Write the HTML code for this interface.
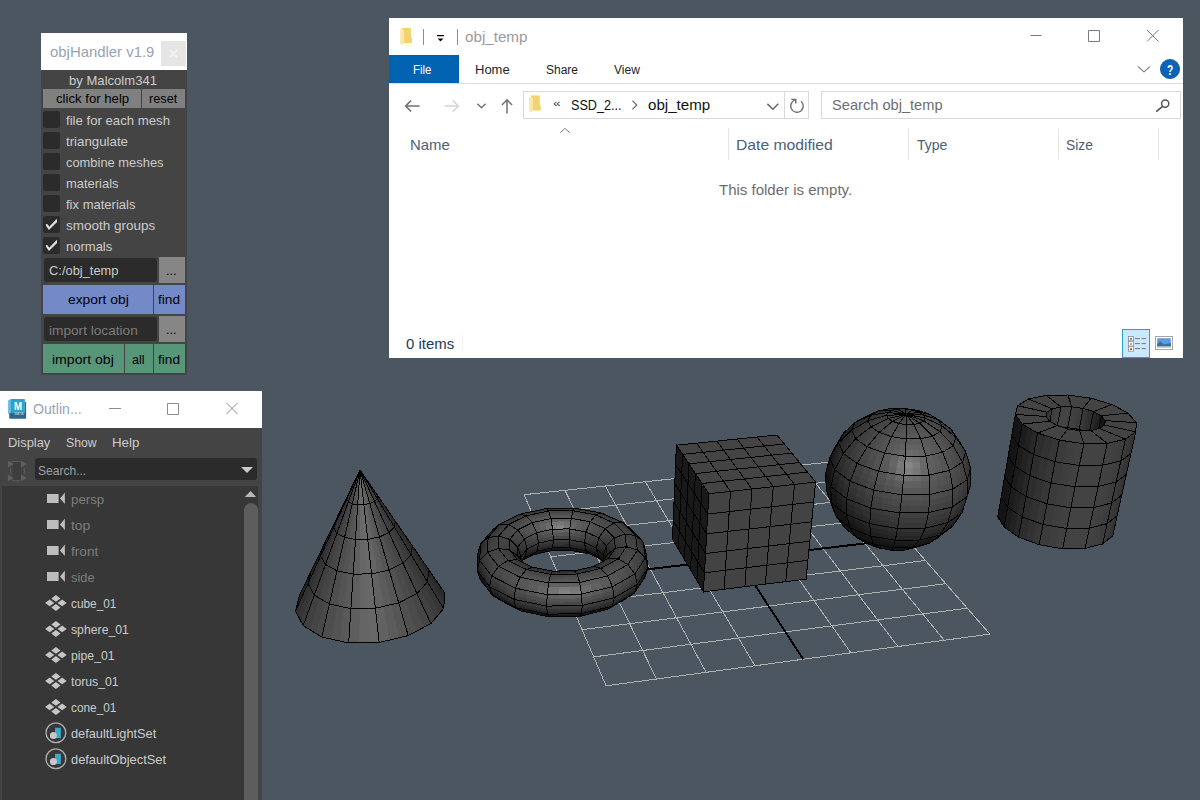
<!DOCTYPE html>
<html><head><meta charset="utf-8"><title>objHandler</title>
<style>
html,body{margin:0;padding:0}
body{width:1200px;height:800px;overflow:hidden;background:#4b5660;position:relative;font-family:"Liberation Sans",sans-serif;}
.abs{position:absolute}
.t{position:absolute;white-space:nowrap;line-height:1;transform-origin:0 0}
/* objHandler */
#oh{left:41px;top:33px;width:146px;height:342px;background:#444}
#oh .title{left:0;top:0;width:146px;height:37px;background:#fff}
#oh .close{left:120px;top:8px;width:25px;height:25px;background:#e5e5e5}
.btn{position:absolute;background:#808080;color:#000;text-align:center}
.cb{position:absolute;left:2px;width:17px;height:17px;border-radius:2px;background:#2b2b2b}
.fld{position:absolute;background:#2b2b2b;border-radius:3px}
.lbl{color:#d0d0d0;font-size:13px}
/* outliner */
#ol{left:0;top:391px;width:262px;height:409px;background:#444}
#ol .title{left:0;top:0;width:262px;height:37px;background:#fff}
#ol .list{left:2px;top:95px;width:256px;height:314px;background:#373737}
#ol .sb{left:244px;top:112px;width:14px;height:300px;background:#5d5d5d;border-radius:7px 7px 0 0}
.row{color:#d0d0d0;font-size:13px}
.dim{color:#7d7d7d}
/* explorer */
#ex{left:389px;top:18px;width:794px;height:340px;background:#fff}
#ex .file{left:0;top:37px;width:70px;height:28px;background:#0063b1}
#ex .rline{left:0;top:65px;width:794px;height:1px;background:#dadbdc}
.box{position:absolute;border:1px solid #d9d9d9;box-sizing:border-box;background:#fff}
.vdiv{position:absolute;width:1px;background:#e5e5e5}
</style></head><body>
<svg width="1200" height="800" viewBox="0 0 1200 800" style="position:absolute;left:0;top:0">
<style>.w{fill:none;stroke:#000;stroke-width:1}.g20{fill:#141414;stroke:#141414}.g21{fill:#151515;stroke:#151515}.g22{fill:#161616;stroke:#161616}.g23{fill:#171717;stroke:#171717}.g24{fill:#181818;stroke:#181818}.g25{fill:#191919;stroke:#191919}.g26{fill:#1a1a1a;stroke:#1a1a1a}.g27{fill:#1b1b1b;stroke:#1b1b1b}.g28{fill:#1c1c1c;stroke:#1c1c1c}.g29{fill:#1d1d1d;stroke:#1d1d1d}.g30{fill:#1e1e1e;stroke:#1e1e1e}.g31{fill:#1f1f1f;stroke:#1f1f1f}.g32{fill:#202020;stroke:#202020}.g33{fill:#212121;stroke:#212121}.g34{fill:#222222;stroke:#222222}.g35{fill:#232323;stroke:#232323}.g36{fill:#242424;stroke:#242424}.g37{fill:#252525;stroke:#252525}.g38{fill:#262626;stroke:#262626}.g39{fill:#272727;stroke:#272727}.g40{fill:#282828;stroke:#282828}.g41{fill:#292929;stroke:#292929}.g42{fill:#2a2a2a;stroke:#2a2a2a}.g43{fill:#2b2b2b;stroke:#2b2b2b}.g44{fill:#2c2c2c;stroke:#2c2c2c}.g45{fill:#2d2d2d;stroke:#2d2d2d}.g46{fill:#2e2e2e;stroke:#2e2e2e}.g47{fill:#2f2f2f;stroke:#2f2f2f}.g48{fill:#303030;stroke:#303030}.g49{fill:#313131;stroke:#313131}.g50{fill:#323232;stroke:#323232}.g51{fill:#333333;stroke:#333333}.g52{fill:#343434;stroke:#343434}.g53{fill:#353535;stroke:#353535}.g54{fill:#363636;stroke:#363636}.g55{fill:#373737;stroke:#373737}.g56{fill:#383838;stroke:#383838}.g57{fill:#393939;stroke:#393939}.g58{fill:#3a3a3a;stroke:#3a3a3a}.g59{fill:#3b3b3b;stroke:#3b3b3b}.g60{fill:#3c3c3c;stroke:#3c3c3c}.g61{fill:#3d3d3d;stroke:#3d3d3d}.g62{fill:#3e3e3e;stroke:#3e3e3e}.g63{fill:#3f3f3f;stroke:#3f3f3f}.g64{fill:#404040;stroke:#404040}.g65{fill:#414141;stroke:#414141}.g66{fill:#424242;stroke:#424242}.g67{fill:#434343;stroke:#434343}.g68{fill:#444444;stroke:#444444}.g69{fill:#454545;stroke:#454545}.g70{fill:#464646;stroke:#464646}.g71{fill:#474747;stroke:#474747}.g72{fill:#484848;stroke:#484848}.g73{fill:#494949;stroke:#494949}.g74{fill:#4a4a4a;stroke:#4a4a4a}.g75{fill:#4b4b4b;stroke:#4b4b4b}.g76{fill:#4c4c4c;stroke:#4c4c4c}.g77{fill:#4d4d4d;stroke:#4d4d4d}.g78{fill:#4e4e4e;stroke:#4e4e4e}.g79{fill:#4f4f4f;stroke:#4f4f4f}.g80{fill:#505050;stroke:#505050}.g81{fill:#515151;stroke:#515151}.g82{fill:#525252;stroke:#525252}.g83{fill:#535353;stroke:#535353}.g84{fill:#545454;stroke:#545454}.g85{fill:#555555;stroke:#555555}.g86{fill:#565656;stroke:#565656}.g87{fill:#575757;stroke:#575757}.g88{fill:#585858;stroke:#585858}.g89{fill:#595959;stroke:#595959}.g90{fill:#5a5a5a;stroke:#5a5a5a}.g91{fill:#5b5b5b;stroke:#5b5b5b}.g92{fill:#5c5c5c;stroke:#5c5c5c}.g93{fill:#5d5d5d;stroke:#5d5d5d}.g94{fill:#5e5e5e;stroke:#5e5e5e}.g95{fill:#5f5f5f;stroke:#5f5f5f}.g96{fill:#606060;stroke:#606060}.g97{fill:#616161;stroke:#616161}.g98{fill:#626262;stroke:#626262}.g99{fill:#636363;stroke:#636363}.g100{fill:#646464;stroke:#646464}.g101{fill:#656565;stroke:#656565}.g102{fill:#666666;stroke:#666666}.g103{fill:#676767;stroke:#676767}.g104{fill:#686868;stroke:#686868}.g105{fill:#696969;stroke:#696969}.g106{fill:#6a6a6a;stroke:#6a6a6a}.g107{fill:#6b6b6b;stroke:#6b6b6b}.g108{fill:#6c6c6c;stroke:#6c6c6c}.g110{fill:#6e6e6e;stroke:#6e6e6e}.g111{fill:#6f6f6f;stroke:#6f6f6f}.g114{fill:#727272;stroke:#727272}.g116{fill:#747474;stroke:#747474}.g118{fill:#767676;stroke:#767676}.g119{fill:#777777;stroke:#777777}.g121{fill:#797979;stroke:#797979}.g122{fill:#7a7a7a;stroke:#7a7a7a}.g123{fill:#7b7b7b;stroke:#7b7b7b}.g125{fill:#7d7d7d;stroke:#7d7d7d}.g128{fill:#808080;stroke:#808080}.g130{fill:#828282;stroke:#828282}.g132{fill:#848484;stroke:#848484}.g134{fill:#868686;stroke:#868686}</style>
<path shape-rendering="crispEdges" fill="none" stroke="#b0b0b0" stroke-width="1" d="M524.1,494.7 L606.1,685.8 M524.1,494.7 L838.5,461.1 M565.0,490.3 L656.5,679.1 M532.5,514.3 L854.2,479.0 M605.4,486.0 L706.1,672.4 M541.4,535.0 L870.7,497.9 M645.3,481.7 L755.0,665.8 M550.7,556.8 L888.0,517.7 M723.9,473.3 L850.9,652.8 M571.0,604.0 L925.5,560.5 M762.5,469.2 L897.9,646.5 M582.0,629.7 L945.8,583.7 M800.7,465.1 L944.2,640.3 M593.7,656.9 L967.2,608.2 M838.5,461.1 L989.9,634.1 M606.1,685.8 L989.9,634.1"/>
<path shape-rendering="crispEdges" fill="none" stroke="#000" stroke-width="2" d="M684.8,477.5 L803.3,659.3 M560.6,579.7 L906.3,538.5"/>
<g shape-rendering="crispEdges" stroke-width=".7">
<path class="g59" d="M1067.0,490.2 1063.3,489.6 1059.4,509.3 1063.1,509.9Z"/>
<path class="g62" d="M1063.3,489.6 1059.6,489.1 1055.8,508.7 1059.4,509.3Z"/>
<path class="g65" d="M1059.6,489.1 1055.9,488.5 1052.1,508.1 1055.8,508.7Z"/>
<path class="w" d="M1067.0,490.2 1055.9,488.5 1052.1,508.1 1063.1,509.9Z"/>
<path class="g45" d="M1077.0,493.7 1073.6,492.5 1069.7,512.2 1073.0,513.4Z"/>
<path class="g50" d="M1073.6,492.5 1070.3,491.4 1066.4,511.0 1069.7,512.2Z"/>
<path class="g55" d="M1070.3,491.4 1067.0,490.2 1063.1,509.9 1066.4,511.0Z"/>
<path class="w" d="M1077.0,493.7 1067.0,490.2 1063.1,509.9 1073.0,513.4Z"/>
<path class="g67" d="M1055.9,488.5 1052.4,488.5 1048.6,508.1 1052.1,508.1Z"/>
<path class="g67" d="M1052.4,488.5 1048.9,488.6 1045.1,508.2 1048.6,508.1Z"/>
<path class="g67" d="M1048.9,488.6 1045.4,488.6 1041.7,508.2 1045.1,508.2Z"/>
<path class="w" d="M1055.9,488.5 1045.4,488.6 1041.7,508.2 1052.1,508.1Z"/>
<path class="g28" d="M1084.4,498.3 1081.9,496.7 1077.9,516.5 1080.3,518.0Z"/>
<path class="g34" d="M1081.9,496.7 1079.5,495.2 1075.4,514.9 1077.9,516.5Z"/>
<path class="g40" d="M1079.5,495.2 1077.0,493.7 1073.0,513.4 1075.4,514.9Z"/>
<path class="w" d="M1084.4,498.3 1077.0,493.7 1073.0,513.4 1080.3,518.0Z"/>
<path class="g66" d="M1045.4,488.6 1042.6,489.3 1038.9,508.9 1041.7,508.2Z"/>
<path class="g64" d="M1042.6,489.3 1039.7,490.0 1036.1,509.6 1038.9,508.9Z"/>
<path class="g62" d="M1039.7,490.0 1036.9,490.6 1033.3,510.3 1036.1,509.6Z"/>
<path class="w" d="M1045.4,488.6 1036.9,490.6 1033.3,510.3 1041.7,508.2Z"/>
<path class="g59" d="M1070.9,470.3 1067.2,469.7 1063.3,489.6 1067.0,490.2Z"/>
<path class="g62" d="M1067.2,469.7 1063.5,469.1 1059.6,489.1 1063.3,489.6Z"/>
<path class="g65" d="M1063.5,469.1 1059.8,468.5 1055.9,488.5 1059.6,489.1Z"/>
<path class="w" d="M1070.9,470.3 1059.8,468.5 1055.9,488.5 1067.0,490.2Z"/>
<path class="g45" d="M1081.0,473.6 1077.7,472.5 1073.6,492.5 1077.0,493.7Z"/>
<path class="g50" d="M1077.7,472.5 1074.3,471.4 1070.3,491.4 1073.6,492.5Z"/>
<path class="g55" d="M1074.3,471.4 1070.9,470.3 1067.0,490.2 1070.3,491.4Z"/>
<path class="w" d="M1081.0,473.6 1070.9,470.3 1067.0,490.2 1077.0,493.7Z"/>
<path class="g67" d="M1059.8,468.5 1056.2,468.6 1052.4,488.5 1055.9,488.5Z"/>
<path class="g67" d="M1056.2,468.6 1052.7,468.6 1048.9,488.6 1052.4,488.5Z"/>
<path class="g67" d="M1052.7,468.6 1049.2,468.7 1045.4,488.6 1048.9,488.6Z"/>
<path class="w" d="M1059.8,468.5 1049.2,468.7 1045.4,488.6 1055.9,488.5Z"/>
<path class="g20" d="M1088.1,503.4 1086.9,501.7 1082.8,521.5 1084.0,523.2Z"/>
<path class="g20" d="M1086.9,501.7 1085.6,500.0 1081.5,519.8 1082.8,521.5Z"/>
<path class="g22" d="M1085.6,500.0 1084.4,498.3 1080.3,518.0 1081.5,519.8Z"/>
<path class="w" d="M1088.1,503.4 1084.4,498.3 1080.3,518.0 1084.0,523.2Z"/>
<path class="g59" d="M1036.9,490.6 1035.2,491.8 1031.6,511.5 1033.3,510.3Z"/>
<path class="g55" d="M1035.2,491.8 1033.5,493.1 1029.8,512.8 1031.6,511.5Z"/>
<path class="g51" d="M1033.5,493.1 1031.8,494.3 1028.1,514.0 1029.8,512.8Z"/>
<path class="w" d="M1036.9,490.6 1031.8,494.3 1028.1,514.0 1033.3,510.3Z"/>
<path class="g28" d="M1088.6,478.1 1086.0,476.6 1081.9,496.7 1084.4,498.3Z"/>
<path class="g34" d="M1086.0,476.6 1083.5,475.1 1079.5,495.2 1081.9,496.7Z"/>
<path class="g40" d="M1083.5,475.1 1081.0,473.6 1077.0,493.7 1079.5,495.2Z"/>
<path class="w" d="M1088.6,478.1 1081.0,473.6 1077.0,493.7 1084.4,498.3Z"/>
<path class="g66" d="M1049.2,468.7 1046.3,469.3 1042.6,489.3 1045.4,488.6Z"/>
<path class="g64" d="M1046.3,469.3 1043.5,470.0 1039.7,490.0 1042.6,489.3Z"/>
<path class="g62" d="M1043.5,470.0 1040.6,470.7 1036.9,490.6 1039.7,490.0Z"/>
<path class="w" d="M1049.2,468.7 1040.6,470.7 1036.9,490.6 1045.4,488.6Z"/>
<path class="g59" d="M1075.0,450.0 1071.2,449.4 1067.2,469.7 1070.9,470.3Z"/>
<path class="g62" d="M1071.2,449.4 1067.4,448.9 1063.5,469.1 1067.2,469.7Z"/>
<path class="g65" d="M1067.4,448.9 1063.7,448.3 1059.8,468.5 1063.5,469.1Z"/>
<path class="w" d="M1075.0,450.0 1063.7,448.3 1059.8,468.5 1070.9,470.3Z"/>
<path class="g45" d="M1085.2,453.3 1081.8,452.2 1077.7,472.5 1081.0,473.6Z"/>
<path class="g50" d="M1081.8,452.2 1078.4,451.1 1074.3,471.4 1077.7,472.5Z"/>
<path class="g55" d="M1078.4,451.1 1075.0,450.0 1070.9,470.3 1074.3,471.4Z"/>
<path class="w" d="M1085.2,453.3 1075.0,450.0 1070.9,470.3 1081.0,473.6Z"/>
<path class="g67" d="M1063.7,448.3 1060.1,448.3 1056.2,468.6 1059.8,468.5Z"/>
<path class="g67" d="M1060.1,448.3 1056.6,448.4 1052.7,468.6 1056.2,468.6Z"/>
<path class="g67" d="M1056.6,448.4 1053.0,448.4 1049.2,468.7 1052.7,468.6Z"/>
<path class="w" d="M1063.7,448.3 1053.0,448.4 1049.2,468.7 1059.8,468.5Z"/>
<path class="g20" d="M1087.4,508.2 1087.7,506.6 1083.5,526.5 1083.3,528.2Z"/>
<path class="g20" d="M1087.7,506.6 1087.9,505.0 1083.8,524.9 1083.5,526.5Z"/>
<path class="g20" d="M1087.9,505.0 1088.1,503.4 1084.0,523.2 1083.8,524.9Z"/>
<path class="w" d="M1087.4,508.2 1088.1,503.4 1084.0,523.2 1083.3,528.2Z"/>
<path class="g46" d="M1031.8,494.3 1031.4,495.8 1027.8,515.6 1028.1,514.0Z"/>
<path class="g41" d="M1031.4,495.8 1031.1,497.4 1027.5,517.2 1027.8,515.6Z"/>
<path class="g35" d="M1031.1,497.4 1030.8,499.0 1027.1,518.8 1027.5,517.2Z"/>
<path class="w" d="M1031.8,494.3 1030.8,499.0 1027.1,518.8 1028.1,514.0Z"/>
<path class="g20" d="M1092.3,483.2 1091.1,481.5 1086.9,501.7 1088.1,503.4Z"/>
<path class="g20" d="M1091.1,481.5 1089.8,479.8 1085.6,500.0 1086.9,501.7Z"/>
<path class="g22" d="M1089.8,479.8 1088.6,478.1 1084.4,498.3 1085.6,500.0Z"/>
<path class="w" d="M1092.3,483.2 1088.6,478.1 1084.4,498.3 1088.1,503.4Z"/>
<path class="g59" d="M1040.6,470.7 1038.9,471.9 1035.2,491.8 1036.9,490.6Z"/>
<path class="g55" d="M1038.9,471.9 1037.2,473.0 1033.5,493.1 1035.2,491.8Z"/>
<path class="g51" d="M1037.2,473.0 1035.5,474.2 1031.8,494.3 1033.5,493.1Z"/>
<path class="w" d="M1040.6,470.7 1035.5,474.2 1031.8,494.3 1036.9,490.6Z"/>
<path class="g28" d="M1092.8,457.7 1090.2,456.2 1086.0,476.6 1088.6,478.1Z"/>
<path class="g34" d="M1090.2,456.2 1087.7,454.8 1083.5,475.1 1086.0,476.6Z"/>
<path class="g40" d="M1087.7,454.8 1085.2,453.3 1081.0,473.6 1083.5,475.1Z"/>
<path class="w" d="M1092.8,457.7 1085.2,453.3 1081.0,473.6 1088.6,478.1Z"/>
<path class="g66" d="M1053.0,448.4 1050.1,449.1 1046.3,469.3 1049.2,468.7Z"/>
<path class="g64" d="M1050.1,449.1 1047.3,449.7 1043.5,470.0 1046.3,469.3Z"/>
<path class="g62" d="M1047.3,449.7 1044.4,450.4 1040.6,470.7 1043.5,470.0Z"/>
<path class="w" d="M1053.0,448.4 1044.4,450.4 1040.6,470.7 1049.2,468.7Z"/>
<path class="g59" d="M1079.1,429.4 1075.3,428.8 1071.2,449.4 1075.0,450.0Z"/>
<path class="g63" d="M1075.3,428.8 1071.5,428.3 1067.4,448.9 1071.2,449.4Z"/>
<path class="g65" d="M1071.5,428.3 1067.7,427.7 1063.7,448.3 1067.4,448.9Z"/>
<path class="w" d="M1079.1,429.4 1067.7,427.7 1063.7,448.3 1075.0,450.0Z"/>
<path class="g68" d="M1067.9,395.0 1090.9,398.2 1083.2,408.4 1071.7,406.8Z"/>
<path class="w" d="M1067.9,395.0 1090.9,398.2 1083.2,408.4 1071.7,406.8Z"/>
<path class="g45" d="M1089.3,432.6 1085.9,431.5 1081.8,452.2 1085.2,453.3Z"/>
<path class="g50" d="M1085.9,431.5 1082.5,430.5 1078.4,451.1 1081.8,452.2Z"/>
<path class="g55" d="M1082.5,430.5 1079.1,429.4 1075.0,450.0 1078.4,451.1Z"/>
<path class="w" d="M1089.3,432.6 1079.1,429.4 1075.0,450.0 1085.2,453.3Z"/>
<path class="g67" d="M1067.7,427.7 1064.1,427.8 1060.1,448.3 1063.7,448.3Z"/>
<path class="g68" d="M1064.1,427.8 1060.5,427.8 1056.6,448.4 1060.1,448.3Z"/>
<path class="g67" d="M1060.5,427.8 1056.9,427.9 1053.0,448.4 1056.6,448.4Z"/>
<path class="w" d="M1067.7,427.7 1056.9,427.9 1053.0,448.4 1063.7,448.3Z"/>
<path class="g68" d="M1090.9,398.2 1112.0,404.5 1093.6,411.6 1083.2,408.4Z"/>
<path class="w" d="M1090.9,398.2 1112.0,404.5 1093.6,411.6 1083.2,408.4Z"/>
<path class="g68" d="M1046.1,395.3 1067.9,395.0 1071.7,406.8 1060.9,406.9Z"/>
<path class="w" d="M1046.1,395.3 1067.9,395.0 1071.7,406.8 1060.9,406.9Z"/>
<path class="g20" d="M1091.7,487.9 1091.9,486.3 1087.7,506.6 1087.4,508.2Z"/>
<path class="g20" d="M1091.9,486.3 1092.1,484.7 1087.9,505.0 1087.7,506.6Z"/>
<path class="g20" d="M1092.1,484.7 1092.3,483.2 1088.1,503.4 1087.9,505.0Z"/>
<path class="w" d="M1091.7,487.9 1092.3,483.2 1088.1,503.4 1087.4,508.2Z"/>
<path class="g46" d="M1035.5,474.2 1035.1,475.8 1031.4,495.8 1031.8,494.3Z"/>
<path class="g41" d="M1035.1,475.8 1034.8,477.3 1031.1,497.4 1031.4,495.8Z"/>
<path class="g35" d="M1034.8,477.3 1034.5,478.9 1030.8,499.0 1031.1,497.4Z"/>
<path class="w" d="M1035.5,474.2 1034.5,478.9 1030.8,499.0 1031.8,494.3Z"/>
<path class="g20" d="M1096.6,462.6 1095.3,461.0 1091.1,481.5 1092.3,483.2Z"/>
<path class="g20" d="M1095.3,461.0 1094.0,459.3 1089.8,479.8 1091.1,481.5Z"/>
<path class="g22" d="M1094.0,459.3 1092.8,457.7 1088.6,478.1 1089.8,479.8Z"/>
<path class="w" d="M1096.6,462.6 1092.8,457.7 1088.6,478.1 1092.3,483.2Z"/>
<path class="g59" d="M1044.4,450.4 1042.7,451.5 1038.9,471.9 1040.6,470.7Z"/>
<path class="g55" d="M1042.7,451.5 1041.0,452.7 1037.2,473.0 1038.9,471.9Z"/>
<path class="g51" d="M1041.0,452.7 1039.2,453.9 1035.5,474.2 1037.2,473.0Z"/>
<path class="w" d="M1044.4,450.4 1039.2,453.9 1035.5,474.2 1040.6,470.7Z"/>
<path class="g28" d="M1097.0,436.9 1094.5,435.5 1090.2,456.2 1092.8,457.7Z"/>
<path class="g34" d="M1094.5,435.5 1091.9,434.0 1087.7,454.8 1090.2,456.2Z"/>
<path class="g40" d="M1091.9,434.0 1089.3,432.6 1085.2,453.3 1087.7,454.8Z"/>
<path class="w" d="M1097.0,436.9 1089.3,432.6 1085.2,453.3 1092.8,457.7Z"/>
<path class="g66" d="M1056.9,427.9 1054.0,428.5 1050.1,449.1 1053.0,448.4Z"/>
<path class="g64" d="M1054.0,428.5 1051.1,429.1 1047.3,449.7 1050.1,449.1Z"/>
<path class="g62" d="M1051.1,429.1 1048.3,429.8 1044.4,450.4 1047.3,449.7Z"/>
<path class="w" d="M1056.9,427.9 1048.3,429.8 1044.4,450.4 1053.0,448.4Z"/>
<path class="g59" d="M1083.2,408.4 1079.4,407.9 1075.3,428.8 1079.1,429.4Z"/>
<path class="g63" d="M1079.4,407.9 1075.5,407.3 1071.5,428.3 1075.3,428.8Z"/>
<path class="g65" d="M1075.5,407.3 1071.7,406.8 1067.7,427.7 1071.5,428.3Z"/>
<path class="w" d="M1083.2,408.4 1071.7,406.8 1067.7,427.7 1079.1,429.4Z"/>
<path class="g45" d="M1093.6,411.6 1090.1,410.5 1085.9,431.5 1089.3,432.6Z"/>
<path class="g50" d="M1090.1,410.5 1086.7,409.5 1082.5,430.5 1085.9,431.5Z"/>
<path class="g55" d="M1086.7,409.5 1083.2,408.4 1079.1,429.4 1082.5,430.5Z"/>
<path class="w" d="M1093.6,411.6 1083.2,408.4 1079.1,429.4 1089.3,432.6Z"/>
<path class="g67" d="M1071.7,406.8 1068.1,406.9 1064.1,427.8 1067.7,427.7Z"/>
<path class="g68" d="M1068.1,406.9 1064.5,406.9 1060.5,427.8 1064.1,427.8Z"/>
<path class="g67" d="M1064.5,406.9 1060.9,406.9 1056.9,427.9 1060.5,427.8Z"/>
<path class="w" d="M1071.7,406.8 1060.9,406.9 1056.9,427.9 1067.7,427.7Z"/>
<path class="g68" d="M1112.0,404.5 1128.0,413.1 1101.4,415.8 1093.6,411.6Z"/>
<path class="w" d="M1112.0,404.5 1128.0,413.1 1101.4,415.8 1093.6,411.6Z"/>
<path class="g68" d="M1028.5,399.0 1046.1,395.3 1060.9,406.9 1052.2,408.8Z"/>
<path class="w" d="M1028.5,399.0 1046.1,395.3 1060.9,406.9 1052.2,408.8Z"/>
<path class="g51" d="M1117.2,515.6 1113.9,518.3 1109.5,538.4 1112.8,535.7Z"/>
<path class="g55" d="M1113.9,518.3 1110.5,520.9 1106.1,541.1 1109.5,538.4Z"/>
<path class="g59" d="M1110.5,520.9 1107.1,523.6 1102.7,543.8 1106.1,541.1Z"/>
<path class="w" d="M1117.2,515.6 1107.1,523.6 1102.7,543.8 1112.8,535.7Z"/>
<path class="g22" d="M1007.6,507.2 1005.5,503.7 1002.0,523.6 1004.1,527.1Z"/>
<path class="g20" d="M1005.5,503.7 1003.3,500.2 999.9,520.0 1002.0,523.6Z"/>
<path class="g20" d="M1003.3,500.2 1001.2,496.7 997.8,516.5 999.9,520.0Z"/>
<path class="w" d="M1007.6,507.2 1001.2,496.7 997.8,516.5 1004.1,527.1Z"/>
<path class="g20" d="M1095.9,467.3 1096.2,465.7 1091.9,486.3 1091.7,487.9Z"/>
<path class="g20" d="M1096.2,465.7 1096.4,464.2 1092.1,484.7 1091.9,486.3Z"/>
<path class="g20" d="M1096.4,464.2 1096.6,462.6 1092.3,483.2 1092.1,484.7Z"/>
<path class="w" d="M1095.9,467.3 1096.6,462.6 1092.3,483.2 1091.7,487.9Z"/>
<path class="g20" d="M1100.9,441.8 1099.6,440.2 1095.3,461.0 1096.6,462.6Z"/>
<path class="g20" d="M1099.6,440.2 1098.3,438.5 1094.0,459.3 1095.3,461.0Z"/>
<path class="g22" d="M1098.3,438.5 1097.0,436.9 1092.8,457.7 1094.0,459.3Z"/>
<path class="w" d="M1100.9,441.8 1097.0,436.9 1092.8,457.7 1096.6,462.6Z"/>
<path class="g46" d="M1039.2,453.9 1038.9,455.4 1035.1,475.8 1035.5,474.2Z"/>
<path class="g41" d="M1038.9,455.4 1038.6,456.9 1034.8,477.3 1035.1,475.8Z"/>
<path class="g35" d="M1038.6,456.9 1038.2,458.4 1034.5,478.9 1034.8,477.3Z"/>
<path class="w" d="M1039.2,453.9 1038.2,458.4 1034.5,478.9 1035.5,474.2Z"/>
<path class="g59" d="M1048.3,429.8 1046.5,430.9 1042.7,451.5 1044.4,450.4Z"/>
<path class="g55" d="M1046.5,430.9 1044.8,432.0 1041.0,452.7 1042.7,451.5Z"/>
<path class="g51" d="M1044.8,432.0 1043.0,433.2 1039.2,453.9 1041.0,452.7Z"/>
<path class="w" d="M1048.3,429.8 1043.0,433.2 1039.2,453.9 1044.4,450.4Z"/>
<path class="g28" d="M1101.4,415.8 1098.8,414.4 1094.5,435.5 1097.0,436.9Z"/>
<path class="g34" d="M1098.8,414.4 1096.2,413.0 1091.9,434.0 1094.5,435.5Z"/>
<path class="g40" d="M1096.2,413.0 1093.6,411.6 1089.3,432.6 1091.9,434.0Z"/>
<path class="w" d="M1101.4,415.8 1093.6,411.6 1089.3,432.6 1097.0,436.9Z"/>
<path class="g66" d="M1060.9,406.9 1058.0,407.6 1054.0,428.5 1056.9,427.9Z"/>
<path class="g64" d="M1058.0,407.6 1055.1,408.2 1051.1,429.1 1054.0,428.5Z"/>
<path class="g62" d="M1055.1,408.2 1052.2,408.8 1048.3,429.8 1051.1,429.1Z"/>
<path class="w" d="M1060.9,406.9 1052.2,408.8 1048.3,429.8 1056.9,427.9Z"/>
<path class="g51" d="M1121.7,495.2 1118.4,497.8 1113.9,518.3 1117.2,515.6Z"/>
<path class="g55" d="M1118.4,497.8 1115.0,500.4 1110.5,520.9 1113.9,518.3Z"/>
<path class="g59" d="M1115.0,500.4 1111.6,503.0 1107.1,523.6 1110.5,520.9Z"/>
<path class="w" d="M1121.7,495.2 1111.6,503.0 1107.1,523.6 1117.2,515.6Z"/>
<path class="g68" d="M1128.0,413.1 1136.5,422.7 1105.3,420.6 1101.4,415.8Z"/>
<path class="w" d="M1128.0,413.1 1136.5,422.7 1105.3,420.6 1101.4,415.8Z"/>
<path class="g22" d="M1011.2,486.9 1009.0,483.5 1005.5,503.7 1007.6,507.2Z"/>
<path class="g20" d="M1009.0,483.5 1006.8,480.1 1003.3,500.2 1005.5,503.7Z"/>
<path class="g20" d="M1006.8,480.1 1004.6,476.7 1001.2,496.7 1003.3,500.2Z"/>
<path class="w" d="M1011.2,486.9 1004.6,476.7 1001.2,496.7 1007.6,507.2Z"/>
<path class="g68" d="M1017.7,405.7 1028.5,399.0 1052.2,408.8 1046.9,412.2Z"/>
<path class="w" d="M1017.7,405.7 1028.5,399.0 1052.2,408.8 1046.9,412.2Z"/>
<path class="g20" d="M1105.3,420.6 1104.0,419.0 1099.6,440.2 1100.9,441.8Z"/>
<path class="g20" d="M1104.0,419.0 1102.7,417.4 1098.3,438.5 1099.6,440.2Z"/>
<path class="g22" d="M1102.7,417.4 1101.4,415.8 1097.0,436.9 1098.3,438.5Z"/>
<path class="w" d="M1105.3,420.6 1101.4,415.8 1097.0,436.9 1100.9,441.8Z"/>
<path class="g20" d="M1100.3,446.3 1100.5,444.8 1096.2,465.7 1095.9,467.3Z"/>
<path class="g20" d="M1100.5,444.8 1100.7,443.3 1096.4,464.2 1096.2,465.7Z"/>
<path class="g20" d="M1100.7,443.3 1100.9,441.8 1096.6,462.6 1096.4,464.2Z"/>
<path class="w" d="M1100.3,446.3 1100.9,441.8 1096.6,462.6 1095.9,467.3Z"/>
<path class="g59" d="M1052.2,408.8 1050.4,409.9 1046.5,430.9 1048.3,429.8Z"/>
<path class="g55" d="M1050.4,409.9 1048.7,411.0 1044.8,432.0 1046.5,430.9Z"/>
<path class="g51" d="M1048.7,411.0 1046.9,412.2 1043.0,433.2 1044.8,432.0Z"/>
<path class="w" d="M1052.2,408.8 1046.9,412.2 1043.0,433.2 1048.3,429.8Z"/>
<path class="g46" d="M1043.0,433.2 1042.7,434.7 1038.9,455.4 1039.2,453.9Z"/>
<path class="g41" d="M1042.7,434.7 1042.4,436.2 1038.6,456.9 1038.9,455.4Z"/>
<path class="g35" d="M1042.4,436.2 1042.1,437.6 1038.2,458.4 1038.6,456.9Z"/>
<path class="w" d="M1043.0,433.2 1042.1,437.6 1038.2,458.4 1039.2,453.9Z"/>
<path class="g61" d="M1107.1,523.6 1101.2,525.1 1096.9,545.3 1102.7,543.8Z"/>
<path class="g64" d="M1101.2,525.1 1095.3,526.6 1091.0,546.9 1096.9,545.3Z"/>
<path class="g66" d="M1095.3,526.6 1089.4,528.1 1085.1,548.4 1091.0,546.9Z"/>
<path class="w" d="M1107.1,523.6 1089.4,528.1 1085.1,548.4 1102.7,543.8Z"/>
<path class="g40" d="M1022.3,517.0 1017.4,513.7 1013.8,533.7 1018.6,537.1Z"/>
<path class="g34" d="M1017.4,513.7 1012.5,510.4 1008.9,530.4 1013.8,533.7Z"/>
<path class="g28" d="M1012.5,510.4 1007.6,507.2 1004.1,527.1 1008.9,530.4Z"/>
<path class="w" d="M1022.3,517.0 1007.6,507.2 1004.1,527.1 1018.6,537.1Z"/>
<path class="g51" d="M1126.3,474.5 1122.9,477.0 1118.4,497.8 1121.7,495.2Z"/>
<path class="g55" d="M1122.9,477.0 1119.5,479.5 1115.0,500.4 1118.4,497.8Z"/>
<path class="g59" d="M1119.5,479.5 1116.1,482.1 1111.6,503.0 1115.0,500.4Z"/>
<path class="w" d="M1126.3,474.5 1116.1,482.1 1111.6,503.0 1121.7,495.2Z"/>
<path class="g20" d="M1104.7,425.0 1104.9,423.5 1100.5,444.8 1100.3,446.3Z"/>
<path class="g20" d="M1104.9,423.5 1105.1,422.0 1100.7,443.3 1100.5,444.8Z"/>
<path class="g20" d="M1105.1,422.0 1105.3,420.6 1100.9,441.8 1100.7,443.3Z"/>
<path class="w" d="M1104.7,425.0 1105.3,420.6 1100.9,441.8 1100.3,446.3Z"/>
<path class="g22" d="M1014.8,466.3 1012.6,462.9 1009.0,483.5 1011.2,486.9Z"/>
<path class="g20" d="M1012.6,462.9 1010.4,459.6 1006.8,480.1 1009.0,483.5Z"/>
<path class="g20" d="M1010.4,459.6 1008.2,456.3 1004.6,476.7 1006.8,480.1Z"/>
<path class="w" d="M1014.8,466.3 1008.2,456.3 1004.6,476.7 1011.2,486.9Z"/>
<path class="g46" d="M1046.9,412.2 1046.6,413.6 1042.7,434.7 1043.0,433.2Z"/>
<path class="g41" d="M1046.6,413.6 1046.3,415.1 1042.4,436.2 1042.7,434.7Z"/>
<path class="g35" d="M1046.3,415.1 1046.0,416.5 1042.1,437.6 1042.4,436.2Z"/>
<path class="w" d="M1046.9,412.2 1046.0,416.5 1042.1,437.6 1043.0,433.2Z"/>
<path class="g68" d="M1136.5,422.7 1135.7,431.9 1104.7,425.0 1105.3,420.6Z"/>
<path class="w" d="M1136.5,422.7 1135.7,431.9 1104.7,425.0 1105.3,420.6Z"/>
<path class="g68" d="M1015.4,414.4 1017.7,405.7 1046.9,412.2 1046.0,416.5Z"/>
<path class="w" d="M1015.4,414.4 1017.7,405.7 1046.9,412.2 1046.0,416.5Z"/>
<path class="g61" d="M1111.6,503.0 1105.7,504.5 1101.2,525.1 1107.1,523.6Z"/>
<path class="g64" d="M1105.7,504.5 1099.7,506.0 1095.3,526.6 1101.2,525.1Z"/>
<path class="g66" d="M1099.7,506.0 1093.7,507.5 1089.4,528.1 1095.3,526.6Z"/>
<path class="w" d="M1111.6,503.0 1093.7,507.5 1089.4,528.1 1107.1,523.6Z"/>
<path class="g40" d="M1026.0,496.5 1021.0,493.3 1017.4,513.7 1022.3,517.0Z"/>
<path class="g34" d="M1021.0,493.3 1016.1,490.1 1012.5,510.4 1017.4,513.7Z"/>
<path class="g28" d="M1016.1,490.1 1011.2,486.9 1007.6,507.2 1012.5,510.4Z"/>
<path class="w" d="M1026.0,496.5 1011.2,486.9 1007.6,507.2 1022.3,517.0Z"/>
<path class="g67" d="M1089.4,528.1 1081.8,528.2 1077.6,548.5 1085.1,548.4Z"/>
<path class="g67" d="M1081.8,528.2 1074.3,528.3 1070.2,548.6 1077.6,548.5Z"/>
<path class="g66" d="M1074.3,528.3 1066.8,528.4 1062.7,548.8 1070.2,548.6Z"/>
<path class="w" d="M1089.4,528.1 1066.8,528.4 1062.7,548.8 1085.1,548.4Z"/>
<path class="g55" d="M1043.1,524.5 1036.1,522.0 1032.3,542.2 1039.2,544.7Z"/>
<path class="g50" d="M1036.1,522.0 1029.2,519.5 1025.5,539.6 1032.3,542.2Z"/>
<path class="g45" d="M1029.2,519.5 1022.3,517.0 1018.6,537.1 1025.5,539.6Z"/>
<path class="w" d="M1043.1,524.5 1022.3,517.0 1018.6,537.1 1039.2,544.7Z"/>
<path class="g51" d="M1131.0,453.4 1127.6,455.8 1122.9,477.0 1126.3,474.5Z"/>
<path class="g55" d="M1127.6,455.8 1124.2,458.3 1119.5,479.5 1122.9,477.0Z"/>
<path class="g59" d="M1124.2,458.3 1120.8,460.9 1116.1,482.1 1119.5,479.5Z"/>
<path class="w" d="M1131.0,453.4 1120.8,460.9 1116.1,482.1 1126.3,474.5Z"/>
<path class="g22" d="M1018.5,445.4 1016.2,442.1 1012.6,462.9 1014.8,466.3Z"/>
<path class="g20" d="M1016.2,442.1 1014.0,438.8 1010.4,459.6 1012.6,462.9Z"/>
<path class="g20" d="M1014.0,438.8 1011.7,435.5 1008.2,456.3 1010.4,459.6Z"/>
<path class="w" d="M1018.5,445.4 1011.7,435.5 1008.2,456.3 1014.8,466.3Z"/>
<path class="g65" d="M1066.8,528.4 1058.8,527.1 1054.8,547.4 1062.7,548.8Z"/>
<path class="g62" d="M1058.8,527.1 1051.0,525.8 1047.0,546.1 1054.8,547.4Z"/>
<path class="g59" d="M1051.0,525.8 1043.1,524.5 1039.2,544.7 1047.0,546.1Z"/>
<path class="w" d="M1066.8,528.4 1043.1,524.5 1039.2,544.7 1062.7,548.8Z"/>
<path class="g61" d="M1116.1,482.1 1110.2,483.6 1105.7,504.5 1111.6,503.0Z"/>
<path class="g64" d="M1110.2,483.6 1104.2,485.0 1099.7,506.0 1105.7,504.5Z"/>
<path class="g66" d="M1104.2,485.0 1098.1,486.5 1093.7,507.5 1099.7,506.0Z"/>
<path class="w" d="M1116.1,482.1 1098.1,486.5 1093.7,507.5 1111.6,503.0Z"/>
<path class="g40" d="M1029.8,475.7 1024.8,472.6 1021.0,493.3 1026.0,496.5Z"/>
<path class="g34" d="M1024.8,472.6 1019.8,469.4 1016.1,490.1 1021.0,493.3Z"/>
<path class="g28" d="M1019.8,469.4 1014.8,466.3 1011.2,486.9 1016.1,490.1Z"/>
<path class="w" d="M1029.8,475.7 1014.8,466.3 1011.2,486.9 1026.0,496.5Z"/>
<path class="g67" d="M1093.7,507.5 1086.1,507.6 1081.8,528.2 1089.4,528.1Z"/>
<path class="g67" d="M1086.1,507.6 1078.5,507.7 1074.3,528.3 1081.8,528.2Z"/>
<path class="g67" d="M1078.5,507.7 1070.9,507.8 1066.8,528.4 1074.3,528.3Z"/>
<path class="w" d="M1093.7,507.5 1070.9,507.8 1066.8,528.4 1089.4,528.1Z"/>
<path class="g55" d="M1047.0,503.9 1040.0,501.4 1036.1,522.0 1043.1,524.5Z"/>
<path class="g50" d="M1040.0,501.4 1033.0,499.0 1029.2,519.5 1036.1,522.0Z"/>
<path class="g45" d="M1033.0,499.0 1026.0,496.5 1022.3,517.0 1029.2,519.5Z"/>
<path class="w" d="M1047.0,503.9 1026.0,496.5 1022.3,517.0 1043.1,524.5Z"/>
<path class="g51" d="M1135.7,431.9 1132.3,434.3 1127.6,455.8 1131.0,453.4Z"/>
<path class="g55" d="M1132.3,434.3 1128.9,436.8 1124.2,458.3 1127.6,455.8Z"/>
<path class="g59" d="M1128.9,436.8 1125.4,439.2 1120.8,460.9 1124.2,458.3Z"/>
<path class="w" d="M1135.7,431.9 1125.4,439.2 1120.8,460.9 1131.0,453.4Z"/>
<path class="g68" d="M1135.7,431.9 1125.4,439.2 1099.6,428.5 1104.7,425.0Z"/>
<path class="w" d="M1135.7,431.9 1125.4,439.2 1099.6,428.5 1104.7,425.0Z"/>
<path class="g68" d="M1022.2,424.1 1015.4,414.4 1046.0,416.5 1049.5,421.2Z"/>
<path class="w" d="M1022.2,424.1 1015.4,414.4 1046.0,416.5 1049.5,421.2Z"/>
<path class="g22" d="M1022.2,424.1 1019.9,420.8 1016.2,442.1 1018.5,445.4Z"/>
<path class="g20" d="M1019.9,420.8 1017.6,417.6 1014.0,438.8 1016.2,442.1Z"/>
<path class="g20" d="M1017.6,417.6 1015.4,414.4 1011.7,435.5 1014.0,438.8Z"/>
<path class="w" d="M1022.2,424.1 1015.4,414.4 1011.7,435.5 1018.5,445.4Z"/>
<path class="g65" d="M1070.9,507.8 1062.9,506.5 1058.8,527.1 1066.8,528.4Z"/>
<path class="g62" d="M1062.9,506.5 1055.0,505.2 1051.0,525.8 1058.8,527.1Z"/>
<path class="g59" d="M1055.0,505.2 1047.0,503.9 1043.1,524.5 1051.0,525.8Z"/>
<path class="w" d="M1070.9,507.8 1047.0,503.9 1043.1,524.5 1066.8,528.4Z"/>
<path class="g61" d="M1120.8,460.9 1114.7,462.3 1110.2,483.6 1116.1,482.1Z"/>
<path class="g64" d="M1114.7,462.3 1108.7,463.7 1104.2,485.0 1110.2,483.6Z"/>
<path class="g66" d="M1108.7,463.7 1102.6,465.2 1098.1,486.5 1104.2,485.0Z"/>
<path class="w" d="M1120.8,460.9 1102.6,465.2 1098.1,486.5 1116.1,482.1Z"/>
<path class="g40" d="M1033.7,454.6 1028.6,451.5 1024.8,472.6 1029.8,475.7Z"/>
<path class="g34" d="M1028.6,451.5 1023.5,448.4 1019.8,469.4 1024.8,472.6Z"/>
<path class="g28" d="M1023.5,448.4 1018.5,445.4 1014.8,466.3 1019.8,469.4Z"/>
<path class="w" d="M1033.7,454.6 1018.5,445.4 1014.8,466.3 1029.8,475.7Z"/>
<path class="g67" d="M1098.1,486.5 1090.5,486.6 1086.1,507.6 1093.7,507.5Z"/>
<path class="g67" d="M1090.5,486.6 1082.8,486.7 1078.5,507.7 1086.1,507.6Z"/>
<path class="g67" d="M1082.8,486.7 1075.1,486.8 1070.9,507.8 1078.5,507.7Z"/>
<path class="w" d="M1098.1,486.5 1075.1,486.8 1070.9,507.8 1093.7,507.5Z"/>
<path class="g55" d="M1051.0,483.0 1043.9,480.6 1040.0,501.4 1047.0,503.9Z"/>
<path class="g50" d="M1043.9,480.6 1036.8,478.1 1033.0,499.0 1040.0,501.4Z"/>
<path class="g45" d="M1036.8,478.1 1029.8,475.7 1026.0,496.5 1033.0,499.0Z"/>
<path class="w" d="M1051.0,483.0 1029.8,475.7 1026.0,496.5 1047.0,503.9Z"/>
<path class="g68" d="M1125.4,439.2 1107.2,443.4 1090.8,430.5 1099.6,428.5Z"/>
<path class="w" d="M1125.4,439.2 1107.2,443.4 1090.8,430.5 1099.6,428.5Z"/>
<path class="g65" d="M1075.1,486.8 1067.1,485.5 1062.9,506.5 1070.9,507.8Z"/>
<path class="g62" d="M1067.1,485.5 1059.0,484.3 1055.0,505.2 1062.9,506.5Z"/>
<path class="g59" d="M1059.0,484.3 1051.0,483.0 1047.0,503.9 1055.0,505.2Z"/>
<path class="w" d="M1075.1,486.8 1051.0,483.0 1047.0,503.9 1070.9,507.8Z"/>
<path class="g68" d="M1037.6,433.1 1022.2,424.1 1049.5,421.2 1057.2,425.6Z"/>
<path class="w" d="M1037.6,433.1 1022.2,424.1 1049.5,421.2 1057.2,425.6Z"/>
<path class="g61" d="M1125.4,439.2 1119.4,440.6 1114.7,462.3 1120.8,460.9Z"/>
<path class="g64" d="M1119.4,440.6 1113.3,442.0 1108.7,463.7 1114.7,462.3Z"/>
<path class="g66" d="M1113.3,442.0 1107.2,443.4 1102.6,465.2 1108.7,463.7Z"/>
<path class="w" d="M1125.4,439.2 1107.2,443.4 1102.6,465.2 1120.8,460.9Z"/>
<path class="g40" d="M1037.6,433.1 1032.4,430.1 1028.6,451.5 1033.7,454.6Z"/>
<path class="g34" d="M1032.4,430.1 1027.3,427.1 1023.5,448.4 1028.6,451.5Z"/>
<path class="g28" d="M1027.3,427.1 1022.2,424.1 1018.5,445.4 1023.5,448.4Z"/>
<path class="w" d="M1037.6,433.1 1022.2,424.1 1018.5,445.4 1033.7,454.6Z"/>
<path class="g67" d="M1102.6,465.2 1094.9,465.3 1090.5,486.6 1098.1,486.5Z"/>
<path class="g67" d="M1094.9,465.3 1087.2,465.4 1082.8,486.7 1090.5,486.6Z"/>
<path class="g67" d="M1087.2,465.4 1079.4,465.5 1075.1,486.8 1082.8,486.7Z"/>
<path class="w" d="M1102.6,465.2 1079.4,465.5 1075.1,486.8 1098.1,486.5Z"/>
<path class="g55" d="M1055.1,461.7 1047.9,459.3 1043.9,480.6 1051.0,483.0Z"/>
<path class="g50" d="M1047.9,459.3 1040.8,457.0 1036.8,478.1 1043.9,480.6Z"/>
<path class="g45" d="M1040.8,457.0 1033.7,454.6 1029.8,475.7 1036.8,478.1Z"/>
<path class="w" d="M1055.1,461.7 1033.7,454.6 1029.8,475.7 1051.0,483.0Z"/>
<path class="g68" d="M1107.2,443.4 1083.8,443.7 1079.5,430.7 1090.8,430.5Z"/>
<path class="w" d="M1107.2,443.4 1083.8,443.7 1079.5,430.7 1090.8,430.5Z"/>
<path class="g68" d="M1059.3,440.1 1037.6,433.1 1057.2,425.6 1067.7,428.9Z"/>
<path class="w" d="M1059.3,440.1 1037.6,433.1 1057.2,425.6 1067.7,428.9Z"/>
<path class="g65" d="M1079.4,465.5 1071.3,464.2 1067.1,485.5 1075.1,486.8Z"/>
<path class="g62" d="M1071.3,464.2 1063.2,463.0 1059.0,484.3 1067.1,485.5Z"/>
<path class="g59" d="M1063.2,463.0 1055.1,461.7 1051.0,483.0 1059.0,484.3Z"/>
<path class="w" d="M1079.4,465.5 1055.1,461.7 1051.0,483.0 1075.1,486.8Z"/>
<path class="g68" d="M1083.8,443.7 1059.3,440.1 1067.7,428.9 1079.5,430.7Z"/>
<path class="w" d="M1083.8,443.7 1059.3,440.1 1067.7,428.9 1079.5,430.7Z"/>
<path class="g67" d="M1107.2,443.4 1099.4,443.5 1094.9,465.3 1102.6,465.2Z"/>
<path class="g67" d="M1099.4,443.5 1091.6,443.6 1087.2,465.4 1094.9,465.3Z"/>
<path class="g67" d="M1091.6,443.6 1083.8,443.7 1079.4,465.5 1087.2,465.4Z"/>
<path class="w" d="M1107.2,443.4 1083.8,443.7 1079.4,465.5 1102.6,465.2Z"/>
<path class="g55" d="M1059.3,440.1 1052.0,437.8 1047.9,459.3 1055.1,461.7Z"/>
<path class="g50" d="M1052.0,437.8 1044.8,435.4 1040.8,457.0 1047.9,459.3Z"/>
<path class="g45" d="M1044.8,435.4 1037.6,433.1 1033.7,454.6 1040.8,457.0Z"/>
<path class="w" d="M1059.3,440.1 1037.6,433.1 1033.7,454.6 1055.1,461.7Z"/>
<path class="g65" d="M1083.8,443.7 1075.6,442.5 1071.3,464.2 1079.4,465.5Z"/>
<path class="g63" d="M1075.6,442.5 1067.4,441.3 1063.2,463.0 1071.3,464.2Z"/>
<path class="g59" d="M1067.4,441.3 1059.3,440.1 1055.1,461.7 1063.2,463.0Z"/>
<path class="w" d="M1083.8,443.7 1059.3,440.1 1055.1,461.7 1079.4,465.5Z"/>
</g>
<g shape-rendering="crispEdges" stroke-width=".7">
<path class="g20" d="M831.4,502.8 829.7,498.6 831.5,503.5 833.1,507.6Z"/>
<path class="g20" d="M833.1,507.6 831.5,503.5 833.2,508.4 834.8,512.4Z"/>
<path class="g20" d="M834.8,512.4 833.2,508.4 834.9,513.3 836.5,517.1Z"/>
<path class="g20" d="M829.7,498.6 828.1,494.4 829.9,499.4 831.5,503.5Z"/>
<path class="g20" d="M831.5,503.5 829.9,499.4 831.7,504.5 833.2,508.4Z"/>
<path class="g20" d="M833.2,508.4 831.7,504.5 833.4,509.5 834.9,513.3Z"/>
<path class="g20" d="M828.1,494.4 826.4,490.3 828.3,495.4 829.9,499.4Z"/>
<path class="g20" d="M829.9,499.4 828.3,495.4 830.1,500.6 831.7,504.5Z"/>
<path class="g20" d="M831.7,504.5 830.1,500.6 832.0,505.7 833.4,509.5Z"/>
<path class="w" d="M831.4,502.8 826.4,490.3 832.0,505.7 836.5,517.1Z"/>
<path class="g20" d="M929.3,543.3 923.9,544.7 920.2,545.8 925.1,544.6Z"/>
<path class="g20" d="M925.1,544.6 920.2,545.8 916.6,546.9 920.9,545.9Z"/>
<path class="g20" d="M920.9,545.9 916.6,546.9 913.0,548.1 916.8,547.1Z"/>
<path class="g20" d="M923.9,544.7 918.4,546.0 915.3,547.0 920.2,545.8Z"/>
<path class="g20" d="M920.2,545.8 915.3,547.0 912.2,548.0 916.6,546.9Z"/>
<path class="g20" d="M916.6,546.9 912.2,548.0 909.1,549.0 913.0,548.1Z"/>
<path class="g20" d="M918.4,546.0 913.0,547.4 910.4,548.2 915.3,547.0Z"/>
<path class="g20" d="M915.3,547.0 910.4,548.2 907.8,549.1 912.2,548.0Z"/>
<path class="g20" d="M912.2,548.0 907.8,549.1 905.3,550.0 909.1,549.0Z"/>
<path class="w" d="M929.3,543.3 913.0,547.4 905.3,550.0 916.8,547.1Z"/>
<path class="g20" d="M952.6,526.3 948.4,529.2 944.3,532.3 948.2,529.6Z"/>
<path class="g20" d="M948.2,529.6 944.3,532.3 940.2,535.5 943.9,532.9Z"/>
<path class="g20" d="M943.9,532.9 940.2,535.5 936.2,538.6 939.6,536.2Z"/>
<path class="g23" d="M948.4,529.2 944.2,532.1 940.3,535.1 944.3,532.3Z"/>
<path class="g20" d="M944.3,532.3 940.3,535.1 936.5,538.0 940.2,535.5Z"/>
<path class="g20" d="M940.2,535.5 936.5,538.0 932.8,540.9 936.2,538.6Z"/>
<path class="g27" d="M944.2,532.1 939.9,535.0 936.4,537.8 940.3,535.1Z"/>
<path class="g21" d="M940.3,535.1 936.4,537.8 932.8,540.6 936.5,538.0Z"/>
<path class="g20" d="M936.5,538.0 932.8,540.6 929.3,543.3 932.8,540.9Z"/>
<path class="w" d="M952.6,526.3 939.9,535.0 929.3,543.3 939.6,536.2Z"/>
<path class="g51" d="M950.8,428.9 952.5,431.7 955.5,436.1 953.6,433.0Z"/>
<path class="g47" d="M953.6,433.0 955.5,436.1 958.5,440.4 956.4,437.1Z"/>
<path class="g44" d="M956.4,437.1 958.5,440.4 961.4,444.7 959.3,441.2Z"/>
<path class="g55" d="M952.5,431.7 954.2,434.6 957.4,439.2 955.5,436.1Z"/>
<path class="g52" d="M955.5,436.1 957.4,439.2 960.5,443.7 958.5,440.4Z"/>
<path class="g49" d="M958.5,440.4 960.5,443.7 963.6,448.3 961.4,444.7Z"/>
<path class="g59" d="M954.2,434.6 956.0,437.5 959.3,442.3 957.4,439.2Z"/>
<path class="g57" d="M957.4,439.2 959.3,442.3 962.5,447.1 960.5,443.7Z"/>
<path class="g54" d="M960.5,443.7 962.5,447.1 965.8,451.9 963.6,448.3Z"/>
<path class="w" d="M950.8,428.9 956.0,437.5 965.8,451.9 959.3,441.2Z"/>
<path class="g53" d="M905.1,408.9 907.6,409.3 907.8,409.2 904.6,408.8Z"/>
<path class="g48" d="M904.6,408.8 907.8,409.2 908.1,409.1 904.2,408.6Z"/>
<path class="g42" d="M904.2,408.6 908.1,409.1 908.3,409.1 903.7,408.4Z"/>
<path class="g53" d="M907.6,409.3 910.0,409.7 911.0,409.7 907.8,409.2Z"/>
<path class="g49" d="M907.8,409.2 911.0,409.7 912.0,409.7 908.1,409.1Z"/>
<path class="g44" d="M908.1,409.1 912.0,409.7 913.0,409.8 908.3,409.1Z"/>
<path class="g54" d="M910.0,409.7 912.4,410.0 914.2,410.2 911.0,409.7Z"/>
<path class="g50" d="M911.0,409.7 914.2,410.2 916.0,410.3 912.0,409.7Z"/>
<path class="g45" d="M912.0,409.7 916.0,410.3 917.7,410.4 913.0,409.8Z"/>
<path class="w" d="M905.1,408.9 912.4,410.0 917.7,410.4 903.7,408.4Z"/>
<path class="g29" d="M838.6,442.7 840.2,439.5 837.3,444.3 835.6,447.7Z"/>
<path class="g24" d="M835.6,447.7 837.3,444.3 834.5,449.2 832.7,452.7Z"/>
<path class="g20" d="M832.7,452.7 834.5,449.2 831.6,454.0 829.8,457.7Z"/>
<path class="g24" d="M840.2,439.5 841.8,436.2 839.0,440.9 837.3,444.3Z"/>
<path class="g20" d="M837.3,444.3 839.0,440.9 836.2,445.6 834.5,449.2Z"/>
<path class="g20" d="M834.5,449.2 836.2,445.6 833.4,450.3 831.6,454.0Z"/>
<path class="g20" d="M841.8,436.2 843.4,433.0 840.7,437.6 839.0,440.9Z"/>
<path class="g20" d="M839.0,440.9 840.7,437.6 838.0,442.1 836.2,445.6Z"/>
<path class="g20" d="M836.2,445.6 838.0,442.1 835.3,446.7 833.4,450.3Z"/>
<path class="w" d="M838.6,442.7 843.4,433.0 835.3,446.7 829.8,457.7Z"/>
<path class="g52" d="M897.9,409.0 900.3,409.0 898.3,408.8 895.2,408.9Z"/>
<path class="g47" d="M895.2,408.9 898.3,408.8 896.4,408.7 892.5,408.7Z"/>
<path class="g41" d="M892.5,408.7 896.4,408.7 894.5,408.5 889.9,408.6Z"/>
<path class="g52" d="M900.3,409.0 902.7,409.0 901.5,408.8 898.3,408.8Z"/>
<path class="g47" d="M898.3,408.8 901.5,408.8 900.3,408.6 896.4,408.7Z"/>
<path class="g42" d="M896.4,408.7 900.3,408.6 899.1,408.4 894.5,408.5Z"/>
<path class="g52" d="M902.7,409.0 905.1,408.9 904.6,408.8 901.5,408.8Z"/>
<path class="g47" d="M901.5,408.8 904.6,408.8 904.2,408.6 900.3,408.6Z"/>
<path class="g42" d="M900.3,408.6 904.2,408.6 903.7,408.4 899.1,408.4Z"/>
<path class="w" d="M897.9,409.0 905.1,408.9 903.7,408.4 889.9,408.6Z"/>
<path class="g44" d="M870.6,415.2 873.2,413.8 868.4,415.9 865.5,417.5Z"/>
<path class="g39" d="M865.5,417.5 868.4,415.9 863.8,418.1 860.5,419.9Z"/>
<path class="g35" d="M860.5,419.9 863.8,418.1 859.1,420.2 855.4,422.2Z"/>
<path class="g42" d="M873.2,413.8 875.7,412.3 871.4,414.3 868.4,415.9Z"/>
<path class="g37" d="M868.4,415.9 871.4,414.3 867.0,416.3 863.8,418.1Z"/>
<path class="g32" d="M863.8,418.1 867.0,416.3 862.7,418.2 859.1,420.2Z"/>
<path class="g40" d="M875.7,412.3 878.3,410.9 874.3,412.7 871.4,414.3Z"/>
<path class="g35" d="M871.4,414.3 874.3,412.7 870.3,414.5 867.0,416.3Z"/>
<path class="g29" d="M867.0,416.3 870.3,414.5 866.4,416.2 862.7,418.2Z"/>
<path class="w" d="M870.6,415.2 878.3,410.9 866.4,416.2 855.4,422.2Z"/>
<path class="g20" d="M873.4,544.1 867.7,541.9 869.7,543.3 874.8,545.3Z"/>
<path class="g20" d="M874.8,545.3 869.7,543.3 871.7,544.7 876.2,546.5Z"/>
<path class="g20" d="M876.2,546.5 871.7,544.7 873.7,546.1 877.7,547.7Z"/>
<path class="g20" d="M867.7,541.9 862.2,539.6 864.7,541.3 869.7,543.3Z"/>
<path class="g20" d="M869.7,543.3 864.7,541.3 867.3,542.9 871.7,544.7Z"/>
<path class="g20" d="M871.7,544.7 867.3,542.9 869.8,544.5 873.7,546.1Z"/>
<path class="g20" d="M862.2,539.6 856.6,537.4 859.7,539.3 864.7,541.3Z"/>
<path class="g20" d="M864.7,541.3 859.7,539.3 862.8,541.1 867.3,542.9Z"/>
<path class="g20" d="M867.3,542.9 862.8,541.1 865.9,543.0 869.8,544.5Z"/>
<path class="w" d="M873.4,544.1 856.6,537.4 865.9,543.0 877.7,547.7Z"/>
<path class="g55" d="M912.4,410.0 914.6,410.7 917.0,411.1 914.2,410.2Z"/>
<path class="g51" d="M914.2,410.2 917.0,411.1 919.4,411.4 916.0,410.3Z"/>
<path class="g47" d="M916.0,410.3 919.4,411.4 921.7,411.8 917.7,410.4Z"/>
<path class="g57" d="M914.6,410.7 916.7,411.4 919.7,412.0 917.0,411.1Z"/>
<path class="g53" d="M917.0,411.1 919.7,412.0 922.8,412.6 919.4,411.4Z"/>
<path class="g49" d="M919.4,411.4 922.8,412.6 925.8,413.1 921.7,411.8Z"/>
<path class="g58" d="M916.7,411.4 918.8,412.1 922.5,412.9 919.7,412.0Z"/>
<path class="g55" d="M919.7,412.0 922.5,412.9 926.2,413.7 922.8,412.6Z"/>
<path class="g51" d="M922.8,412.6 926.2,413.7 929.9,414.5 925.8,413.1Z"/>
<path class="w" d="M912.4,410.0 918.8,412.1 929.9,414.5 917.7,410.4Z"/>
<path class="g53" d="M891.8,410.3 893.8,409.9 889.9,409.9 887.3,410.5Z"/>
<path class="g48" d="M887.3,410.5 889.9,409.9 886.0,410.0 882.8,410.7Z"/>
<path class="g43" d="M882.8,410.7 886.0,410.0 882.2,410.1 878.3,410.9Z"/>
<path class="g53" d="M893.8,409.9 895.9,409.4 892.6,409.4 889.9,409.9Z"/>
<path class="g48" d="M889.9,409.9 892.6,409.4 889.3,409.4 886.0,410.0Z"/>
<path class="g42" d="M886.0,410.0 889.3,409.4 886.0,409.3 882.2,410.1Z"/>
<path class="g52" d="M895.9,409.4 897.9,409.0 895.2,408.9 892.6,409.4Z"/>
<path class="g47" d="M892.6,409.4 895.2,408.9 892.5,408.7 889.3,409.4Z"/>
<path class="g42" d="M889.3,409.4 892.5,408.7 889.9,408.6 886.0,409.3Z"/>
<path class="w" d="M891.8,410.3 897.9,409.0 889.9,408.6 878.3,410.9Z"/>
<path class="g45" d="M970.7,468.0 969.6,471.9 969.5,477.6 970.7,473.7Z"/>
<path class="g41" d="M970.7,473.7 969.5,477.6 969.5,483.2 970.6,479.2Z"/>
<path class="g37" d="M970.6,479.2 969.5,483.2 969.4,488.8 970.6,484.8Z"/>
<path class="g51" d="M969.6,471.9 968.4,475.8 968.3,481.5 969.5,477.6Z"/>
<path class="g47" d="M969.5,477.6 968.3,481.5 968.3,487.2 969.5,483.2Z"/>
<path class="g43" d="M969.5,483.2 968.3,487.2 968.2,492.9 969.4,488.8Z"/>
<path class="g56" d="M968.4,475.8 967.2,479.7 967.1,485.5 968.3,481.5Z"/>
<path class="g52" d="M968.3,481.5 967.1,485.5 967.0,491.3 968.3,487.2Z"/>
<path class="g48" d="M968.3,487.2 967.0,491.3 967.0,497.1 968.2,492.9Z"/>
<path class="w" d="M970.7,468.0 967.2,479.7 967.0,497.1 970.6,484.8Z"/>
<path class="g20" d="M913.0,547.4 906.4,547.5 904.5,548.3 910.4,548.2Z"/>
<path class="g20" d="M910.4,548.2 904.5,548.3 902.6,549.2 907.8,549.1Z"/>
<path class="g20" d="M907.8,549.1 902.6,549.2 900.7,550.0 905.3,550.0Z"/>
<path class="g20" d="M906.4,547.5 899.8,547.6 898.6,548.4 904.5,548.3Z"/>
<path class="g20" d="M904.5,548.3 898.6,548.4 897.3,549.3 902.6,549.2Z"/>
<path class="g20" d="M902.6,549.2 897.3,549.3 896.1,550.1 900.7,550.0Z"/>
<path class="g20" d="M899.8,547.6 893.2,547.7 892.7,548.5 898.6,548.4Z"/>
<path class="g20" d="M898.6,548.4 892.7,548.5 892.1,549.3 897.3,549.3Z"/>
<path class="g20" d="M897.3,549.3 892.1,549.3 891.5,550.2 896.1,550.1Z"/>
<path class="w" d="M913.0,547.4 893.2,547.7 891.5,550.2 905.3,550.0Z"/>
<path class="g20" d="M850.0,527.8 845.4,524.2 847.9,527.6 852.2,531.0Z"/>
<path class="g20" d="M852.2,531.0 847.9,527.6 850.4,531.1 854.4,534.2Z"/>
<path class="g20" d="M854.4,534.2 850.4,531.1 852.9,534.5 856.6,537.4Z"/>
<path class="g20" d="M845.4,524.2 840.9,520.6 843.7,524.3 847.9,527.6Z"/>
<path class="g20" d="M847.9,527.6 843.7,524.3 846.5,527.9 850.4,531.1Z"/>
<path class="g20" d="M850.4,531.1 846.5,527.9 849.2,531.6 852.9,534.5Z"/>
<path class="g20" d="M840.9,520.6 836.5,517.1 839.5,521.0 843.7,524.3Z"/>
<path class="g20" d="M843.7,524.3 839.5,521.0 842.6,524.8 846.5,527.9Z"/>
<path class="g20" d="M846.5,527.9 842.6,524.8 845.6,528.7 849.2,531.6Z"/>
<path class="w" d="M850.0,527.8 836.5,517.1 845.6,528.7 856.6,537.4Z"/>
<path class="g20" d="M893.2,547.7 886.6,546.5 886.7,547.4 892.7,548.5Z"/>
<path class="g20" d="M892.7,548.5 886.7,547.4 886.8,548.4 892.1,549.3Z"/>
<path class="g20" d="M892.1,549.3 886.8,548.4 886.9,549.3 891.5,550.2Z"/>
<path class="g20" d="M886.6,546.5 880.0,545.3 880.7,546.4 886.7,547.4Z"/>
<path class="g20" d="M886.7,547.4 880.7,546.4 881.5,547.5 886.8,548.4Z"/>
<path class="g20" d="M886.8,548.4 881.5,547.5 882.3,548.5 886.9,549.3Z"/>
<path class="g20" d="M880.0,545.3 873.4,544.1 874.8,545.3 880.7,546.4Z"/>
<path class="g20" d="M880.7,546.4 874.8,545.3 876.2,546.5 881.5,547.5Z"/>
<path class="g20" d="M881.5,547.5 876.2,546.5 877.7,547.7 882.3,548.5Z"/>
<path class="w" d="M893.2,547.7 873.4,544.1 877.7,547.7 891.5,550.2Z"/>
<path class="g20" d="M830.8,486.7 829.1,482.4 829.3,487.8 831.0,492.1Z"/>
<path class="g20" d="M831.0,492.1 829.3,487.8 829.5,493.2 831.2,497.4Z"/>
<path class="g20" d="M831.2,497.4 829.5,493.2 829.7,498.6 831.4,502.8Z"/>
<path class="g20" d="M829.1,482.4 827.3,478.1 827.6,483.6 829.3,487.8Z"/>
<path class="g20" d="M829.3,487.8 827.6,483.6 827.8,489.0 829.5,493.2Z"/>
<path class="g20" d="M829.5,493.2 827.8,489.0 828.1,494.4 829.7,498.6Z"/>
<path class="g20" d="M827.3,478.1 825.6,473.9 825.9,479.4 827.6,483.6Z"/>
<path class="g20" d="M827.6,483.6 825.9,479.4 826.2,484.8 827.8,489.0Z"/>
<path class="g20" d="M827.8,489.0 826.2,484.8 826.4,490.3 828.1,494.4Z"/>
<path class="w" d="M830.8,486.7 825.6,473.9 826.4,490.3 831.4,502.8Z"/>
<path class="g41" d="M851.6,430.1 852.9,427.5 848.6,431.5 847.2,434.3Z"/>
<path class="g37" d="M847.2,434.3 848.6,431.5 844.4,435.5 842.9,438.5Z"/>
<path class="g33" d="M842.9,438.5 844.4,435.5 840.2,439.5 838.6,442.7Z"/>
<path class="g37" d="M852.9,427.5 854.2,424.8 850.0,428.6 848.6,431.5Z"/>
<path class="g33" d="M848.6,431.5 850.0,428.6 845.9,432.4 844.4,435.5Z"/>
<path class="g28" d="M844.4,435.5 845.9,432.4 841.8,436.2 840.2,439.5Z"/>
<path class="g33" d="M854.2,424.8 855.4,422.2 851.4,425.8 850.0,428.6Z"/>
<path class="g29" d="M850.0,428.6 851.4,425.8 847.4,429.4 845.9,432.4Z"/>
<path class="g24" d="M845.9,432.4 847.4,429.4 843.4,433.0 841.8,436.2Z"/>
<path class="w" d="M851.6,430.1 855.4,422.2 843.4,433.0 838.6,442.7Z"/>
<path class="g59" d="M918.8,412.1 920.3,413.0 924.5,414.1 922.5,412.9Z"/>
<path class="g56" d="M922.5,412.9 924.5,414.1 928.6,415.2 926.2,413.7Z"/>
<path class="g53" d="M926.2,413.7 928.6,415.2 932.8,416.3 929.9,414.5Z"/>
<path class="g61" d="M920.3,413.0 921.8,414.0 926.4,415.3 924.5,414.1Z"/>
<path class="g59" d="M924.5,414.1 926.4,415.3 931.0,416.7 928.6,415.2Z"/>
<path class="g56" d="M928.6,415.2 931.0,416.7 935.6,418.1 932.8,416.3Z"/>
<path class="g63" d="M921.8,414.0 923.2,414.9 928.3,416.6 926.4,415.3Z"/>
<path class="g61" d="M926.4,415.3 928.3,416.6 933.4,418.2 931.0,416.7Z"/>
<path class="g58" d="M931.0,416.7 933.4,418.2 938.5,419.9 935.6,418.1Z"/>
<path class="w" d="M918.8,412.1 923.2,414.9 938.5,419.9 929.9,414.5Z"/>
<path class="g59" d="M938.5,419.9 939.7,421.9 944.0,425.2 942.6,422.9Z"/>
<path class="g56" d="M942.6,422.9 944.0,425.2 948.2,428.4 946.7,425.9Z"/>
<path class="g54" d="M946.7,425.9 948.2,428.4 952.5,431.7 950.8,428.9Z"/>
<path class="g62" d="M939.7,421.9 940.9,423.9 945.4,427.5 944.0,425.2Z"/>
<path class="g60" d="M944.0,425.2 945.4,427.5 949.8,431.0 948.2,428.4Z"/>
<path class="g58" d="M948.2,428.4 949.8,431.0 954.2,434.6 952.5,431.7Z"/>
<path class="g65" d="M940.9,423.9 942.1,425.9 946.7,429.8 945.4,427.5Z"/>
<path class="g64" d="M945.4,427.5 946.7,429.8 951.4,433.6 949.8,431.0Z"/>
<path class="g62" d="M949.8,431.0 951.4,433.6 956.0,437.5 954.2,434.6Z"/>
<path class="w" d="M938.5,419.9 942.1,425.9 956.0,437.5 950.8,428.9Z"/>
<path class="g35" d="M961.9,513.0 957.3,516.2 954.3,520.5 958.8,517.4Z"/>
<path class="g30" d="M958.8,517.4 954.3,520.5 951.3,524.9 955.7,521.9Z"/>
<path class="g25" d="M955.7,521.9 951.3,524.9 948.4,529.2 952.6,526.3Z"/>
<path class="g39" d="M957.3,516.2 952.5,519.4 949.7,523.6 954.3,520.5Z"/>
<path class="g34" d="M954.3,520.5 949.7,523.6 946.9,527.9 951.3,524.9Z"/>
<path class="g29" d="M951.3,524.9 946.9,527.9 944.2,532.1 948.4,529.2Z"/>
<path class="g42" d="M952.5,519.4 947.8,522.6 945.2,526.8 949.7,523.6Z"/>
<path class="g37" d="M949.7,523.6 945.2,526.8 942.5,530.9 946.9,527.9Z"/>
<path class="g32" d="M946.9,527.9 942.5,530.9 939.9,535.0 944.2,532.1Z"/>
<path class="w" d="M961.9,513.0 947.8,522.6 939.9,535.0 952.6,526.3Z"/>
<path class="g56" d="M887.8,412.5 889.2,411.8 883.8,412.4 882.0,413.4Z"/>
<path class="g52" d="M882.0,413.4 883.8,412.4 878.5,413.1 876.3,414.3Z"/>
<path class="g48" d="M876.3,414.3 878.5,413.1 873.2,413.8 870.6,415.2Z"/>
<path class="g55" d="M889.2,411.8 890.5,411.0 885.5,411.5 883.8,412.4Z"/>
<path class="g51" d="M883.8,412.4 885.5,411.5 880.6,411.9 878.5,413.1Z"/>
<path class="g46" d="M878.5,413.1 880.6,411.9 875.7,412.3 873.2,413.8Z"/>
<path class="g54" d="M890.5,411.0 891.8,410.3 887.3,410.5 885.5,411.5Z"/>
<path class="g49" d="M885.5,411.5 887.3,410.5 882.8,410.7 880.6,411.9Z"/>
<path class="g45" d="M880.6,411.9 882.8,410.7 878.3,410.9 875.7,412.3Z"/>
<path class="w" d="M887.8,412.5 891.8,410.3 878.3,410.9 870.6,415.2Z"/>
<path class="g56" d="M965.8,451.9 964.7,455.3 966.3,460.8 967.4,457.3Z"/>
<path class="g53" d="M967.4,457.3 966.3,460.8 967.9,466.4 969.1,462.7Z"/>
<path class="g49" d="M969.1,462.7 967.9,466.4 969.6,471.9 970.7,468.0Z"/>
<path class="g61" d="M964.7,455.3 963.6,458.7 965.2,464.4 966.3,460.8Z"/>
<path class="g58" d="M966.3,460.8 965.2,464.4 966.8,470.1 967.9,466.4Z"/>
<path class="g54" d="M967.9,466.4 966.8,470.1 968.4,475.8 969.6,471.9Z"/>
<path class="g65" d="M963.6,458.7 962.5,462.2 964.1,468.0 965.2,464.4Z"/>
<path class="g62" d="M965.2,464.4 964.1,468.0 965.6,473.9 966.8,470.1Z"/>
<path class="g59" d="M966.8,470.1 965.6,473.9 967.2,479.7 968.4,475.8Z"/>
<path class="w" d="M965.8,451.9 962.5,462.2 967.2,479.7 970.7,468.0Z"/>
<path class="g29" d="M939.9,535.0 933.2,536.7 930.1,539.3 936.4,537.8Z"/>
<path class="g24" d="M936.4,537.8 930.1,539.3 927.0,542.0 932.8,540.6Z"/>
<path class="g20" d="M932.8,540.6 927.0,542.0 923.9,544.7 929.3,543.3Z"/>
<path class="g31" d="M933.2,536.7 926.5,538.3 923.8,540.9 930.1,539.3Z"/>
<path class="g25" d="M930.1,539.3 923.8,540.9 921.1,543.5 927.0,542.0Z"/>
<path class="g20" d="M927.0,542.0 921.1,543.5 918.4,546.0 923.9,544.7Z"/>
<path class="g32" d="M926.5,538.3 919.7,540.0 917.5,542.5 923.8,540.9Z"/>
<path class="g27" d="M923.8,540.9 917.5,542.5 915.2,544.9 921.1,543.5Z"/>
<path class="g21" d="M921.1,543.5 915.2,544.9 913.0,547.4 918.4,546.0Z"/>
<path class="w" d="M939.9,535.0 919.7,540.0 913.0,547.4 929.3,543.3Z"/>
<path class="g66" d="M906.0,414.4 906.6,412.7 905.7,412.6Z"/>
<path class="g62" d="M905.7,412.6 906.6,412.7 907.1,411.0 905.4,410.8Z"/>
<path class="g57" d="M905.4,410.8 907.1,411.0 907.6,409.3 905.1,408.9Z"/>
<path class="g66" d="M906.0,414.4 907.4,412.8 906.6,412.7Z"/>
<path class="g62" d="M906.6,412.7 907.4,412.8 908.7,411.2 907.1,411.0Z"/>
<path class="g58" d="M907.1,411.0 908.7,411.2 910.0,409.7 907.6,409.3Z"/>
<path class="g66" d="M906.0,414.4 908.2,412.9 907.4,412.8Z"/>
<path class="g62" d="M907.4,412.8 908.2,412.9 910.3,411.5 908.7,411.2Z"/>
<path class="g58" d="M908.7,411.2 910.3,411.5 912.4,410.0 910.0,409.7Z"/>
<path class="w" d="M906.0,414.4 912.4,410.0 905.1,408.9Z"/>
<path class="g66" d="M906.0,414.4 904.1,412.6 903.3,412.6Z"/>
<path class="g61" d="M903.3,412.6 904.1,412.6 902.2,410.8 900.6,410.8Z"/>
<path class="g57" d="M900.6,410.8 902.2,410.8 900.3,409.0 897.9,409.0Z"/>
<path class="g66" d="M906.0,414.4 904.9,412.6 904.1,412.6Z"/>
<path class="g61" d="M904.1,412.6 904.9,412.6 903.8,410.8 902.2,410.8Z"/>
<path class="g57" d="M902.2,410.8 903.8,410.8 902.7,409.0 900.3,409.0Z"/>
<path class="g66" d="M906.0,414.4 905.7,412.6 904.9,412.6Z"/>
<path class="g61" d="M904.9,412.6 905.7,412.6 905.4,410.8 903.8,410.8Z"/>
<path class="g57" d="M903.8,410.8 905.4,410.8 905.1,408.9 902.7,409.0Z"/>
<path class="w" d="M906.0,414.4 905.1,408.9 897.9,409.0Z"/>
<path class="g52" d="M868.0,420.7 868.8,418.9 863.5,421.8 862.5,423.9Z"/>
<path class="g49" d="M862.5,423.9 863.5,421.8 858.2,424.6 857.0,427.0Z"/>
<path class="g45" d="M857.0,427.0 858.2,424.6 852.9,427.5 851.6,430.1Z"/>
<path class="g49" d="M868.8,418.9 869.7,417.0 864.5,419.6 863.5,421.8Z"/>
<path class="g45" d="M863.5,421.8 864.5,419.6 859.3,422.2 858.2,424.6Z"/>
<path class="g41" d="M858.2,424.6 859.3,422.2 854.2,424.8 852.9,427.5Z"/>
<path class="g46" d="M869.7,417.0 870.6,415.2 865.5,417.5 864.5,419.6Z"/>
<path class="g42" d="M864.5,419.6 865.5,417.5 860.5,419.9 859.3,422.2Z"/>
<path class="g38" d="M859.3,422.2 860.5,419.9 855.4,422.2 854.2,424.8Z"/>
<path class="w" d="M868.0,420.7 870.6,415.2 855.4,422.2 851.6,430.1Z"/>
<path class="g33" d="M834.8,469.8 833.1,465.7 831.8,471.3 833.5,475.5Z"/>
<path class="g29" d="M833.5,475.5 831.8,471.3 830.4,476.9 832.1,481.1Z"/>
<path class="g24" d="M832.1,481.1 830.4,476.9 829.1,482.4 830.8,486.7Z"/>
<path class="g27" d="M833.1,465.7 831.4,461.7 830.1,467.2 831.8,471.3Z"/>
<path class="g23" d="M831.8,471.3 830.1,467.2 828.7,472.7 830.4,476.9Z"/>
<path class="g20" d="M830.4,476.9 828.7,472.7 827.3,478.1 829.1,482.4Z"/>
<path class="g21" d="M831.4,461.7 829.8,457.7 828.4,463.1 830.1,467.2Z"/>
<path class="g20" d="M830.1,467.2 828.4,463.1 827.0,468.5 828.7,472.7Z"/>
<path class="g20" d="M828.7,472.7 827.0,468.5 825.6,473.9 827.3,478.1Z"/>
<path class="w" d="M834.8,469.8 829.8,457.7 825.6,473.9 830.8,486.7Z"/>
<path class="g66" d="M906.0,414.4 908.9,413.2 908.2,412.9Z"/>
<path class="g63" d="M908.2,412.9 908.9,413.2 911.7,411.9 910.3,411.5Z"/>
<path class="g59" d="M910.3,411.5 911.7,411.9 914.6,410.7 912.4,410.0Z"/>
<path class="g66" d="M906.0,414.4 909.6,413.4 908.9,413.2Z"/>
<path class="g63" d="M908.9,413.2 909.6,413.4 913.2,412.4 911.7,411.9Z"/>
<path class="g60" d="M911.7,411.9 913.2,412.4 916.7,411.4 914.6,410.7Z"/>
<path class="g66" d="M906.0,414.4 910.3,413.7 909.6,413.4Z"/>
<path class="g64" d="M909.6,413.4 910.3,413.7 914.6,412.9 913.2,412.4Z"/>
<path class="g61" d="M913.2,412.4 914.6,412.9 918.8,412.1 916.7,411.4Z"/>
<path class="w" d="M906.0,414.4 918.8,412.1 912.4,410.0Z"/>
<path class="g65" d="M923.2,414.9 923.8,416.0 929.1,417.9 928.3,416.6Z"/>
<path class="g63" d="M928.3,416.6 929.1,417.9 934.4,419.9 933.4,418.2Z"/>
<path class="g61" d="M933.4,418.2 934.4,419.9 939.7,421.9 938.5,419.9Z"/>
<path class="g67" d="M923.8,416.0 924.4,417.0 929.9,419.3 929.1,417.9Z"/>
<path class="g65" d="M929.1,417.9 929.9,419.3 935.4,421.6 934.4,419.9Z"/>
<path class="g64" d="M934.4,419.9 935.4,421.6 940.9,423.9 939.7,421.9Z"/>
<path class="g68" d="M924.4,417.0 925.0,418.0 930.7,420.6 929.9,419.3Z"/>
<path class="g68" d="M929.9,419.3 930.7,420.6 936.4,423.3 935.4,421.6Z"/>
<path class="g67" d="M935.4,421.6 936.4,423.3 942.1,425.9 940.9,423.9Z"/>
<path class="w" d="M923.2,414.9 925.0,418.0 942.1,425.9 938.5,419.9Z"/>
<path class="g66" d="M906.0,414.4 901.9,412.9 901.3,413.0Z"/>
<path class="g62" d="M901.3,413.0 901.9,412.9 897.9,411.4 896.5,411.6Z"/>
<path class="g58" d="M896.5,411.6 897.9,411.4 893.8,409.9 891.8,410.3Z"/>
<path class="g66" d="M906.0,414.4 902.6,412.8 901.9,412.9Z"/>
<path class="g62" d="M901.9,412.9 902.6,412.8 899.2,411.1 897.9,411.4Z"/>
<path class="g57" d="M897.9,411.4 899.2,411.1 895.9,409.4 893.8,409.9Z"/>
<path class="g66" d="M906.0,414.4 903.3,412.6 902.6,412.8Z"/>
<path class="g61" d="M902.6,412.8 903.3,412.6 900.6,410.8 899.2,411.1Z"/>
<path class="g57" d="M899.2,411.1 900.6,410.8 897.9,409.0 895.9,409.4Z"/>
<path class="w" d="M906.0,414.4 897.9,409.0 891.8,410.3Z"/>
<path class="g24" d="M846.5,514.6 841.4,510.6 842.8,515.2 847.7,519.0Z"/>
<path class="g20" d="M847.7,519.0 842.8,515.2 844.1,519.7 848.8,523.4Z"/>
<path class="g20" d="M848.8,523.4 844.1,519.7 845.4,524.2 850.0,527.8Z"/>
<path class="g20" d="M841.4,510.6 836.4,506.7 837.9,511.4 842.8,515.2Z"/>
<path class="g20" d="M842.8,515.2 837.9,511.4 839.4,516.0 844.1,519.7Z"/>
<path class="g20" d="M844.1,519.7 839.4,516.0 840.9,520.6 845.4,524.2Z"/>
<path class="g20" d="M836.4,506.7 831.4,502.8 833.1,507.6 837.9,511.4Z"/>
<path class="g20" d="M837.9,511.4 833.1,507.6 834.8,512.4 839.4,516.0Z"/>
<path class="g20" d="M839.4,516.0 834.8,512.4 836.5,517.1 840.9,520.6Z"/>
<path class="w" d="M846.5,514.6 831.4,502.8 836.5,517.1 850.0,527.8Z"/>
<path class="g23" d="M870.6,536.0 863.7,533.2 865.1,536.1 871.6,538.7Z"/>
<path class="g20" d="M871.6,538.7 865.1,536.1 866.4,539.0 872.5,541.4Z"/>
<path class="g20" d="M872.5,541.4 866.4,539.0 867.7,541.9 873.4,544.1Z"/>
<path class="g20" d="M863.7,533.2 856.8,530.5 858.6,533.6 865.1,536.1Z"/>
<path class="g20" d="M865.1,536.1 858.6,533.6 860.4,536.6 866.4,539.0Z"/>
<path class="g20" d="M866.4,539.0 860.4,536.6 862.2,539.6 867.7,541.9Z"/>
<path class="g20" d="M856.8,530.5 850.0,527.8 852.2,531.0 858.6,533.6Z"/>
<path class="g20" d="M858.6,533.6 852.2,531.0 854.4,534.2 860.4,536.6Z"/>
<path class="g20" d="M860.4,536.6 854.4,534.2 856.6,537.4 862.2,539.6Z"/>
<path class="w" d="M870.6,536.0 850.0,527.8 856.6,537.4 873.4,544.1Z"/>
<path class="g67" d="M906.0,414.4 910.8,414.0 910.3,413.7Z"/>
<path class="g65" d="M910.3,413.7 910.8,414.0 915.6,413.5 914.6,412.9Z"/>
<path class="g62" d="M914.6,412.9 915.6,413.5 920.3,413.0 918.8,412.1Z"/>
<path class="g67" d="M906.0,414.4 911.3,414.3 910.8,414.0Z"/>
<path class="g65" d="M910.8,414.0 911.3,414.3 916.5,414.1 915.6,413.5Z"/>
<path class="g63" d="M915.6,413.5 916.5,414.1 921.8,414.0 920.3,413.0Z"/>
<path class="g67" d="M906.0,414.4 911.8,414.6 911.3,414.3Z"/>
<path class="g66" d="M911.3,414.3 911.8,414.6 917.5,414.8 916.5,414.1Z"/>
<path class="g65" d="M916.5,414.1 917.5,414.8 923.2,414.9 921.8,414.0Z"/>
<path class="w" d="M906.0,414.4 923.2,414.9 918.8,412.1Z"/>
<path class="g64" d="M956.0,437.5 955.1,440.2 958.3,445.2 959.3,442.3Z"/>
<path class="g61" d="M959.3,442.3 958.3,445.2 961.5,450.3 962.5,447.1Z"/>
<path class="g59" d="M962.5,447.1 961.5,450.3 964.7,455.3 965.8,451.9Z"/>
<path class="g68" d="M955.1,440.2 954.2,443.0 957.3,448.2 958.3,445.2Z"/>
<path class="g66" d="M958.3,445.2 957.3,448.2 960.5,453.5 961.5,450.3Z"/>
<path class="g63" d="M961.5,450.3 960.5,453.5 963.6,458.7 964.7,455.3Z"/>
<path class="g72" d="M954.2,443.0 953.2,445.7 956.3,451.2 957.3,448.2Z"/>
<path class="g70" d="M957.3,448.2 956.3,451.2 959.4,456.7 960.5,453.5Z"/>
<path class="g68" d="M960.5,453.5 959.4,456.7 962.5,462.2 963.6,458.7Z"/>
<path class="w" d="M956.0,437.5 953.2,445.7 962.5,462.2 965.8,451.9Z"/>
<path class="g49" d="M967.0,497.1 962.1,500.3 960.5,505.6 965.3,502.4Z"/>
<path class="g44" d="M965.3,502.4 960.5,505.6 958.9,510.9 963.6,507.7Z"/>
<path class="g40" d="M963.6,507.7 958.9,510.9 957.3,516.2 961.9,513.0Z"/>
<path class="g53" d="M962.1,500.3 957.2,503.6 955.6,508.9 960.5,505.6Z"/>
<path class="g48" d="M960.5,505.6 955.6,508.9 954.1,514.1 958.9,510.9Z"/>
<path class="g44" d="M958.9,510.9 954.1,514.1 952.5,519.4 957.3,516.2Z"/>
<path class="g56" d="M957.2,503.6 952.3,506.9 950.8,512.2 955.6,508.9Z"/>
<path class="g52" d="M955.6,508.9 950.8,512.2 949.3,517.4 954.1,514.1Z"/>
<path class="g47" d="M954.1,514.1 949.3,517.4 947.8,522.6 952.5,519.4Z"/>
<path class="w" d="M967.0,497.1 952.3,506.9 947.8,522.6 961.9,513.0Z"/>
<path class="g66" d="M906.0,414.4 900.4,413.5 899.9,413.8Z"/>
<path class="g63" d="M899.9,413.8 900.4,413.5 894.8,412.6 893.9,413.1Z"/>
<path class="g60" d="M893.9,413.1 894.8,412.6 889.2,411.8 887.8,412.5Z"/>
<path class="g66" d="M906.0,414.4 900.8,413.3 900.4,413.5Z"/>
<path class="g63" d="M900.4,413.5 900.8,413.3 895.6,412.1 894.8,412.6Z"/>
<path class="g59" d="M894.8,412.6 895.6,412.1 890.5,411.0 889.2,411.8Z"/>
<path class="g66" d="M906.0,414.4 901.3,413.0 900.8,413.3Z"/>
<path class="g62" d="M900.8,413.3 901.3,413.0 896.5,411.6 895.6,412.1Z"/>
<path class="g58" d="M895.6,412.1 896.5,411.6 891.8,410.3 890.5,411.0Z"/>
<path class="w" d="M906.0,414.4 891.8,410.3 887.8,412.5Z"/>
<path class="g61" d="M886.5,415.4 887.0,414.4 880.9,415.9 880.3,417.2Z"/>
<path class="g58" d="M880.3,417.2 880.9,415.9 874.9,417.4 874.1,419.0Z"/>
<path class="g55" d="M874.1,419.0 874.9,417.4 868.8,418.9 868.0,420.7Z"/>
<path class="g59" d="M887.0,414.4 887.4,413.4 881.5,414.6 880.9,415.9Z"/>
<path class="g56" d="M880.9,415.9 881.5,414.6 875.6,415.8 874.9,417.4Z"/>
<path class="g53" d="M874.9,417.4 875.6,415.8 869.7,417.0 868.8,418.9Z"/>
<path class="g58" d="M887.4,413.4 887.8,412.5 882.0,413.4 881.5,414.6Z"/>
<path class="g54" d="M881.5,414.6 882.0,413.4 876.3,414.3 875.6,415.8Z"/>
<path class="g50" d="M875.6,415.8 876.3,414.3 870.6,415.2 869.7,417.0Z"/>
<path class="w" d="M886.5,415.4 887.8,412.5 870.6,415.2 868.0,420.7Z"/>
<path class="g33" d="M919.7,540.0 911.6,540.1 909.8,542.6 917.5,542.5Z"/>
<path class="g27" d="M917.5,542.5 909.8,542.6 908.1,545.0 915.2,544.9Z"/>
<path class="g21" d="M915.2,544.9 908.1,545.0 906.4,547.5 913.0,547.4Z"/>
<path class="g32" d="M911.6,540.1 903.4,540.2 902.2,542.7 909.8,542.6Z"/>
<path class="g27" d="M909.8,542.6 902.2,542.7 901.0,545.1 908.1,545.0Z"/>
<path class="g21" d="M908.1,545.0 901.0,545.1 899.8,547.6 906.4,547.5Z"/>
<path class="g32" d="M903.4,540.2 895.3,540.3 894.6,542.8 902.2,542.7Z"/>
<path class="g26" d="M902.2,542.7 894.6,542.8 893.9,545.2 901.0,545.1Z"/>
<path class="g21" d="M901.0,545.1 893.9,545.2 893.2,547.7 899.8,547.6Z"/>
<path class="w" d="M919.7,540.0 895.3,540.3 893.2,547.7 913.0,547.4Z"/>
<path class="g44" d="M843.3,453.5 841.7,449.9 838.8,455.2 840.5,458.9Z"/>
<path class="g40" d="M840.5,458.9 838.8,455.2 836.0,460.5 837.7,464.4Z"/>
<path class="g37" d="M837.7,464.4 836.0,460.5 833.1,465.7 834.8,469.8Z"/>
<path class="g39" d="M841.7,449.9 840.1,446.3 837.2,451.4 838.8,455.2Z"/>
<path class="g35" d="M838.8,455.2 837.2,451.4 834.3,456.6 836.0,460.5Z"/>
<path class="g31" d="M836.0,460.5 834.3,456.6 831.4,461.7 833.1,465.7Z"/>
<path class="g34" d="M840.1,446.3 838.6,442.7 835.6,447.7 837.2,451.4Z"/>
<path class="g29" d="M837.2,451.4 835.6,447.7 832.7,452.7 834.3,456.6Z"/>
<path class="g25" d="M834.3,456.6 832.7,452.7 829.8,457.7 831.4,461.7Z"/>
<path class="w" d="M843.3,453.5 838.6,442.7 829.8,457.7 834.8,469.8Z"/>
<path class="g67" d="M906.0,414.4 912.0,414.9 911.8,414.6Z"/>
<path class="g67" d="M911.8,414.6 912.0,414.9 917.9,415.4 917.5,414.8Z"/>
<path class="g66" d="M917.5,414.8 917.9,415.4 923.8,416.0 923.2,414.9Z"/>
<path class="g68" d="M906.0,414.4 912.2,415.3 912.0,414.9Z"/>
<path class="g68" d="M912.0,414.9 912.2,415.3 918.3,416.1 917.9,415.4Z"/>
<path class="g67" d="M917.9,415.4 918.3,416.1 924.4,417.0 923.8,416.0Z"/>
<path class="g68" d="M906.0,414.4 912.4,415.6 912.2,415.3Z"/>
<path class="g68" d="M912.2,415.3 912.4,415.6 918.7,416.8 918.3,416.1Z"/>
<path class="g69" d="M918.3,416.1 918.7,416.8 925.0,418.0 924.4,417.0Z"/>
<path class="w" d="M906.0,414.4 925.0,418.0 923.2,414.9Z"/>
<path class="g68" d="M942.1,425.9 941.4,427.8 946.0,431.9 946.7,429.8Z"/>
<path class="g67" d="M946.7,429.8 946.0,431.9 950.5,436.1 951.4,433.6Z"/>
<path class="g66" d="M951.4,433.6 950.5,436.1 955.1,440.2 956.0,437.5Z"/>
<path class="g71" d="M941.4,427.8 940.7,429.7 945.2,434.1 946.0,431.9Z"/>
<path class="g71" d="M946.0,431.9 945.2,434.1 949.7,438.5 950.5,436.1Z"/>
<path class="g69" d="M950.5,436.1 949.7,438.5 954.2,443.0 955.1,440.2Z"/>
<path class="g74" d="M940.7,429.7 940.0,431.6 944.4,436.3 945.2,434.1Z"/>
<path class="g74" d="M945.2,434.1 944.4,436.3 948.8,441.0 949.7,438.5Z"/>
<path class="g73" d="M949.7,438.5 948.8,441.0 953.2,445.7 954.2,443.0Z"/>
<path class="w" d="M942.1,425.9 940.0,431.6 953.2,445.7 956.0,437.5Z"/>
<path class="g31" d="M895.3,540.3 887.0,538.9 886.9,541.4 894.6,542.8Z"/>
<path class="g25" d="M894.6,542.8 886.9,541.4 886.7,544.0 893.9,545.2Z"/>
<path class="g20" d="M893.9,545.2 886.7,544.0 886.6,546.5 893.2,547.7Z"/>
<path class="g28" d="M887.0,538.9 878.8,537.4 879.2,540.1 886.9,541.4Z"/>
<path class="g23" d="M886.9,541.4 879.2,540.1 879.6,542.7 886.7,544.0Z"/>
<path class="g20" d="M886.7,544.0 879.6,542.7 880.0,545.3 886.6,546.5Z"/>
<path class="g26" d="M878.8,537.4 870.6,536.0 871.6,538.7 879.2,540.1Z"/>
<path class="g21" d="M879.2,540.1 871.6,538.7 872.5,541.4 879.6,542.7Z"/>
<path class="g20" d="M879.6,542.7 872.5,541.4 873.4,544.1 880.0,545.3Z"/>
<path class="w" d="M895.3,540.3 870.6,536.0 873.4,544.1 893.2,547.7Z"/>
<path class="g67" d="M906.0,414.4 899.7,414.4 899.5,414.7Z"/>
<path class="g65" d="M899.5,414.7 899.7,414.4 893.3,414.4 893.0,415.1Z"/>
<path class="g63" d="M893.0,415.1 893.3,414.4 887.0,414.4 886.5,415.4Z"/>
<path class="g67" d="M906.0,414.4 899.8,414.1 899.7,414.4Z"/>
<path class="g64" d="M899.7,414.4 899.8,414.1 893.6,413.8 893.3,414.4Z"/>
<path class="g62" d="M893.3,414.4 893.6,413.8 887.4,413.4 887.0,414.4Z"/>
<path class="g66" d="M906.0,414.4 899.9,413.8 899.8,414.1Z"/>
<path class="g64" d="M899.8,414.1 899.9,413.8 893.9,413.1 893.6,413.8Z"/>
<path class="g61" d="M893.6,413.8 893.9,413.1 887.8,412.5 887.4,413.4Z"/>
<path class="w" d="M906.0,414.4 887.8,412.5 886.5,415.4Z"/>
<path class="g70" d="M925.0,418.0 924.6,419.0 930.2,421.9 930.7,420.6Z"/>
<path class="g70" d="M930.7,420.6 930.2,421.9 935.8,424.9 936.4,423.3Z"/>
<path class="g69" d="M936.4,423.3 935.8,424.9 941.4,427.8 942.1,425.9Z"/>
<path class="g72" d="M924.6,419.0 924.3,420.0 929.7,423.2 930.2,421.9Z"/>
<path class="g72" d="M930.2,421.9 929.7,423.2 935.2,426.5 935.8,424.9Z"/>
<path class="g72" d="M935.8,424.9 935.2,426.5 940.7,429.7 941.4,427.8Z"/>
<path class="g73" d="M924.3,420.0 923.9,420.9 929.3,424.5 929.7,423.2Z"/>
<path class="g74" d="M929.7,423.2 929.3,424.5 934.6,428.1 935.2,426.5Z"/>
<path class="g74" d="M935.2,426.5 934.6,428.1 940.0,431.6 940.7,429.7Z"/>
<path class="w" d="M925.0,418.0 923.9,420.9 940.0,431.6 942.1,425.9Z"/>
<path class="g68" d="M906.0,414.4 912.2,415.9 912.4,415.6Z"/>
<path class="g69" d="M912.4,415.6 912.2,415.9 918.4,417.5 918.7,416.8Z"/>
<path class="g70" d="M918.7,416.8 918.4,417.5 924.6,419.0 925.0,418.0Z"/>
<path class="g68" d="M906.0,414.4 912.1,416.3 912.2,415.9Z"/>
<path class="g70" d="M912.2,415.9 912.1,416.3 918.2,418.1 918.4,417.5Z"/>
<path class="g71" d="M918.4,417.5 918.2,418.1 924.3,420.0 924.6,419.0Z"/>
<path class="g69" d="M906.0,414.4 912.0,416.6 912.1,416.3Z"/>
<path class="g71" d="M912.1,416.3 912.0,416.6 917.9,418.8 918.2,418.1Z"/>
<path class="g72" d="M918.2,418.1 917.9,418.8 923.9,420.9 924.3,420.0Z"/>
<path class="w" d="M906.0,414.4 923.9,420.9 925.0,418.0Z"/>
<path class="g45" d="M947.8,522.6 940.3,524.4 937.9,528.5 945.2,526.8Z"/>
<path class="g40" d="M945.2,526.8 937.9,528.5 935.5,532.6 942.5,530.9Z"/>
<path class="g34" d="M942.5,530.9 935.5,532.6 933.2,536.7 939.9,535.0Z"/>
<path class="g47" d="M940.3,524.4 932.7,526.3 930.6,530.3 937.9,528.5Z"/>
<path class="g42" d="M937.9,528.5 930.6,530.3 928.5,534.3 935.5,532.6Z"/>
<path class="g36" d="M935.5,532.6 928.5,534.3 926.5,538.3 933.2,536.7Z"/>
<path class="g49" d="M932.7,526.3 925.1,528.1 923.3,532.1 930.6,530.3Z"/>
<path class="g43" d="M930.6,530.3 923.3,532.1 921.5,536.1 928.5,534.3Z"/>
<path class="g38" d="M928.5,534.3 921.5,536.1 919.7,540.0 926.5,538.3Z"/>
<path class="w" d="M947.8,522.6 925.1,528.1 919.7,540.0 939.9,535.0Z"/>
<path class="g54" d="M855.6,438.7 854.3,435.8 850.1,440.5 851.5,443.7Z"/>
<path class="g51" d="M851.5,443.7 850.1,440.5 845.9,445.2 847.4,448.6Z"/>
<path class="g48" d="M847.4,448.6 845.9,445.2 841.7,449.9 843.3,453.5Z"/>
<path class="g50" d="M854.3,435.8 852.9,433.0 848.6,437.4 850.1,440.5Z"/>
<path class="g46" d="M850.1,440.5 848.6,437.4 844.4,441.9 845.9,445.2Z"/>
<path class="g43" d="M845.9,445.2 844.4,441.9 840.1,446.3 841.7,449.9Z"/>
<path class="g45" d="M852.9,433.0 851.6,430.1 847.2,434.3 848.6,437.4Z"/>
<path class="g41" d="M848.6,437.4 847.2,434.3 842.9,438.5 844.4,441.9Z"/>
<path class="g38" d="M844.4,441.9 842.9,438.5 838.6,442.7 840.1,446.3Z"/>
<path class="w" d="M855.6,438.7 851.6,430.1 838.6,442.7 843.3,453.5Z"/>
<path class="g60" d="M967.2,479.7 962.5,482.8 962.3,488.7 967.1,485.5Z"/>
<path class="g57" d="M967.1,485.5 962.3,488.7 962.2,494.5 967.0,491.3Z"/>
<path class="g53" d="M967.0,491.3 962.2,494.5 962.1,500.3 967.0,497.1Z"/>
<path class="g65" d="M962.5,482.8 957.7,485.9 957.5,491.8 962.3,488.7Z"/>
<path class="g61" d="M962.3,488.7 957.5,491.8 957.4,497.7 962.2,494.5Z"/>
<path class="g57" d="M962.2,494.5 957.4,497.7 957.2,503.6 962.1,500.3Z"/>
<path class="g68" d="M957.7,485.9 952.9,489.1 952.7,495.0 957.5,491.8Z"/>
<path class="g65" d="M957.5,491.8 952.7,495.0 952.5,501.0 957.4,497.7Z"/>
<path class="g61" d="M957.4,497.7 952.5,501.0 952.3,506.9 957.2,503.6Z"/>
<path class="w" d="M967.2,479.7 952.9,489.1 952.3,506.9 967.0,497.1Z"/>
<path class="g68" d="M906.0,414.4 899.9,415.4 900.1,415.8Z"/>
<path class="g68" d="M900.1,415.8 899.9,415.4 893.8,416.4 894.1,417.1Z"/>
<path class="g67" d="M894.1,417.1 893.8,416.4 887.6,417.4 888.2,418.5Z"/>
<path class="g67" d="M906.0,414.4 899.7,415.1 899.9,415.4Z"/>
<path class="g67" d="M899.9,415.4 899.7,415.1 893.4,415.7 893.8,416.4Z"/>
<path class="g66" d="M893.8,416.4 893.4,415.7 887.1,416.4 887.6,417.4Z"/>
<path class="g67" d="M906.0,414.4 899.5,414.7 899.7,415.1Z"/>
<path class="g66" d="M899.7,415.1 899.5,414.7 893.0,415.1 893.4,415.7Z"/>
<path class="g64" d="M893.4,415.7 893.0,415.1 886.5,415.4 887.1,416.4Z"/>
<path class="w" d="M906.0,414.4 886.5,415.4 888.2,418.5Z"/>
<path class="g38" d="M846.6,498.7 841.3,494.7 841.3,500.0 846.6,504.0Z"/>
<path class="g33" d="M846.6,504.0 841.3,500.0 841.4,505.3 846.5,509.3Z"/>
<path class="g29" d="M846.5,509.3 841.4,505.3 841.4,510.6 846.5,514.6Z"/>
<path class="g32" d="M841.3,494.7 836.0,490.7 836.1,496.0 841.3,500.0Z"/>
<path class="g28" d="M841.3,500.0 836.1,496.0 836.3,501.4 841.4,505.3Z"/>
<path class="g23" d="M841.4,505.3 836.3,501.4 836.4,506.7 841.4,510.6Z"/>
<path class="g26" d="M836.0,490.7 830.8,486.7 831.0,492.1 836.1,496.0Z"/>
<path class="g22" d="M836.1,496.0 831.0,492.1 831.2,497.4 836.3,501.4Z"/>
<path class="g20" d="M836.3,501.4 831.2,497.4 831.4,502.8 836.4,506.7Z"/>
<path class="w" d="M846.6,498.7 830.8,486.7 831.4,502.8 846.5,514.6Z"/>
<path class="g62" d="M870.9,426.8 869.9,424.8 864.7,428.5 865.8,430.8Z"/>
<path class="g59" d="M865.8,430.8 864.7,428.5 859.5,432.2 860.7,434.8Z"/>
<path class="g57" d="M860.7,434.8 859.5,432.2 854.3,435.8 855.6,438.7Z"/>
<path class="g58" d="M869.9,424.8 868.9,422.7 863.6,426.2 864.7,428.5Z"/>
<path class="g56" d="M864.7,428.5 863.6,426.2 858.2,429.6 859.5,432.2Z"/>
<path class="g53" d="M859.5,432.2 858.2,429.6 852.9,433.0 854.3,435.8Z"/>
<path class="g55" d="M868.9,422.7 868.0,420.7 862.5,423.9 863.6,426.2Z"/>
<path class="g52" d="M863.6,426.2 862.5,423.9 857.0,427.0 858.2,429.6Z"/>
<path class="g49" d="M858.2,429.6 857.0,427.0 851.6,430.1 852.9,433.0Z"/>
<path class="w" d="M870.9,426.8 868.0,420.7 851.6,430.1 855.6,438.7Z"/>
<path class="g66" d="M888.2,418.5 887.6,417.4 881.7,419.9 882.4,421.2Z"/>
<path class="g65" d="M882.4,421.2 881.7,419.9 875.8,422.3 876.7,424.0Z"/>
<path class="g63" d="M876.7,424.0 875.8,422.3 869.9,424.8 870.9,426.8Z"/>
<path class="g64" d="M887.6,417.4 887.1,416.4 881.0,418.5 881.7,419.9Z"/>
<path class="g63" d="M881.7,419.9 881.0,418.5 875.0,420.6 875.8,422.3Z"/>
<path class="g61" d="M875.8,422.3 875.0,420.6 868.9,422.7 869.9,424.8Z"/>
<path class="g63" d="M887.1,416.4 886.5,415.4 880.3,417.2 881.0,418.5Z"/>
<path class="g60" d="M881.0,418.5 880.3,417.2 874.1,419.0 875.0,420.6Z"/>
<path class="g58" d="M875.0,420.6 874.1,419.0 868.0,420.7 868.9,422.7Z"/>
<path class="w" d="M888.2,418.5 886.5,415.4 868.0,420.7 870.9,426.8Z"/>
<path class="g69" d="M906.0,414.4 911.5,416.8 912.0,416.6Z"/>
<path class="g71" d="M912.0,416.6 911.5,416.8 917.0,419.3 917.9,418.8Z"/>
<path class="g73" d="M917.9,418.8 917.0,419.3 922.6,421.7 923.9,420.9Z"/>
<path class="g69" d="M906.0,414.4 911.1,417.1 911.5,416.8Z"/>
<path class="g72" d="M911.5,416.8 911.1,417.1 916.2,419.8 917.0,419.3Z"/>
<path class="g74" d="M917.0,419.3 916.2,419.8 921.3,422.5 922.6,421.7Z"/>
<path class="g69" d="M906.0,414.4 910.7,417.3 911.1,417.1Z"/>
<path class="g72" d="M911.1,417.1 910.7,417.3 915.3,420.3 916.2,419.8Z"/>
<path class="g75" d="M916.2,419.8 915.3,420.3 919.9,423.2 921.3,422.5Z"/>
<path class="w" d="M906.0,414.4 919.9,423.2 923.9,420.9Z"/>
<path class="g68" d="M906.0,414.4 901.1,416.4 901.6,416.7Z"/>
<path class="g70" d="M901.6,416.7 901.1,416.4 896.1,418.4 897.0,419.0Z"/>
<path class="g71" d="M897.0,419.0 896.1,418.4 891.1,420.4 892.5,421.3Z"/>
<path class="g68" d="M906.0,414.4 900.6,416.1 901.1,416.4Z"/>
<path class="g69" d="M901.1,416.4 900.6,416.1 895.1,417.8 896.1,418.4Z"/>
<path class="g70" d="M896.1,418.4 895.1,417.8 889.6,419.4 891.1,420.4Z"/>
<path class="g68" d="M906.0,414.4 900.1,415.8 900.6,416.1Z"/>
<path class="g68" d="M900.6,416.1 900.1,415.8 894.1,417.1 895.1,417.8Z"/>
<path class="g68" d="M895.1,417.8 894.1,417.1 888.2,418.5 889.6,419.4Z"/>
<path class="w" d="M906.0,414.4 888.2,418.5 892.5,421.3Z"/>
<path class="g38" d="M869.8,523.7 862.0,520.6 862.5,524.9 870.1,527.8Z"/>
<path class="g33" d="M870.1,527.8 862.5,524.9 863.1,529.1 870.4,531.9Z"/>
<path class="g28" d="M870.4,531.9 863.1,529.1 863.7,533.2 870.6,536.0Z"/>
<path class="g34" d="M862.0,520.6 854.2,517.6 855.1,521.9 862.5,524.9Z"/>
<path class="g29" d="M862.5,524.9 855.1,521.9 855.9,526.2 863.1,529.1Z"/>
<path class="g24" d="M863.1,529.1 855.9,526.2 856.8,530.5 863.7,533.2Z"/>
<path class="g29" d="M854.2,517.6 846.5,514.6 847.7,519.0 855.1,521.9Z"/>
<path class="g25" d="M855.1,521.9 847.7,519.0 848.8,523.4 855.9,526.2Z"/>
<path class="g20" d="M855.9,526.2 848.8,523.4 850.0,527.8 856.8,530.5Z"/>
<path class="w" d="M869.8,523.7 846.5,514.6 850.0,527.8 870.6,536.0Z"/>
<path class="g69" d="M906.0,414.4 910.0,417.5 910.7,417.3Z"/>
<path class="g73" d="M910.7,417.3 910.0,417.5 913.9,420.6 915.3,420.3Z"/>
<path class="g76" d="M915.3,420.3 913.9,420.6 917.9,423.7 919.9,423.2Z"/>
<path class="g69" d="M906.0,414.4 909.3,417.6 910.0,417.5Z"/>
<path class="g73" d="M910.0,417.5 909.3,417.6 912.6,420.9 913.9,420.6Z"/>
<path class="g76" d="M913.9,420.6 912.6,420.9 915.9,424.1 917.9,423.7Z"/>
<path class="g70" d="M906.0,414.4 908.6,417.8 909.3,417.6Z"/>
<path class="g73" d="M909.3,417.6 908.6,417.8 911.2,421.1 912.6,420.9Z"/>
<path class="g77" d="M912.6,420.9 911.2,421.1 913.8,424.5 915.9,424.1Z"/>
<path class="w" d="M906.0,414.4 913.8,424.5 919.9,423.2Z"/>
<path class="g69" d="M962.5,462.2 958.2,464.9 959.7,470.9 964.1,468.0Z"/>
<path class="g67" d="M964.1,468.0 959.7,470.9 961.1,476.8 965.6,473.9Z"/>
<path class="g64" d="M965.6,473.9 961.1,476.8 962.5,482.8 967.2,479.7Z"/>
<path class="g74" d="M958.2,464.9 954.0,467.6 955.2,473.7 959.7,470.9Z"/>
<path class="g71" d="M959.7,470.9 955.2,473.7 956.5,479.8 961.1,476.8Z"/>
<path class="g68" d="M961.1,476.8 956.5,479.8 957.7,485.9 962.5,482.8Z"/>
<path class="g78" d="M954.0,467.6 949.6,470.4 950.7,476.6 955.2,473.7Z"/>
<path class="g75" d="M955.2,473.7 950.7,476.6 951.8,482.8 956.5,479.8Z"/>
<path class="g72" d="M956.5,479.8 951.8,482.8 952.9,489.1 957.7,485.9Z"/>
<path class="w" d="M962.5,462.2 949.6,470.4 952.9,489.1 967.2,479.7Z"/>
<path class="g69" d="M906.0,414.4 903.0,417.2 903.7,417.4Z"/>
<path class="g72" d="M903.7,417.4 903.0,417.2 899.9,420.0 901.3,420.5Z"/>
<path class="g74" d="M901.3,420.5 899.9,420.0 896.8,422.8 898.9,423.5Z"/>
<path class="g69" d="M906.0,414.4 902.3,417.0 903.0,417.2Z"/>
<path class="g71" d="M903.0,417.2 902.3,417.0 898.5,419.5 899.9,420.0Z"/>
<path class="g73" d="M899.9,420.0 898.5,419.5 894.7,422.1 896.8,422.8Z"/>
<path class="g69" d="M906.0,414.4 901.6,416.7 902.3,417.0Z"/>
<path class="g71" d="M902.3,417.0 901.6,416.7 897.0,419.0 898.5,419.5Z"/>
<path class="g72" d="M898.5,419.5 897.0,419.0 892.5,421.3 894.7,422.1Z"/>
<path class="w" d="M906.0,414.4 892.5,421.3 898.9,423.5Z"/>
<path class="g75" d="M923.9,420.9 922.6,421.7 927.5,425.5 929.3,424.5Z"/>
<path class="g76" d="M929.3,424.5 927.5,425.5 932.5,429.3 934.6,428.1Z"/>
<path class="g77" d="M934.6,428.1 932.5,429.3 937.5,433.1 940.0,431.6Z"/>
<path class="g76" d="M922.6,421.7 921.3,422.5 925.8,426.5 927.5,425.5Z"/>
<path class="g78" d="M927.5,425.5 925.8,426.5 930.4,430.6 932.5,429.3Z"/>
<path class="g79" d="M932.5,429.3 930.4,430.6 935.0,434.6 937.5,433.1Z"/>
<path class="g78" d="M921.3,422.5 919.9,423.2 924.1,427.5 925.8,426.5Z"/>
<path class="g80" d="M925.8,426.5 924.1,427.5 928.3,431.8 930.4,430.6Z"/>
<path class="g81" d="M930.4,430.6 928.3,431.8 932.5,436.2 935.0,434.6Z"/>
<path class="w" d="M923.9,420.9 919.9,423.2 932.5,436.2 940.0,431.6Z"/>
<path class="g70" d="M906.0,414.4 907.8,417.8 908.6,417.8Z"/>
<path class="g73" d="M908.6,417.8 907.8,417.8 909.6,421.2 911.2,421.1Z"/>
<path class="g77" d="M911.2,421.1 909.6,421.2 911.3,424.6 913.8,424.5Z"/>
<path class="g70" d="M906.0,414.4 907.0,417.8 907.8,417.8Z"/>
<path class="g73" d="M907.8,417.8 907.0,417.8 907.9,421.2 909.6,421.2Z"/>
<path class="g77" d="M909.6,421.2 907.9,421.2 908.9,424.6 911.3,424.6Z"/>
<path class="g70" d="M906.0,414.4 906.2,417.8 907.0,417.8Z"/>
<path class="g73" d="M907.0,417.8 906.2,417.8 906.3,421.2 907.9,421.2Z"/>
<path class="g77" d="M907.9,421.2 906.3,421.2 906.4,424.6 908.9,424.6Z"/>
<path class="w" d="M906.0,414.4 906.4,424.6 913.8,424.5Z"/>
<path class="g69" d="M906.0,414.4 905.3,417.7 906.2,417.8Z"/>
<path class="g73" d="M906.2,417.8 905.3,417.7 904.6,421.0 906.3,421.2Z"/>
<path class="g77" d="M906.3,421.2 904.6,421.0 903.9,424.2 906.4,424.6Z"/>
<path class="g69" d="M906.0,414.4 904.5,417.6 905.3,417.7Z"/>
<path class="g73" d="M905.3,417.7 904.5,417.6 903.0,420.7 904.6,421.0Z"/>
<path class="g76" d="M904.6,421.0 903.0,420.7 901.4,423.9 903.9,424.2Z"/>
<path class="g69" d="M906.0,414.4 903.7,417.4 904.5,417.6Z"/>
<path class="g72" d="M904.5,417.6 903.7,417.4 901.3,420.5 903.0,420.7Z"/>
<path class="g75" d="M903.0,420.7 901.3,420.5 898.9,423.5 901.4,423.9Z"/>
<path class="w" d="M906.0,414.4 898.9,423.5 906.4,424.6Z"/>
<path class="g50" d="M850.2,481.3 845.0,477.4 843.8,483.2 849.0,487.1Z"/>
<path class="g46" d="M849.0,487.1 843.8,483.2 842.5,488.9 847.8,492.9Z"/>
<path class="g42" d="M847.8,492.9 842.5,488.9 841.3,494.7 846.6,498.7Z"/>
<path class="g44" d="M845.0,477.4 839.9,473.6 838.6,479.3 843.8,483.2Z"/>
<path class="g40" d="M843.8,483.2 838.6,479.3 837.3,485.0 842.5,488.9Z"/>
<path class="g36" d="M842.5,488.9 837.3,485.0 836.0,490.7 841.3,494.7Z"/>
<path class="g38" d="M839.9,473.6 834.8,469.8 833.5,475.5 838.6,479.3Z"/>
<path class="g34" d="M838.6,479.3 833.5,475.5 832.1,481.1 837.3,485.0Z"/>
<path class="g30" d="M837.3,485.0 832.1,481.1 830.8,486.7 836.0,490.7Z"/>
<path class="w" d="M850.2,481.3 834.8,469.8 830.8,486.7 846.6,498.7Z"/>
<path class="g49" d="M925.1,528.1 915.9,528.3 914.4,532.2 923.3,532.1Z"/>
<path class="g44" d="M923.3,532.1 914.4,532.2 913.0,536.2 921.5,536.1Z"/>
<path class="g38" d="M921.5,536.1 913.0,536.2 911.6,540.1 919.7,540.0Z"/>
<path class="g49" d="M915.9,528.3 906.7,528.4 905.6,532.4 914.4,532.2Z"/>
<path class="g44" d="M914.4,532.2 905.6,532.4 904.5,536.3 913.0,536.2Z"/>
<path class="g38" d="M913.0,536.2 904.5,536.3 903.4,540.2 911.6,540.1Z"/>
<path class="g48" d="M906.7,528.4 897.5,528.5 896.8,532.5 905.6,532.4Z"/>
<path class="g43" d="M905.6,532.4 896.8,532.5 896.0,536.4 904.5,536.3Z"/>
<path class="g38" d="M904.5,536.3 896.0,536.4 895.3,540.3 903.4,540.2Z"/>
<path class="w" d="M925.1,528.1 897.5,528.5 895.3,540.3 919.7,540.0Z"/>
<path class="g75" d="M953.2,445.7 949.7,447.9 952.6,453.6 956.3,451.2Z"/>
<path class="g74" d="M956.3,451.2 952.6,453.6 955.4,459.2 959.4,456.7Z"/>
<path class="g72" d="M959.4,456.7 955.4,459.2 958.2,464.9 962.5,462.2Z"/>
<path class="g79" d="M949.7,447.9 946.2,450.1 948.8,455.9 952.6,453.6Z"/>
<path class="g78" d="M952.6,453.6 948.8,455.9 951.4,461.8 955.4,459.2Z"/>
<path class="g76" d="M955.4,459.2 951.4,461.8 954.0,467.6 958.2,464.9Z"/>
<path class="g83" d="M946.2,450.1 942.6,452.3 945.0,458.3 948.8,455.9Z"/>
<path class="g82" d="M948.8,455.9 945.0,458.3 947.3,464.3 951.4,461.8Z"/>
<path class="g80" d="M951.4,461.8 947.3,464.3 949.6,470.4 954.0,467.6Z"/>
<path class="w" d="M953.2,445.7 942.6,452.3 949.6,470.4 962.5,462.2Z"/>
<path class="g77" d="M940.0,431.6 937.5,433.1 941.6,438.0 944.4,436.3Z"/>
<path class="g77" d="M944.4,436.3 941.6,438.0 945.6,443.0 948.8,441.0Z"/>
<path class="g76" d="M948.8,441.0 945.6,443.0 949.7,447.9 953.2,445.7Z"/>
<path class="g80" d="M937.5,433.1 935.0,434.6 938.7,439.8 941.6,438.0Z"/>
<path class="g80" d="M941.6,438.0 938.7,439.8 942.5,444.9 945.6,443.0Z"/>
<path class="g80" d="M945.6,443.0 942.5,444.9 946.2,450.1 949.7,447.9Z"/>
<path class="g83" d="M935.0,434.6 932.5,436.2 935.9,441.5 938.7,439.8Z"/>
<path class="g83" d="M938.7,439.8 935.9,441.5 939.2,446.9 942.5,444.9Z"/>
<path class="g83" d="M942.5,444.9 939.2,446.9 942.6,452.3 946.2,450.1Z"/>
<path class="w" d="M940.0,431.6 932.5,436.2 942.6,452.3 953.2,445.7Z"/>
<path class="g59" d="M952.3,506.9 944.4,508.8 943.0,514.0 950.8,512.2Z"/>
<path class="g55" d="M950.8,512.2 943.0,514.0 941.6,519.2 949.3,517.4Z"/>
<path class="g50" d="M949.3,517.4 941.6,519.2 940.3,524.4 947.8,522.6Z"/>
<path class="g62" d="M944.4,508.8 936.5,510.7 935.2,515.9 943.0,514.0Z"/>
<path class="g57" d="M943.0,514.0 935.2,515.9 934.0,521.1 941.6,519.2Z"/>
<path class="g52" d="M941.6,519.2 934.0,521.1 932.7,526.3 940.3,524.4Z"/>
<path class="g63" d="M936.5,510.7 928.6,512.6 927.4,517.8 935.2,515.9Z"/>
<path class="g59" d="M935.2,515.9 927.4,517.8 926.2,523.0 934.0,521.1Z"/>
<path class="g54" d="M934.0,521.1 926.2,523.0 925.1,528.1 932.7,526.3Z"/>
<path class="w" d="M952.3,506.9 928.6,512.6 925.1,528.1 947.8,522.6Z"/>
<path class="g72" d="M892.5,421.3 891.1,420.4 886.2,423.7 888.1,425.0Z"/>
<path class="g72" d="M888.1,425.0 886.2,423.7 881.3,427.1 883.7,428.7Z"/>
<path class="g72" d="M883.7,428.7 881.3,427.1 876.5,430.5 879.2,432.4Z"/>
<path class="g70" d="M891.1,420.4 889.6,419.4 884.3,422.5 886.2,423.7Z"/>
<path class="g70" d="M886.2,423.7 884.3,422.5 879.0,425.6 881.3,427.1Z"/>
<path class="g69" d="M881.3,427.1 879.0,425.6 873.7,428.6 876.5,430.5Z"/>
<path class="g68" d="M889.6,419.4 888.2,418.5 882.4,421.2 884.3,422.5Z"/>
<path class="g67" d="M884.3,422.5 882.4,421.2 876.7,424.0 879.0,425.6Z"/>
<path class="g66" d="M879.0,425.6 876.7,424.0 870.9,426.8 873.7,428.6Z"/>
<path class="w" d="M892.5,421.3 888.2,418.5 870.9,426.8 879.2,432.4Z"/>
<path class="g47" d="M897.5,528.5 888.2,526.9 887.8,530.9 896.8,532.5Z"/>
<path class="g41" d="M896.8,532.5 887.8,530.9 887.4,534.9 896.0,536.4Z"/>
<path class="g36" d="M896.0,536.4 887.4,534.9 887.0,538.9 895.3,540.3Z"/>
<path class="g44" d="M888.2,526.9 879.0,525.3 878.9,529.4 887.8,530.9Z"/>
<path class="g39" d="M887.8,530.9 878.9,529.4 878.9,533.4 887.4,534.9Z"/>
<path class="g34" d="M887.4,534.9 878.9,533.4 878.8,537.4 887.0,538.9Z"/>
<path class="g42" d="M879.0,525.3 869.8,523.7 870.1,527.8 878.9,529.4Z"/>
<path class="g36" d="M878.9,529.4 870.1,527.8 870.4,531.9 878.9,533.4Z"/>
<path class="g31" d="M878.9,533.4 870.4,531.9 870.6,536.0 878.8,537.4Z"/>
<path class="w" d="M897.5,528.5 869.8,523.7 870.6,536.0 895.3,540.3Z"/>
<path class="g79" d="M919.9,423.2 917.9,423.7 921.4,428.1 924.1,427.5Z"/>
<path class="g81" d="M924.1,427.5 921.4,428.1 925.0,432.5 928.3,431.8Z"/>
<path class="g83" d="M928.3,431.8 925.0,432.5 928.5,437.0 932.5,436.2Z"/>
<path class="g79" d="M917.9,423.7 915.9,424.1 918.7,428.7 921.4,428.1Z"/>
<path class="g83" d="M921.4,428.1 918.7,428.7 921.6,433.3 925.0,432.5Z"/>
<path class="g85" d="M925.0,432.5 921.6,433.3 924.5,437.9 928.5,437.0Z"/>
<path class="g80" d="M915.9,424.1 913.8,424.5 916.0,429.2 918.7,428.7Z"/>
<path class="g84" d="M918.7,428.7 916.0,429.2 918.3,434.0 921.6,433.3Z"/>
<path class="g87" d="M921.6,433.3 918.3,434.0 920.6,438.7 924.5,437.9Z"/>
<path class="w" d="M919.9,423.2 913.8,424.5 920.6,438.7 932.5,436.2Z"/>
<path class="g60" d="M857.2,463.5 852.6,460.2 850.0,465.9 854.9,469.5Z"/>
<path class="g57" d="M854.9,469.5 850.0,465.9 847.5,471.7 852.6,475.4Z"/>
<path class="g53" d="M852.6,475.4 847.5,471.7 845.0,477.4 850.2,481.3Z"/>
<path class="g55" d="M852.6,460.2 847.9,456.8 845.2,462.4 850.0,465.9Z"/>
<path class="g52" d="M850.0,465.9 845.2,462.4 842.6,468.0 847.5,471.7Z"/>
<path class="g48" d="M847.5,471.7 842.6,468.0 839.9,473.6 845.0,477.4Z"/>
<path class="g49" d="M847.9,456.8 843.3,453.5 840.5,458.9 845.2,462.4Z"/>
<path class="g46" d="M845.2,462.4 840.5,458.9 837.7,464.4 842.6,468.0Z"/>
<path class="g42" d="M842.6,468.0 837.7,464.4 834.8,469.8 839.9,473.6Z"/>
<path class="w" d="M857.2,463.5 843.3,453.5 834.8,469.8 850.2,481.3Z"/>
<path class="g72" d="M879.2,432.4 876.5,430.5 872.1,435.0 875.2,437.2Z"/>
<path class="g71" d="M875.2,437.2 872.1,435.0 867.7,439.6 871.2,442.0Z"/>
<path class="g70" d="M871.2,442.0 867.7,439.6 863.3,444.1 867.2,446.8Z"/>
<path class="g68" d="M876.5,430.5 873.7,428.6 868.9,432.9 872.1,435.0Z"/>
<path class="g67" d="M872.1,435.0 868.9,432.9 864.2,437.2 867.7,439.6Z"/>
<path class="g65" d="M867.7,439.6 864.2,437.2 859.4,441.4 863.3,444.1Z"/>
<path class="g65" d="M873.7,428.6 870.9,426.8 865.8,430.8 868.9,432.9Z"/>
<path class="g63" d="M868.9,432.9 865.8,430.8 860.7,434.8 864.2,437.2Z"/>
<path class="g61" d="M864.2,437.2 860.7,434.8 855.6,438.7 859.4,441.4Z"/>
<path class="w" d="M879.2,432.4 870.9,426.8 855.6,438.7 867.2,446.8Z"/>
<path class="g52" d="M870.8,508.1 862.7,504.9 862.4,510.2 870.5,513.3Z"/>
<path class="g48" d="M870.5,513.3 862.4,510.2 862.2,515.4 870.1,518.5Z"/>
<path class="g43" d="M870.1,518.5 862.2,515.4 862.0,520.6 869.8,523.7Z"/>
<path class="g48" d="M862.7,504.9 854.6,501.8 854.5,507.1 862.4,510.2Z"/>
<path class="g43" d="M862.4,510.2 854.5,507.1 854.3,512.4 862.2,515.4Z"/>
<path class="g38" d="M862.2,515.4 854.3,512.4 854.2,517.6 862.0,520.6Z"/>
<path class="g43" d="M854.6,501.8 846.6,498.7 846.6,504.0 854.5,507.1Z"/>
<path class="g38" d="M854.5,507.1 846.6,504.0 846.5,509.3 854.3,512.4Z"/>
<path class="g34" d="M854.3,512.4 846.5,509.3 846.5,514.6 854.2,517.6Z"/>
<path class="w" d="M870.8,508.1 846.6,498.7 846.5,514.6 869.8,523.7Z"/>
<path class="g77" d="M898.9,423.5 896.8,422.8 893.7,426.9 896.5,427.9Z"/>
<path class="g79" d="M896.5,427.9 893.7,426.9 890.6,431.1 894.1,432.3Z"/>
<path class="g81" d="M894.1,432.3 890.6,431.1 887.5,435.2 891.6,436.7Z"/>
<path class="g75" d="M896.8,422.8 894.7,422.1 890.9,426.0 893.7,426.9Z"/>
<path class="g77" d="M893.7,426.9 890.9,426.0 887.1,429.9 890.6,431.1Z"/>
<path class="g78" d="M890.6,431.1 887.1,429.9 883.3,433.8 887.5,435.2Z"/>
<path class="g73" d="M894.7,422.1 892.5,421.3 888.1,425.0 890.9,426.0Z"/>
<path class="g74" d="M890.9,426.0 888.1,425.0 883.7,428.7 887.1,429.9Z"/>
<path class="g75" d="M887.1,429.9 883.7,428.7 879.2,432.4 883.3,433.8Z"/>
<path class="w" d="M898.9,423.5 892.5,421.3 879.2,432.4 891.6,436.7Z"/>
<path class="g68" d="M867.2,446.8 863.3,444.1 859.7,449.5 863.9,452.4Z"/>
<path class="g66" d="M863.9,452.4 859.7,449.5 856.1,454.8 860.5,458.0Z"/>
<path class="g63" d="M860.5,458.0 856.1,454.8 852.6,460.2 857.2,463.5Z"/>
<path class="g63" d="M863.3,444.1 859.4,441.4 855.6,446.6 859.7,449.5Z"/>
<path class="g61" d="M859.7,449.5 855.6,446.6 851.7,451.7 856.1,454.8Z"/>
<path class="g58" d="M856.1,454.8 851.7,451.7 847.9,456.8 852.6,460.2Z"/>
<path class="g58" d="M859.4,441.4 855.6,438.7 851.5,443.7 855.6,446.6Z"/>
<path class="g56" d="M855.6,446.6 851.5,443.7 847.4,448.6 851.7,451.7Z"/>
<path class="g53" d="M851.7,451.7 847.4,448.6 843.3,453.5 847.9,456.8Z"/>
<path class="w" d="M867.2,446.8 855.6,438.7 843.3,453.5 857.2,463.5Z"/>
<path class="g81" d="M913.8,424.5 911.3,424.6 912.8,429.3 916.0,429.2Z"/>
<path class="g84" d="M916.0,429.2 912.8,429.3 914.3,434.0 918.3,434.0Z"/>
<path class="g88" d="M918.3,434.0 914.3,434.0 915.8,438.8 920.6,438.7Z"/>
<path class="g81" d="M911.3,424.6 908.9,424.6 909.6,429.3 912.8,429.3Z"/>
<path class="g85" d="M912.8,429.3 909.6,429.3 910.3,434.1 914.3,434.0Z"/>
<path class="g89" d="M914.3,434.0 910.3,434.1 911.0,438.8 915.8,438.8Z"/>
<path class="g81" d="M908.9,424.6 906.4,424.6 906.3,429.4 909.6,429.3Z"/>
<path class="g84" d="M909.6,429.3 906.3,429.4 906.2,434.1 910.3,434.1Z"/>
<path class="g89" d="M910.3,434.1 906.2,434.1 906.2,438.9 911.0,438.8Z"/>
<path class="w" d="M913.8,424.5 906.4,424.6 906.2,438.9 920.6,438.7Z"/>
<path class="g72" d="M952.9,489.1 945.3,490.8 945.0,496.8 952.7,495.0Z"/>
<path class="g68" d="M952.7,495.0 945.0,496.8 944.7,502.8 952.5,501.0Z"/>
<path class="g64" d="M952.5,501.0 944.7,502.8 944.4,508.8 952.3,506.9Z"/>
<path class="g75" d="M945.3,490.8 937.6,492.6 937.3,498.7 945.0,496.8Z"/>
<path class="g71" d="M945.0,496.8 937.3,498.7 936.9,504.7 944.7,502.8Z"/>
<path class="g66" d="M944.7,502.8 936.9,504.7 936.5,510.7 944.4,508.8Z"/>
<path class="g78" d="M937.6,492.6 929.9,494.4 929.5,500.5 937.3,498.7Z"/>
<path class="g73" d="M937.3,498.7 929.5,500.5 929.0,506.5 936.9,504.7Z"/>
<path class="g68" d="M936.9,504.7 929.0,506.5 928.6,512.6 936.5,510.7Z"/>
<path class="w" d="M952.9,489.1 929.9,494.4 928.6,512.6 952.3,506.9Z"/>
<path class="g80" d="M906.4,424.6 903.9,424.2 903.0,428.9 906.3,429.4Z"/>
<path class="g84" d="M906.3,429.4 903.0,428.9 902.2,433.5 906.2,434.1Z"/>
<path class="g88" d="M906.2,434.1 902.2,433.5 901.3,438.2 906.2,438.9Z"/>
<path class="g79" d="M903.9,424.2 901.4,423.9 899.8,428.4 903.0,428.9Z"/>
<path class="g82" d="M903.0,428.9 899.8,428.4 898.1,432.9 902.2,433.5Z"/>
<path class="g86" d="M902.2,433.5 898.1,432.9 896.4,437.4 901.3,438.2Z"/>
<path class="g78" d="M901.4,423.9 898.9,423.5 896.5,427.9 899.8,428.4Z"/>
<path class="g81" d="M899.8,428.4 896.5,427.9 894.1,432.3 898.1,432.9Z"/>
<path class="g84" d="M898.1,432.9 894.1,432.3 891.6,436.7 896.4,437.4Z"/>
<path class="w" d="M906.4,424.6 898.9,423.5 891.6,436.7 906.2,438.9Z"/>
<path class="g85" d="M932.5,436.2 928.5,437.0 931.3,442.5 935.9,441.5Z"/>
<path class="g87" d="M935.9,441.5 931.3,442.5 934.2,448.0 939.2,446.9Z"/>
<path class="g87" d="M939.2,446.9 934.2,448.0 937.0,453.5 942.6,452.3Z"/>
<path class="g88" d="M928.5,437.0 924.5,437.9 926.8,443.5 931.3,442.5Z"/>
<path class="g90" d="M931.3,442.5 926.8,443.5 929.1,449.1 934.2,448.0Z"/>
<path class="g91" d="M934.2,448.0 929.1,449.1 931.4,454.8 937.0,453.5Z"/>
<path class="g90" d="M924.5,437.9 920.6,438.7 922.3,444.5 926.8,443.5Z"/>
<path class="g93" d="M926.8,443.5 922.3,444.5 924.0,450.2 929.1,449.1Z"/>
<path class="g95" d="M929.1,449.1 924.0,450.2 925.8,456.0 931.4,454.8Z"/>
<path class="w" d="M932.5,436.2 920.6,438.7 925.8,456.0 942.6,452.3Z"/>
<path class="g65" d="M928.6,512.6 919.0,512.7 918.0,517.9 927.4,517.8Z"/>
<path class="g59" d="M927.4,517.8 918.0,517.9 916.9,523.1 926.2,523.0Z"/>
<path class="g54" d="M926.2,523.0 916.9,523.1 915.9,528.3 925.1,528.1Z"/>
<path class="g65" d="M919.0,512.7 909.4,512.8 908.5,518.0 918.0,517.9Z"/>
<path class="g59" d="M918.0,517.9 908.5,518.0 907.6,523.2 916.9,523.1Z"/>
<path class="g54" d="M916.9,523.1 907.6,523.2 906.7,528.4 915.9,528.3Z"/>
<path class="g64" d="M909.4,512.8 899.8,513.0 899.0,518.2 908.5,518.0Z"/>
<path class="g59" d="M908.5,518.0 899.0,518.2 898.3,523.4 907.6,523.2Z"/>
<path class="g54" d="M907.6,523.2 898.3,523.4 897.5,528.5 906.7,528.4Z"/>
<path class="w" d="M928.6,512.6 899.8,513.0 897.5,528.5 925.1,528.1Z"/>
<path class="g82" d="M949.6,470.4 942.8,471.9 943.6,478.2 950.7,476.6Z"/>
<path class="g79" d="M950.7,476.6 943.6,478.2 944.5,484.5 951.8,482.8Z"/>
<path class="g75" d="M951.8,482.8 944.5,484.5 945.3,490.8 952.9,489.1Z"/>
<path class="g86" d="M942.8,471.9 935.9,473.5 936.5,479.9 943.6,478.2Z"/>
<path class="g83" d="M943.6,478.2 936.5,479.9 937.0,486.3 944.5,484.5Z"/>
<path class="g79" d="M944.5,484.5 937.0,486.3 937.6,492.6 945.3,490.8Z"/>
<path class="g91" d="M935.9,473.5 929.0,475.1 929.3,481.5 936.5,479.9Z"/>
<path class="g87" d="M936.5,479.9 929.3,481.5 929.6,488.0 937.0,486.3Z"/>
<path class="g83" d="M937.0,486.3 929.6,488.0 929.9,494.4 937.6,492.6Z"/>
<path class="w" d="M949.6,470.4 929.0,475.1 929.9,494.4 952.9,489.1Z"/>
<path class="g62" d="M899.8,513.0 890.1,511.3 889.5,516.5 899.0,518.2Z"/>
<path class="g57" d="M899.0,518.2 889.5,516.5 888.8,521.7 898.3,523.4Z"/>
<path class="g52" d="M898.3,523.4 888.8,521.7 888.2,526.9 897.5,528.5Z"/>
<path class="g59" d="M890.1,511.3 880.5,509.7 880.0,514.9 889.5,516.5Z"/>
<path class="g54" d="M889.5,516.5 880.0,514.9 879.5,520.1 888.8,521.7Z"/>
<path class="g49" d="M888.8,521.7 879.5,520.1 879.0,525.3 888.2,526.9Z"/>
<path class="g56" d="M880.5,509.7 870.8,508.1 870.5,513.3 880.0,514.9Z"/>
<path class="g51" d="M880.0,514.9 870.5,513.3 870.1,518.5 879.5,520.1Z"/>
<path class="g46" d="M879.5,520.1 870.1,518.5 869.8,523.7 879.0,525.3Z"/>
<path class="w" d="M899.8,513.0 870.8,508.1 869.8,523.7 897.5,528.5Z"/>
<path class="g87" d="M942.6,452.3 937.0,453.5 938.9,459.6 945.0,458.3Z"/>
<path class="g86" d="M945.0,458.3 938.9,459.6 940.9,465.8 947.3,464.3Z"/>
<path class="g84" d="M947.3,464.3 940.9,465.8 942.8,471.9 949.6,470.4Z"/>
<path class="g91" d="M937.0,453.5 931.4,454.8 932.9,461.0 938.9,459.6Z"/>
<path class="g91" d="M938.9,459.6 932.9,461.0 934.4,467.2 940.9,465.8Z"/>
<path class="g89" d="M940.9,465.8 934.4,467.2 935.9,473.5 942.8,471.9Z"/>
<path class="g97" d="M931.4,454.8 925.8,456.0 926.8,462.4 932.9,461.0Z"/>
<path class="g96" d="M932.9,461.0 926.8,462.4 927.9,468.7 934.4,467.2Z"/>
<path class="g94" d="M934.4,467.2 927.9,468.7 929.0,475.1 935.9,473.5Z"/>
<path class="w" d="M942.6,452.3 925.8,456.0 929.0,475.1 949.6,470.4Z"/>
<path class="g66" d="M873.8,490.1 865.9,487.2 864.8,493.1 872.8,496.1Z"/>
<path class="g61" d="M872.8,496.1 864.8,493.1 863.8,499.0 871.8,502.1Z"/>
<path class="g57" d="M871.8,502.1 863.8,499.0 862.7,504.9 870.8,508.1Z"/>
<path class="g60" d="M865.9,487.2 858.0,484.2 856.9,490.1 864.8,493.1Z"/>
<path class="g56" d="M864.8,493.1 856.9,490.1 855.7,496.0 863.8,499.0Z"/>
<path class="g52" d="M863.8,499.0 855.7,496.0 854.6,501.8 862.7,504.9Z"/>
<path class="g55" d="M858.0,484.2 850.2,481.3 849.0,487.1 856.9,490.1Z"/>
<path class="g51" d="M856.9,490.1 849.0,487.1 847.8,492.9 855.7,496.0Z"/>
<path class="g47" d="M855.7,496.0 847.8,492.9 846.6,498.7 854.6,501.8Z"/>
<path class="w" d="M873.8,490.1 850.2,481.3 846.6,498.7 870.8,508.1Z"/>
<path class="g83" d="M891.6,436.7 887.5,435.2 884.6,440.5 889.3,442.1Z"/>
<path class="g84" d="M889.3,442.1 884.6,440.5 881.7,445.7 887.0,447.6Z"/>
<path class="g85" d="M887.0,447.6 881.7,445.7 878.8,450.9 884.6,453.0Z"/>
<path class="g79" d="M887.5,435.2 883.3,433.8 879.9,438.8 884.6,440.5Z"/>
<path class="g79" d="M884.6,440.5 879.9,438.8 876.4,443.8 881.7,445.7Z"/>
<path class="g79" d="M881.7,445.7 876.4,443.8 872.9,448.9 878.8,450.9Z"/>
<path class="g75" d="M883.3,433.8 879.2,432.4 875.2,437.2 879.9,438.8Z"/>
<path class="g75" d="M879.9,438.8 875.2,437.2 871.2,442.0 876.4,443.8Z"/>
<path class="g74" d="M876.4,443.8 871.2,442.0 867.2,446.8 872.9,448.9Z"/>
<path class="w" d="M891.6,436.7 879.2,432.4 867.2,446.8 884.6,453.0Z"/>
<path class="g92" d="M920.6,438.7 915.8,438.8 916.8,444.5 922.3,444.5Z"/>
<path class="g96" d="M922.3,444.5 916.8,444.5 917.9,450.3 924.0,450.2Z"/>
<path class="g100" d="M924.0,450.2 917.9,450.3 918.9,456.1 925.8,456.0Z"/>
<path class="g93" d="M915.8,438.8 911.0,438.8 911.3,444.6 916.8,444.5Z"/>
<path class="g98" d="M916.8,444.5 911.3,444.6 911.7,450.4 917.9,450.3Z"/>
<path class="g105" d="M917.9,450.3 911.7,450.4 912.1,456.2 918.9,456.1Z"/>
<path class="g93" d="M911.0,438.8 906.2,438.9 905.9,444.7 911.3,444.6Z"/>
<path class="g98" d="M911.3,444.6 905.9,444.7 905.6,450.5 911.7,450.4Z"/>
<path class="g108" d="M911.7,450.4 905.6,450.5 905.3,456.3 912.1,456.2Z"/>
<path class="w" d="M920.6,438.7 906.2,438.9 905.3,456.3 925.8,456.0Z"/>
<path class="g78" d="M878.5,471.3 871.4,468.7 869.6,474.9 877.0,477.6Z"/>
<path class="g74" d="M877.0,477.6 869.6,474.9 867.7,481.0 875.4,483.9Z"/>
<path class="g70" d="M875.4,483.9 867.7,481.0 865.9,487.2 873.8,490.1Z"/>
<path class="g71" d="M871.4,468.7 864.3,466.1 862.2,472.2 869.6,474.9Z"/>
<path class="g68" d="M869.6,474.9 862.2,472.2 860.1,478.2 867.7,481.0Z"/>
<path class="g64" d="M867.7,481.0 860.1,478.2 858.0,484.2 865.9,487.2Z"/>
<path class="g65" d="M864.3,466.1 857.2,463.5 854.9,469.5 862.2,472.2Z"/>
<path class="g62" d="M862.2,472.2 854.9,469.5 852.6,475.4 860.1,478.2Z"/>
<path class="g59" d="M860.1,478.2 852.6,475.4 850.2,481.3 858.0,484.2Z"/>
<path class="w" d="M878.5,471.3 857.2,463.5 850.2,481.3 873.8,490.1Z"/>
<path class="g84" d="M884.6,453.0 878.8,450.9 876.3,456.9 882.6,459.1Z"/>
<path class="g83" d="M882.6,459.1 876.3,456.9 873.9,462.8 880.6,465.2Z"/>
<path class="g81" d="M880.6,465.2 873.9,462.8 871.4,468.7 878.5,471.3Z"/>
<path class="g78" d="M878.8,450.9 872.9,448.9 870.1,454.6 876.3,456.9Z"/>
<path class="g77" d="M876.3,456.9 870.1,454.6 867.2,460.4 873.9,462.8Z"/>
<path class="g74" d="M873.9,462.8 867.2,460.4 864.3,466.1 871.4,468.7Z"/>
<path class="g73" d="M872.9,448.9 867.2,446.8 863.9,452.4 870.1,454.6Z"/>
<path class="g71" d="M870.1,454.6 863.9,452.4 860.5,458.0 867.2,460.4Z"/>
<path class="g68" d="M867.2,460.4 860.5,458.0 857.2,463.5 864.3,466.1Z"/>
<path class="w" d="M884.6,453.0 867.2,446.8 857.2,463.5 878.5,471.3Z"/>
<path class="g92" d="M906.2,438.9 901.3,438.2 900.3,443.8 905.9,444.7Z"/>
<path class="g96" d="M905.9,444.7 900.3,443.8 899.4,449.5 905.6,450.5Z"/>
<path class="g103" d="M905.6,450.5 899.4,449.5 898.4,455.2 905.3,456.3Z"/>
<path class="g89" d="M901.3,438.2 896.4,437.4 894.8,443.0 900.3,443.8Z"/>
<path class="g92" d="M900.3,443.8 894.8,443.0 893.1,448.5 899.4,449.5Z"/>
<path class="g96" d="M899.4,449.5 893.1,448.5 891.5,454.1 898.4,455.2Z"/>
<path class="g86" d="M896.4,437.4 891.6,436.7 889.3,442.1 894.8,443.0Z"/>
<path class="g88" d="M894.8,443.0 889.3,442.1 887.0,447.6 893.1,448.5Z"/>
<path class="g90" d="M893.1,448.5 887.0,447.6 884.6,453.0 891.5,454.1Z"/>
<path class="w" d="M906.2,438.9 891.6,436.7 884.6,453.0 905.3,456.3Z"/>
<path class="g80" d="M929.9,494.4 920.6,494.6 920.1,500.6 929.5,500.5Z"/>
<path class="g75" d="M929.5,500.5 920.1,500.6 919.5,506.7 929.0,506.5Z"/>
<path class="g70" d="M929.0,506.5 919.5,506.7 919.0,512.7 928.6,512.6Z"/>
<path class="g82" d="M920.6,494.6 911.3,494.7 910.7,500.8 920.1,500.6Z"/>
<path class="g76" d="M920.1,500.6 910.7,500.8 910.0,506.8 919.5,506.7Z"/>
<path class="g70" d="M919.5,506.7 910.0,506.8 909.4,512.8 919.0,512.7Z"/>
<path class="g81" d="M911.3,494.7 902.0,494.8 901.3,500.9 910.7,500.8Z"/>
<path class="g75" d="M910.7,500.8 901.3,500.9 900.5,506.9 910.0,506.8Z"/>
<path class="g69" d="M910.0,506.8 900.5,506.9 899.8,513.0 909.4,512.8Z"/>
<path class="w" d="M929.9,494.4 902.0,494.8 899.8,513.0 928.6,512.6Z"/>
<path class="g79" d="M902.0,494.8 892.6,493.2 891.7,499.3 901.3,500.9Z"/>
<path class="g73" d="M901.3,500.9 891.7,499.3 890.9,505.3 900.5,506.9Z"/>
<path class="g67" d="M900.5,506.9 890.9,505.3 890.1,511.3 899.8,513.0Z"/>
<path class="g75" d="M892.6,493.2 883.2,491.7 882.3,497.7 891.7,499.3Z"/>
<path class="g70" d="M891.7,499.3 882.3,497.7 881.4,503.7 890.9,505.3Z"/>
<path class="g65" d="M890.9,505.3 881.4,503.7 880.5,509.7 890.1,511.3Z"/>
<path class="g71" d="M883.2,491.7 873.8,490.1 872.8,496.1 882.3,497.7Z"/>
<path class="g66" d="M882.3,497.7 872.8,496.1 871.8,502.1 881.4,503.7Z"/>
<path class="g61" d="M881.4,503.7 871.8,502.1 870.8,508.1 880.5,509.7Z"/>
<path class="w" d="M902.0,494.8 873.8,490.1 870.8,508.1 899.8,513.0Z"/>
<path class="g104" d="M925.8,456.0 918.9,456.1 919.5,462.4 926.8,462.4Z"/>
<path class="g106" d="M926.8,462.4 919.5,462.4 920.0,468.8 927.9,468.7Z"/>
<path class="g103" d="M927.9,468.7 920.0,468.8 920.6,475.2 929.0,475.1Z"/>
<path class="g116" d="M918.9,456.1 912.1,456.2 912.1,462.5 919.5,462.4Z"/>
<path class="g123" d="M919.5,462.4 912.1,462.5 912.2,468.9 920.0,468.8Z"/>
<path class="g119" d="M920.0,468.8 912.2,468.9 912.2,475.3 920.6,475.2Z"/>
<path class="g122" d="M912.1,456.2 905.3,456.3 904.8,462.6 912.1,462.5Z"/>
<path class="g134" d="M912.1,462.5 904.8,462.6 904.3,469.0 912.2,468.9Z"/>
<path class="g128" d="M912.2,468.9 904.3,469.0 903.9,475.4 912.2,475.3Z"/>
<path class="w" d="M925.8,456.0 905.3,456.3 903.9,475.4 929.0,475.1Z"/>
<path class="g97" d="M929.0,475.1 920.6,475.2 920.6,481.6 929.3,481.5Z"/>
<path class="g91" d="M929.3,481.5 920.6,481.6 920.6,488.1 929.6,488.0Z"/>
<path class="g86" d="M929.6,488.0 920.6,488.1 920.6,494.6 929.9,494.4Z"/>
<path class="g107" d="M920.6,475.2 912.2,475.3 911.9,481.8 920.6,481.6Z"/>
<path class="g96" d="M920.6,481.6 911.9,481.8 911.6,488.2 920.6,488.1Z"/>
<path class="g88" d="M920.6,488.1 911.6,488.2 911.3,494.7 920.6,494.6Z"/>
<path class="g111" d="M912.2,475.3 903.9,475.4 903.2,481.9 911.9,481.8Z"/>
<path class="g97" d="M911.9,481.8 903.2,481.9 902.6,488.3 911.6,488.2Z"/>
<path class="g88" d="M911.6,488.2 902.6,488.3 902.0,494.8 911.3,494.7Z"/>
<path class="w" d="M929.0,475.1 903.9,475.4 902.0,494.8 929.9,494.4Z"/>
<path class="g114" d="M905.3,456.3 898.4,455.2 897.4,461.5 904.8,462.6Z"/>
<path class="g121" d="M904.8,462.6 897.4,461.5 896.4,467.7 904.3,469.0Z"/>
<path class="g116" d="M904.3,469.0 896.4,467.7 895.4,474.0 903.9,475.4Z"/>
<path class="g100" d="M898.4,455.2 891.5,454.1 890.0,460.3 897.4,461.5Z"/>
<path class="g102" d="M897.4,461.5 890.0,460.3 888.5,466.5 896.4,467.7Z"/>
<path class="g99" d="M896.4,467.7 888.5,466.5 887.0,472.7 895.4,474.0Z"/>
<path class="g91" d="M891.5,454.1 884.6,453.0 882.6,459.1 890.0,460.3Z"/>
<path class="g90" d="M890.0,460.3 882.6,459.1 880.6,465.2 888.5,466.5Z"/>
<path class="g88" d="M888.5,466.5 880.6,465.2 878.5,471.3 887.0,472.7Z"/>
<path class="w" d="M905.3,456.3 884.6,453.0 878.5,471.3 903.9,475.4Z"/>
<path class="g104" d="M903.9,475.4 895.4,474.0 894.4,480.4 903.2,481.9Z"/>
<path class="g93" d="M903.2,481.9 894.4,480.4 893.5,486.8 902.6,488.3Z"/>
<path class="g85" d="M902.6,488.3 893.5,486.8 892.6,493.2 902.0,494.8Z"/>
<path class="g93" d="M895.4,474.0 887.0,472.7 885.7,479.0 894.4,480.4Z"/>
<path class="g87" d="M894.4,480.4 885.7,479.0 884.4,485.4 893.5,486.8Z"/>
<path class="g81" d="M893.5,486.8 884.4,485.4 883.2,491.7 892.6,493.2Z"/>
<path class="g84" d="M887.0,472.7 878.5,471.3 877.0,477.6 885.7,479.0Z"/>
<path class="g80" d="M885.7,479.0 877.0,477.6 875.4,483.9 884.4,485.4Z"/>
<path class="g75" d="M884.4,485.4 875.4,483.9 873.8,490.1 883.2,491.7Z"/>
<path class="w" d="M903.9,475.4 878.5,471.3 873.8,490.1 902.0,494.8Z"/>
</g>
<g shape-rendering="crispEdges" stroke-width=".7">
<path class="g25" d="M672.5,539.1 678.4,549.1 679.2,530.7 673.2,520.9Z"/>
<path class="w" d="M672.5,539.1 678.4,549.1 679.2,530.7 673.2,520.9Z"/>
<path class="g25" d="M673.2,520.9 679.2,530.7 680.0,512.1 674.0,502.4Z"/>
<path class="w" d="M673.2,520.9 679.2,530.7 680.0,512.1 674.0,502.4Z"/>
<path class="g68" d="M757.1,437.0 764.2,446.0 784.3,443.9 776.9,435.0Z"/>
<path class="w" d="M757.1,437.0 764.2,446.0 784.3,443.9 776.9,435.0Z"/>
<path class="g25" d="M678.4,549.1 684.4,559.4 685.3,540.9 679.2,530.7Z"/>
<path class="w" d="M678.4,549.1 684.4,559.4 685.3,540.9 679.2,530.7Z"/>
<path class="g25" d="M674.0,502.4 680.0,512.1 680.8,493.2 674.8,483.6Z"/>
<path class="w" d="M674.0,502.4 680.0,512.1 680.8,493.2 674.8,483.6Z"/>
<path class="g68" d="M737.1,439.0 743.9,448.1 764.2,446.0 757.1,437.0Z"/>
<path class="w" d="M737.1,439.0 743.9,448.1 764.2,446.0 757.1,437.0Z"/>
<path class="g25" d="M679.2,530.7 685.3,540.9 686.2,522.1 680.0,512.1Z"/>
<path class="w" d="M679.2,530.7 685.3,540.9 686.2,522.1 680.0,512.1Z"/>
<path class="g68" d="M717.0,441.1 723.6,450.2 743.9,448.1 737.1,439.0Z"/>
<path class="w" d="M717.0,441.1 723.6,450.2 743.9,448.1 737.1,439.0Z"/>
<path class="g25" d="M674.8,483.6 680.8,493.2 681.7,473.9 675.6,464.6Z"/>
<path class="w" d="M674.8,483.6 680.8,493.2 681.7,473.9 675.6,464.6Z"/>
<path class="g68" d="M764.2,446.0 771.5,455.2 791.8,453.1 784.3,443.9Z"/>
<path class="w" d="M764.2,446.0 771.5,455.2 791.8,453.1 784.3,443.9Z"/>
<path class="g25" d="M684.4,559.4 690.6,569.9 691.5,551.2 685.3,540.9Z"/>
<path class="w" d="M684.4,559.4 690.6,569.9 691.5,551.2 685.3,540.9Z"/>
<path class="g68" d="M696.7,443.1 703.1,452.3 723.6,450.2 717.0,441.1Z"/>
<path class="w" d="M696.7,443.1 703.1,452.3 723.6,450.2 717.0,441.1Z"/>
<path class="g25" d="M680.0,512.1 686.2,522.1 687.0,503.0 680.8,493.2Z"/>
<path class="w" d="M680.0,512.1 686.2,522.1 687.0,503.0 680.8,493.2Z"/>
<path class="g25" d="M675.6,464.6 681.7,473.9 682.6,454.4 676.4,445.2Z"/>
<path class="w" d="M675.6,464.6 681.7,473.9 682.6,454.4 676.4,445.2Z"/>
<path class="g68" d="M743.9,448.1 751.0,457.4 771.5,455.2 764.2,446.0Z"/>
<path class="w" d="M743.9,448.1 751.0,457.4 771.5,455.2 764.2,446.0Z"/>
<path class="g68" d="M676.4,445.2 682.6,454.4 703.1,452.3 696.7,443.1Z"/>
<path class="w" d="M676.4,445.2 682.6,454.4 703.1,452.3 696.7,443.1Z"/>
<path class="g25" d="M685.3,540.9 691.5,551.2 692.5,532.3 686.2,522.1Z"/>
<path class="w" d="M685.3,540.9 691.5,551.2 692.5,532.3 686.2,522.1Z"/>
<path class="g68" d="M723.6,450.2 730.4,459.5 751.0,457.4 743.9,448.1Z"/>
<path class="w" d="M723.6,450.2 730.4,459.5 751.0,457.4 743.9,448.1Z"/>
<path class="g67" d="M785.8,581.6 806.1,579.1 807.9,560.3 787.5,562.8Z"/>
<path class="w" d="M785.8,581.6 806.1,579.1 807.9,560.3 787.5,562.8Z"/>
<path class="g25" d="M680.8,493.2 687.0,503.0 688.0,483.6 681.7,473.9Z"/>
<path class="w" d="M680.8,493.2 687.0,503.0 688.0,483.6 681.7,473.9Z"/>
<path class="g68" d="M771.5,455.2 778.9,464.7 799.5,462.5 791.8,453.1Z"/>
<path class="w" d="M771.5,455.2 778.9,464.7 799.5,462.5 791.8,453.1Z"/>
<path class="g25" d="M690.6,569.9 696.9,580.7 697.9,561.9 691.5,551.2Z"/>
<path class="w" d="M690.6,569.9 696.9,580.7 697.9,561.9 691.5,551.2Z"/>
<path class="g68" d="M703.1,452.3 709.7,461.7 730.4,459.5 723.6,450.2Z"/>
<path class="w" d="M703.1,452.3 709.7,461.7 730.4,459.5 723.6,450.2Z"/>
<path class="g67" d="M765.4,584.1 785.8,581.6 787.5,562.8 766.9,565.2Z"/>
<path class="w" d="M765.4,584.1 785.8,581.6 787.5,562.8 766.9,565.2Z"/>
<path class="g25" d="M686.2,522.1 692.5,532.3 693.4,513.0 687.0,503.0Z"/>
<path class="w" d="M686.2,522.1 692.5,532.3 693.4,513.0 687.0,503.0Z"/>
<path class="g25" d="M681.7,473.9 688.0,483.6 688.9,463.9 682.6,454.4Z"/>
<path class="w" d="M681.7,473.9 688.0,483.6 688.9,463.9 682.6,454.4Z"/>
<path class="g68" d="M751.0,457.4 758.2,466.9 778.9,464.7 771.5,455.2Z"/>
<path class="w" d="M751.0,457.4 758.2,466.9 778.9,464.7 771.5,455.2Z"/>
<path class="g67" d="M787.5,562.8 807.9,560.3 809.8,541.2 789.2,543.6Z"/>
<path class="w" d="M787.5,562.8 807.9,560.3 809.8,541.2 789.2,543.6Z"/>
<path class="g68" d="M682.6,454.4 688.9,463.9 709.7,461.7 703.1,452.3Z"/>
<path class="w" d="M682.6,454.4 688.9,463.9 709.7,461.7 703.1,452.3Z"/>
<path class="g67" d="M744.9,586.6 765.4,584.1 766.9,565.2 746.2,567.7Z"/>
<path class="w" d="M744.9,586.6 765.4,584.1 766.9,565.2 746.2,567.7Z"/>
<path class="g25" d="M691.5,551.2 697.9,561.9 698.9,542.7 692.5,532.3Z"/>
<path class="w" d="M691.5,551.2 697.9,561.9 698.9,542.7 692.5,532.3Z"/>
<path class="g68" d="M730.4,459.5 737.4,469.1 758.2,466.9 751.0,457.4Z"/>
<path class="w" d="M730.4,459.5 737.4,469.1 758.2,466.9 751.0,457.4Z"/>
<path class="g67" d="M766.9,565.2 787.5,562.8 789.2,543.6 768.5,546.1Z"/>
<path class="w" d="M766.9,565.2 787.5,562.8 789.2,543.6 768.5,546.1Z"/>
<path class="g25" d="M687.0,503.0 693.4,513.0 694.4,493.4 688.0,483.6Z"/>
<path class="w" d="M687.0,503.0 693.4,513.0 694.4,493.4 688.0,483.6Z"/>
<path class="g67" d="M724.2,589.2 744.9,586.6 746.2,567.7 725.4,570.2Z"/>
<path class="w" d="M724.2,589.2 744.9,586.6 746.2,567.7 725.4,570.2Z"/>
<path class="g68" d="M778.9,464.7 786.6,474.4 807.4,472.1 799.5,462.5Z"/>
<path class="w" d="M778.9,464.7 786.6,474.4 807.4,472.1 799.5,462.5Z"/>
<path class="g25" d="M696.9,580.7 703.4,591.8 704.5,572.8 697.9,561.9Z"/>
<path class="w" d="M696.9,580.7 703.4,591.8 704.5,572.8 697.9,561.9Z"/>
<path class="g67" d="M789.2,543.6 809.8,541.2 811.7,521.8 790.9,524.2Z"/>
<path class="w" d="M789.2,543.6 809.8,541.2 811.7,521.8 790.9,524.2Z"/>
<path class="g68" d="M709.7,461.7 716.5,471.3 737.4,469.1 730.4,459.5Z"/>
<path class="w" d="M709.7,461.7 716.5,471.3 737.4,469.1 730.4,459.5Z"/>
<path class="g67" d="M746.2,567.7 766.9,565.2 768.5,546.1 747.6,548.5Z"/>
<path class="w" d="M746.2,567.7 766.9,565.2 768.5,546.1 747.6,548.5Z"/>
<path class="g25" d="M692.5,532.3 698.9,542.7 699.9,523.3 693.4,513.0Z"/>
<path class="w" d="M692.5,532.3 698.9,542.7 699.9,523.3 693.4,513.0Z"/>
<path class="g67" d="M703.4,591.8 724.2,589.2 725.4,570.2 704.5,572.8Z"/>
<path class="w" d="M703.4,591.8 724.2,589.2 725.4,570.2 704.5,572.8Z"/>
<path class="g68" d="M758.2,466.9 765.7,476.6 786.6,474.4 778.9,464.7Z"/>
<path class="w" d="M758.2,466.9 765.7,476.6 786.6,474.4 778.9,464.7Z"/>
<path class="g25" d="M688.0,483.6 694.4,493.4 695.4,473.6 688.9,463.9Z"/>
<path class="w" d="M688.0,483.6 694.4,493.4 695.4,473.6 688.9,463.9Z"/>
<path class="g67" d="M768.5,546.1 789.2,543.6 790.9,524.2 770.0,526.6Z"/>
<path class="w" d="M768.5,546.1 789.2,543.6 790.9,524.2 770.0,526.6Z"/>
<path class="g68" d="M688.9,463.9 695.4,473.6 716.5,471.3 709.7,461.7Z"/>
<path class="w" d="M688.9,463.9 695.4,473.6 716.5,471.3 709.7,461.7Z"/>
<path class="g67" d="M725.4,570.2 746.2,567.7 747.6,548.5 726.6,551.0Z"/>
<path class="w" d="M725.4,570.2 746.2,567.7 747.6,548.5 726.6,551.0Z"/>
<path class="g67" d="M790.9,524.2 811.7,521.8 813.6,502.1 792.7,504.4Z"/>
<path class="w" d="M790.9,524.2 811.7,521.8 813.6,502.1 792.7,504.4Z"/>
<path class="g25" d="M697.9,561.9 704.5,572.8 705.6,553.5 698.9,542.7Z"/>
<path class="w" d="M697.9,561.9 704.5,572.8 705.6,553.5 698.9,542.7Z"/>
<path class="g68" d="M737.4,469.1 744.6,478.9 765.7,476.6 758.2,466.9Z"/>
<path class="w" d="M737.4,469.1 744.6,478.9 765.7,476.6 758.2,466.9Z"/>
<path class="g67" d="M747.6,548.5 768.5,546.1 770.0,526.6 749.0,529.0Z"/>
<path class="w" d="M747.6,548.5 768.5,546.1 770.0,526.6 749.0,529.0Z"/>
<path class="g25" d="M693.4,513.0 699.9,523.3 701.0,503.6 694.4,493.4Z"/>
<path class="w" d="M693.4,513.0 699.9,523.3 701.0,503.6 694.4,493.4Z"/>
<path class="g67" d="M704.5,572.8 725.4,570.2 726.6,551.0 705.6,553.5Z"/>
<path class="w" d="M704.5,572.8 725.4,570.2 726.6,551.0 705.6,553.5Z"/>
<path class="g68" d="M786.6,474.4 794.5,484.4 815.6,482.0 807.4,472.1Z"/>
<path class="w" d="M786.6,474.4 794.5,484.4 815.6,482.0 807.4,472.1Z"/>
<path class="g67" d="M770.0,526.6 790.9,524.2 792.7,504.4 771.6,506.8Z"/>
<path class="w" d="M770.0,526.6 790.9,524.2 792.7,504.4 771.6,506.8Z"/>
<path class="g68" d="M716.5,471.3 723.4,481.2 744.6,478.9 737.4,469.1Z"/>
<path class="w" d="M716.5,471.3 723.4,481.2 744.6,478.9 737.4,469.1Z"/>
<path class="g67" d="M792.7,504.4 813.6,502.1 815.6,482.0 794.5,484.4Z"/>
<path class="w" d="M792.7,504.4 813.6,502.1 815.6,482.0 794.5,484.4Z"/>
<path class="g67" d="M726.6,551.0 747.6,548.5 749.0,529.0 727.9,531.4Z"/>
<path class="w" d="M726.6,551.0 747.6,548.5 749.0,529.0 727.9,531.4Z"/>
<path class="g25" d="M698.9,542.7 705.6,553.5 706.6,533.9 699.9,523.3Z"/>
<path class="w" d="M698.9,542.7 705.6,553.5 706.6,533.9 699.9,523.3Z"/>
<path class="g68" d="M765.7,476.6 773.3,486.7 794.5,484.4 786.6,474.4Z"/>
<path class="w" d="M765.7,476.6 773.3,486.7 794.5,484.4 786.6,474.4Z"/>
<path class="g25" d="M694.4,493.4 701.0,503.6 702.0,483.5 695.4,473.6Z"/>
<path class="w" d="M694.4,493.4 701.0,503.6 702.0,483.5 695.4,473.6Z"/>
<path class="g67" d="M749.0,529.0 770.0,526.6 771.6,506.8 750.5,509.2Z"/>
<path class="w" d="M749.0,529.0 770.0,526.6 771.6,506.8 750.5,509.2Z"/>
<path class="g68" d="M695.4,473.6 702.0,483.5 723.4,481.2 716.5,471.3Z"/>
<path class="w" d="M695.4,473.6 702.0,483.5 723.4,481.2 716.5,471.3Z"/>
<path class="g67" d="M705.6,553.5 726.6,551.0 727.9,531.4 706.6,533.9Z"/>
<path class="w" d="M705.6,553.5 726.6,551.0 727.9,531.4 706.6,533.9Z"/>
<path class="g67" d="M771.6,506.8 792.7,504.4 794.5,484.4 773.3,486.7Z"/>
<path class="w" d="M771.6,506.8 792.7,504.4 794.5,484.4 773.3,486.7Z"/>
<path class="g68" d="M744.6,478.9 751.9,489.0 773.3,486.7 765.7,476.6Z"/>
<path class="w" d="M744.6,478.9 751.9,489.0 773.3,486.7 765.7,476.6Z"/>
<path class="g67" d="M727.9,531.4 749.0,529.0 750.5,509.2 729.2,511.6Z"/>
<path class="w" d="M727.9,531.4 749.0,529.0 750.5,509.2 729.2,511.6Z"/>
<path class="g25" d="M699.9,523.3 706.6,533.9 707.7,514.0 701.0,503.6Z"/>
<path class="w" d="M699.9,523.3 706.6,533.9 707.7,514.0 701.0,503.6Z"/>
<path class="g67" d="M750.5,509.2 771.6,506.8 773.3,486.7 751.9,489.0Z"/>
<path class="w" d="M750.5,509.2 771.6,506.8 773.3,486.7 751.9,489.0Z"/>
<path class="g67" d="M706.6,533.9 727.9,531.4 729.2,511.6 707.7,514.0Z"/>
<path class="w" d="M706.6,533.9 727.9,531.4 729.2,511.6 707.7,514.0Z"/>
<path class="g68" d="M723.4,481.2 730.5,491.4 751.9,489.0 744.6,478.9Z"/>
<path class="w" d="M723.4,481.2 730.5,491.4 751.9,489.0 744.6,478.9Z"/>
<path class="g67" d="M729.2,511.6 750.5,509.2 751.9,489.0 730.5,491.4Z"/>
<path class="w" d="M729.2,511.6 750.5,509.2 751.9,489.0 730.5,491.4Z"/>
<path class="g25" d="M701.0,503.6 707.7,514.0 708.9,493.7 702.0,483.5Z"/>
<path class="w" d="M701.0,503.6 707.7,514.0 708.9,493.7 702.0,483.5Z"/>
<path class="g68" d="M702.0,483.5 708.9,493.7 730.5,491.4 723.4,481.2Z"/>
<path class="w" d="M702.0,483.5 708.9,493.7 730.5,491.4 723.4,481.2Z"/>
<path class="g67" d="M707.7,514.0 729.2,511.6 730.5,491.4 708.9,493.7Z"/>
<path class="w" d="M707.7,514.0 729.2,511.6 730.5,491.4 708.9,493.7Z"/>
</g>
<g shape-rendering="crispEdges" stroke-width=".7">
<path class="g44" d="M546.4,508.6 555.8,508.4 556.1,509.3 547.1,509.4Z"/>
<path class="g54" d="M547.1,509.4 556.1,509.3 556.4,510.1 547.8,510.2Z"/>
<path class="g64" d="M547.8,510.2 556.4,510.1 556.7,510.9 548.6,511.0Z"/>
<path class="g44" d="M555.8,508.4 565.2,508.3 565.1,509.1 556.1,509.3Z"/>
<path class="g54" d="M556.1,509.3 565.1,509.1 565.0,510.0 556.4,510.1Z"/>
<path class="g64" d="M556.4,510.1 565.0,510.0 564.8,510.8 556.7,510.9Z"/>
<path class="g44" d="M565.2,508.3 574.7,508.2 574.1,509.0 565.1,509.1Z"/>
<path class="g54" d="M565.1,509.1 574.1,509.0 573.5,509.8 565.0,510.0Z"/>
<path class="g64" d="M565.0,510.0 573.5,509.8 572.9,510.7 564.8,510.8Z"/>
<path class="w" d="M546.4,508.6 574.7,508.2 572.9,510.7 548.6,511.0Z"/>
<path class="g30" d="M552.7,547.8 558.4,547.7 558.2,548.7 552.2,548.8Z"/>
<path class="g20" d="M552.2,548.8 558.2,548.7 558.0,549.7 551.7,549.8Z"/>
<path class="g20" d="M551.7,549.8 558.0,549.7 557.8,550.6 551.1,550.7Z"/>
<path class="g30" d="M558.4,547.7 564.1,547.6 564.3,548.6 558.2,548.7Z"/>
<path class="g20" d="M558.2,548.7 564.3,548.6 564.4,549.6 558.0,549.7Z"/>
<path class="g20" d="M558.0,549.7 564.4,549.6 564.5,550.5 557.8,550.6Z"/>
<path class="g29" d="M564.1,547.6 569.9,547.6 570.3,548.5 564.3,548.6Z"/>
<path class="g20" d="M564.3,548.6 570.3,548.5 570.7,549.5 564.4,549.6Z"/>
<path class="g20" d="M564.4,549.6 570.7,549.5 571.1,550.4 564.5,550.5Z"/>
<path class="w" d="M552.7,547.8 569.9,547.6 571.1,550.4 551.1,550.7Z"/>
<path class="g28" d="M569.9,547.6 575.2,548.6 575.9,549.6 570.3,548.5Z"/>
<path class="g20" d="M570.3,548.5 575.9,549.6 576.7,550.6 570.7,549.5Z"/>
<path class="g20" d="M570.7,549.5 576.7,550.6 577.4,551.6 571.1,550.4Z"/>
<path class="g26" d="M575.2,548.6 580.5,549.6 581.6,550.7 575.9,549.6Z"/>
<path class="g20" d="M575.9,549.6 581.6,550.7 582.6,551.8 576.7,550.6Z"/>
<path class="g20" d="M576.7,550.6 582.6,551.8 583.7,552.8 577.4,551.6Z"/>
<path class="g23" d="M580.5,549.6 585.9,550.6 587.3,551.8 581.6,550.7Z"/>
<path class="g20" d="M581.6,550.7 587.3,551.8 588.6,552.9 582.6,551.8Z"/>
<path class="g20" d="M582.6,551.8 588.6,552.9 589.9,554.0 583.7,552.8Z"/>
<path class="w" d="M569.9,547.6 585.9,550.6 589.9,554.0 571.1,550.4Z"/>
<path class="g26" d="M537.0,551.3 542.2,550.1 541.1,551.3 535.5,552.5Z"/>
<path class="g20" d="M535.5,552.5 541.1,551.3 540.0,552.4 534.1,553.7Z"/>
<path class="g20" d="M534.1,553.7 540.0,552.4 538.8,553.5 532.7,554.9Z"/>
<path class="g28" d="M542.2,550.1 547.5,549.0 546.6,550.0 541.1,551.3Z"/>
<path class="g20" d="M541.1,551.3 546.6,550.0 545.8,551.1 540.0,552.4Z"/>
<path class="g20" d="M540.0,552.4 545.8,551.1 545.0,552.1 538.8,553.5Z"/>
<path class="g30" d="M547.5,549.0 552.7,547.8 552.2,548.8 546.6,550.0Z"/>
<path class="g20" d="M546.6,550.0 552.2,548.8 551.7,549.8 545.8,551.1Z"/>
<path class="g20" d="M545.8,551.1 551.7,549.8 551.1,550.7 545.0,552.1Z"/>
<path class="w" d="M537.0,551.3 552.7,547.8 551.1,550.7 532.7,554.9Z"/>
<path class="g45" d="M574.7,508.2 583.5,509.8 582.5,510.5 574.1,509.0Z"/>
<path class="g55" d="M574.1,509.0 582.5,510.5 581.5,511.3 573.5,509.8Z"/>
<path class="g64" d="M573.5,509.8 581.5,511.3 580.5,512.1 572.9,510.7Z"/>
<path class="g46" d="M583.5,509.8 592.4,511.4 591.0,512.1 582.5,510.5Z"/>
<path class="g56" d="M582.5,510.5 591.0,512.1 589.6,512.8 581.5,511.3Z"/>
<path class="g64" d="M581.5,511.3 589.6,512.8 588.2,513.5 580.5,512.1Z"/>
<path class="g47" d="M592.4,511.4 601.3,513.0 599.5,513.6 591.0,512.1Z"/>
<path class="g56" d="M591.0,512.1 599.5,513.6 597.7,514.2 589.6,512.8Z"/>
<path class="g64" d="M589.6,512.8 597.7,514.2 595.8,514.9 588.2,513.5Z"/>
<path class="w" d="M574.7,508.2 601.3,513.0 595.8,514.9 572.9,510.7Z"/>
<path class="g46" d="M520.2,514.1 529.0,512.3 530.5,512.9 522.2,514.7Z"/>
<path class="g55" d="M522.2,514.7 530.5,512.9 532.1,513.6 524.1,515.3Z"/>
<path class="g64" d="M524.1,515.3 532.1,513.6 533.6,514.2 526.1,515.8Z"/>
<path class="g45" d="M529.0,512.3 537.7,510.4 538.8,511.1 530.5,512.9Z"/>
<path class="g55" d="M530.5,512.9 538.8,511.1 540.0,511.9 532.1,513.6Z"/>
<path class="g64" d="M532.1,513.6 540.0,511.9 541.1,512.6 533.6,514.2Z"/>
<path class="g44" d="M537.7,510.4 546.4,508.6 547.1,509.4 538.8,511.1Z"/>
<path class="g54" d="M538.8,511.1 547.1,509.4 547.8,510.2 540.0,511.9Z"/>
<path class="g64" d="M540.0,511.9 547.8,510.2 548.6,511.0 541.1,512.6Z"/>
<path class="w" d="M520.2,514.1 546.4,508.6 548.6,511.0 526.1,515.8Z"/>
<path class="g72" d="M548.6,511.0 556.7,510.9 557.0,513.4 549.3,513.5Z"/>
<path class="g79" d="M549.3,513.5 557.0,513.4 557.3,515.9 550.1,516.0Z"/>
<path class="g88" d="M550.1,516.0 557.3,515.9 557.6,518.5 550.9,518.6Z"/>
<path class="g71" d="M556.7,510.9 564.8,510.8 564.7,513.3 557.0,513.4Z"/>
<path class="g79" d="M557.0,513.4 564.7,513.3 564.5,515.8 557.3,515.9Z"/>
<path class="g88" d="M557.3,515.9 564.5,515.8 564.4,518.4 557.6,518.5Z"/>
<path class="g71" d="M564.8,510.8 572.9,510.7 572.3,513.2 564.7,513.3Z"/>
<path class="g79" d="M564.7,513.3 572.3,513.2 571.8,515.7 564.5,515.8Z"/>
<path class="g87" d="M564.5,515.8 571.8,515.7 571.2,518.3 564.4,518.4Z"/>
<path class="w" d="M548.6,511.0 572.9,510.7 571.2,518.3 550.9,518.6Z"/>
<path class="g62" d="M553.3,539.9 558.6,539.8 558.6,542.5 553.1,542.6Z"/>
<path class="g52" d="M553.1,542.6 558.6,542.5 558.5,545.1 552.9,545.2Z"/>
<path class="g41" d="M552.9,545.2 558.5,545.1 558.4,547.7 552.7,547.8Z"/>
<path class="g62" d="M558.6,539.8 564.0,539.8 564.1,542.4 558.6,542.5Z"/>
<path class="g52" d="M558.6,542.5 564.1,542.4 564.1,545.0 558.5,545.1Z"/>
<path class="g41" d="M558.5,545.1 564.1,545.0 564.1,547.6 558.4,547.7Z"/>
<path class="g61" d="M564.0,539.8 569.4,539.7 569.5,542.3 564.1,542.4Z"/>
<path class="g51" d="M564.1,542.4 569.5,542.3 569.7,544.9 564.1,545.0Z"/>
<path class="g40" d="M564.1,545.0 569.7,544.9 569.9,547.6 564.1,547.6Z"/>
<path class="w" d="M553.3,539.9 569.4,539.7 569.9,547.6 552.7,547.8Z"/>
<path class="g20" d="M585.9,550.6 590.1,552.6 591.7,553.9 587.3,551.8Z"/>
<path class="g20" d="M587.3,551.8 591.7,553.9 593.3,555.1 588.6,552.9Z"/>
<path class="g20" d="M588.6,552.9 593.3,555.1 594.9,556.4 589.9,554.0Z"/>
<path class="g20" d="M590.1,552.6 594.4,554.6 596.2,556.0 591.7,553.9Z"/>
<path class="g20" d="M591.7,553.9 596.2,556.0 598.0,557.3 593.3,555.1Z"/>
<path class="g20" d="M593.3,555.1 598.0,557.3 599.9,558.7 594.9,556.4Z"/>
<path class="g20" d="M594.4,554.6 598.6,556.6 600.7,558.1 596.2,556.0Z"/>
<path class="g20" d="M596.2,556.0 600.7,558.1 602.8,559.6 598.0,557.3Z"/>
<path class="g20" d="M598.0,557.3 602.8,559.6 604.9,561.1 599.9,558.7Z"/>
<path class="w" d="M585.9,550.6 598.6,556.6 604.9,561.1 589.9,554.0Z"/>
<path class="g59" d="M569.4,539.7 574.4,540.6 574.7,543.3 569.5,542.3Z"/>
<path class="g49" d="M569.5,542.3 574.7,543.3 574.9,545.9 569.7,544.9Z"/>
<path class="g39" d="M569.7,544.9 574.9,545.9 575.2,548.6 569.9,547.6Z"/>
<path class="g57" d="M574.4,540.6 579.4,541.6 579.8,544.3 574.7,543.3Z"/>
<path class="g47" d="M574.7,543.3 579.8,544.3 580.2,546.9 574.9,545.9Z"/>
<path class="g36" d="M574.9,545.9 580.2,546.9 580.5,549.6 575.2,548.6Z"/>
<path class="g54" d="M579.4,541.6 584.5,542.5 584.9,545.2 579.8,544.3Z"/>
<path class="g44" d="M579.8,544.3 584.9,545.2 585.4,547.9 580.2,546.9Z"/>
<path class="g34" d="M580.2,546.9 585.4,547.9 585.9,550.6 580.5,549.6Z"/>
<path class="w" d="M569.4,539.7 584.5,542.5 585.9,550.6 569.9,547.6Z"/>
<path class="g20" d="M524.8,557.7 528.9,555.5 527.0,557.0 522.7,559.2Z"/>
<path class="g20" d="M522.7,559.2 527.0,557.0 525.1,558.4 520.5,560.8Z"/>
<path class="g20" d="M520.5,560.8 525.1,558.4 523.2,559.8 518.4,562.3Z"/>
<path class="g21" d="M528.9,555.5 532.9,553.4 531.3,554.7 527.0,557.0Z"/>
<path class="g20" d="M527.0,557.0 531.3,554.7 529.6,556.0 525.1,558.4Z"/>
<path class="g20" d="M525.1,558.4 529.6,556.0 527.9,557.3 523.2,559.8Z"/>
<path class="g24" d="M532.9,553.4 537.0,551.3 535.5,552.5 531.3,554.7Z"/>
<path class="g20" d="M531.3,554.7 535.5,552.5 534.1,553.7 529.6,556.0Z"/>
<path class="g20" d="M529.6,556.0 534.1,553.7 532.7,554.9 527.9,557.3Z"/>
<path class="w" d="M524.8,557.7 537.0,551.3 532.7,554.9 518.4,562.3Z"/>
<path class="g57" d="M538.5,543.2 543.4,542.1 543.0,544.8 538.0,545.9Z"/>
<path class="g48" d="M538.0,545.9 543.0,544.8 542.6,547.5 537.5,548.6Z"/>
<path class="g37" d="M537.5,548.6 542.6,547.5 542.2,550.1 537.0,551.3Z"/>
<path class="g60" d="M543.4,542.1 548.4,541.0 548.1,543.7 543.0,544.8Z"/>
<path class="g50" d="M543.0,544.8 548.1,543.7 547.8,546.3 542.6,547.5Z"/>
<path class="g39" d="M542.6,547.5 547.8,546.3 547.5,549.0 542.2,550.1Z"/>
<path class="g61" d="M548.4,541.0 553.3,539.9 553.1,542.6 548.1,543.7Z"/>
<path class="g51" d="M548.1,543.7 553.1,542.6 552.9,545.2 547.8,546.3Z"/>
<path class="g40" d="M547.8,546.3 552.9,545.2 552.7,547.8 547.5,549.0Z"/>
<path class="w" d="M538.5,543.2 553.3,539.9 552.7,547.8 537.0,551.3Z"/>
<path class="g71" d="M572.9,510.7 580.5,512.1 579.5,514.5 572.3,513.2Z"/>
<path class="g79" d="M572.3,513.2 579.5,514.5 578.5,517.0 571.8,515.7Z"/>
<path class="g86" d="M571.8,515.7 578.5,517.0 577.5,519.4 571.2,518.3Z"/>
<path class="g71" d="M580.5,512.1 588.2,513.5 586.7,515.8 579.5,514.5Z"/>
<path class="g78" d="M579.5,514.5 586.7,515.8 585.3,518.2 578.5,517.0Z"/>
<path class="g84" d="M578.5,517.0 585.3,518.2 583.8,520.6 577.5,519.4Z"/>
<path class="g71" d="M588.2,513.5 595.8,514.9 594.0,517.2 586.7,515.8Z"/>
<path class="g77" d="M586.7,515.8 594.0,517.2 592.1,519.5 585.3,518.2Z"/>
<path class="g82" d="M585.3,518.2 592.1,519.5 590.2,521.8 583.8,520.6Z"/>
<path class="w" d="M572.9,510.7 595.8,514.9 590.2,521.8 571.2,518.3Z"/>
<path class="g71" d="M526.1,515.8 533.6,514.2 535.2,516.6 528.1,518.1Z"/>
<path class="g78" d="M528.1,518.1 535.2,516.6 536.8,518.9 530.1,520.3Z"/>
<path class="g84" d="M530.1,520.3 536.8,518.9 538.4,521.3 532.2,522.6Z"/>
<path class="g71" d="M533.6,514.2 541.1,512.6 542.3,515.0 535.2,516.6Z"/>
<path class="g78" d="M535.2,516.6 542.3,515.0 543.5,517.5 536.8,518.9Z"/>
<path class="g86" d="M536.8,518.9 543.5,517.5 544.7,519.9 538.4,521.3Z"/>
<path class="g71" d="M541.1,512.6 548.6,511.0 549.3,513.5 542.3,515.0Z"/>
<path class="g79" d="M542.3,515.0 549.3,513.5 550.1,516.0 543.5,517.5Z"/>
<path class="g87" d="M543.5,517.5 550.1,516.0 550.9,518.6 544.7,519.9Z"/>
<path class="w" d="M526.1,515.8 548.6,511.0 550.9,518.6 532.2,522.6Z"/>
<path class="g97" d="M550.9,518.6 557.6,518.5 557.9,522.0 551.4,522.1Z"/>
<path class="g116" d="M551.4,522.1 557.9,522.0 558.1,525.5 552.0,525.6Z"/>
<path class="g125" d="M552.0,525.6 558.1,525.5 558.3,529.1 552.6,529.2Z"/>
<path class="g97" d="M557.6,518.5 564.4,518.4 564.3,521.9 557.9,522.0Z"/>
<path class="g118" d="M557.9,522.0 564.3,521.9 564.2,525.5 558.1,525.5Z"/>
<path class="g132" d="M558.1,525.5 564.2,525.5 564.1,529.0 558.3,529.1Z"/>
<path class="g96" d="M564.4,518.4 571.2,518.3 570.7,521.8 564.3,521.9Z"/>
<path class="g111" d="M564.3,521.9 570.7,521.8 570.3,525.4 564.2,525.5Z"/>
<path class="g118" d="M564.2,525.5 570.3,525.4 569.8,528.9 564.1,529.0Z"/>
<path class="w" d="M550.9,518.6 571.2,518.3 569.8,528.9 552.6,529.2Z"/>
<path class="g100" d="M552.6,529.2 558.3,529.1 558.4,532.7 552.8,532.8Z"/>
<path class="g84" d="M552.8,532.8 558.4,532.7 558.5,536.3 553.1,536.3Z"/>
<path class="g73" d="M553.1,536.3 558.5,536.3 558.6,539.8 553.3,539.9Z"/>
<path class="g102" d="M558.3,529.1 564.1,529.0 564.1,532.6 558.4,532.7Z"/>
<path class="g85" d="M558.4,532.7 564.1,532.6 564.0,536.2 558.5,536.3Z"/>
<path class="g73" d="M558.5,536.3 564.0,536.2 564.0,539.8 558.6,539.8Z"/>
<path class="g97" d="M564.1,529.0 569.8,528.9 569.7,532.5 564.1,532.6Z"/>
<path class="g83" d="M564.1,532.6 569.7,532.5 569.5,536.1 564.0,536.2Z"/>
<path class="g71" d="M564.0,536.2 569.5,536.1 569.4,539.7 564.0,539.8Z"/>
<path class="w" d="M552.6,529.2 569.8,528.9 569.4,539.7 553.3,539.9Z"/>
<path class="g49" d="M601.3,513.0 608.4,516.2 606.2,516.6 599.5,513.6Z"/>
<path class="g57" d="M599.5,513.6 606.2,516.6 604.0,517.1 597.7,514.2Z"/>
<path class="g65" d="M597.7,514.2 604.0,517.1 601.9,517.6 595.8,514.9Z"/>
<path class="g51" d="M608.4,516.2 615.5,519.3 613.0,519.6 606.2,516.6Z"/>
<path class="g58" d="M606.2,516.6 613.0,519.6 610.5,520.0 604.0,517.1Z"/>
<path class="g65" d="M604.0,517.1 610.5,520.0 607.9,520.3 601.9,517.6Z"/>
<path class="g53" d="M615.5,519.3 622.7,522.5 619.8,522.7 613.0,519.6Z"/>
<path class="g60" d="M613.0,519.6 619.8,522.7 616.9,522.9 610.5,520.0Z"/>
<path class="g65" d="M610.5,520.0 616.9,522.9 614.1,523.0 607.9,520.3Z"/>
<path class="w" d="M601.3,513.0 622.7,522.5 614.1,523.0 595.8,514.9Z"/>
<path class="g91" d="M569.8,528.9 575.2,529.9 574.9,533.5 569.7,532.5Z"/>
<path class="g80" d="M569.7,532.5 574.9,533.5 574.7,537.1 569.5,536.1Z"/>
<path class="g69" d="M569.5,536.1 574.7,537.1 574.4,540.6 569.4,539.7Z"/>
<path class="g85" d="M575.2,529.9 580.6,530.9 580.2,534.5 574.9,533.5Z"/>
<path class="g76" d="M574.9,533.5 580.2,534.5 579.8,538.0 574.7,537.1Z"/>
<path class="g66" d="M574.7,537.1 579.8,538.0 579.4,541.6 574.4,540.6Z"/>
<path class="g79" d="M580.6,530.9 586.0,532.0 585.5,535.5 580.2,534.5Z"/>
<path class="g71" d="M580.2,534.5 585.5,535.5 585.0,539.0 579.8,538.0Z"/>
<path class="g62" d="M579.8,538.0 585.0,539.0 584.5,542.5 579.4,541.6Z"/>
<path class="w" d="M569.8,528.9 586.0,532.0 584.5,542.5 569.4,539.7Z"/>
<path class="g50" d="M499.7,524.2 506.6,520.8 509.2,521.1 502.7,524.3Z"/>
<path class="g58" d="M502.7,524.3 509.2,521.1 511.9,521.3 505.6,524.4Z"/>
<path class="g65" d="M505.6,524.4 511.9,521.3 514.5,521.6 508.6,524.5Z"/>
<path class="g49" d="M506.6,520.8 513.4,517.5 515.7,517.9 509.2,521.1Z"/>
<path class="g57" d="M509.2,521.1 515.7,517.9 518.0,518.3 511.9,521.3Z"/>
<path class="g64" d="M511.9,521.3 518.0,518.3 520.3,518.7 514.5,521.6Z"/>
<path class="g47" d="M513.4,517.5 520.2,514.1 522.2,514.7 515.7,517.9Z"/>
<path class="g56" d="M515.7,517.9 522.2,514.7 524.1,515.3 518.0,518.3Z"/>
<path class="g64" d="M518.0,518.3 524.1,515.3 526.1,515.8 520.3,518.7Z"/>
<path class="w" d="M499.7,524.2 520.2,514.1 526.1,515.8 508.6,524.5Z"/>
<path class="g93" d="M571.2,518.3 577.5,519.4 576.7,522.9 570.7,521.8Z"/>
<path class="g101" d="M570.7,521.8 576.7,522.9 576.0,526.4 570.3,525.4Z"/>
<path class="g102" d="M570.3,525.4 576.0,526.4 575.2,529.9 569.8,528.9Z"/>
<path class="g90" d="M577.5,519.4 583.8,520.6 582.8,524.1 576.7,522.9Z"/>
<path class="g93" d="M576.7,522.9 582.8,524.1 581.7,527.5 576.0,526.4Z"/>
<path class="g92" d="M576.0,526.4 581.7,527.5 580.6,530.9 575.2,529.9Z"/>
<path class="g86" d="M583.8,520.6 590.2,521.8 588.8,525.2 582.8,524.1Z"/>
<path class="g88" d="M582.8,524.1 588.8,525.2 587.4,528.6 581.7,527.5Z"/>
<path class="g85" d="M581.7,527.5 587.4,528.6 586.0,532.0 580.6,530.9Z"/>
<path class="w" d="M571.2,518.3 590.2,521.8 586.0,532.0 569.8,528.9Z"/>
<path class="g84" d="M536.7,532.7 542.0,531.5 542.5,535.0 537.3,536.2Z"/>
<path class="g75" d="M537.3,536.2 542.5,535.0 542.9,538.6 537.9,539.7Z"/>
<path class="g66" d="M537.9,539.7 542.9,538.6 543.4,542.1 538.5,543.2Z"/>
<path class="g89" d="M542.0,531.5 547.3,530.3 547.7,533.9 542.5,535.0Z"/>
<path class="g79" d="M542.5,535.0 547.7,533.9 548.0,537.5 542.9,538.6Z"/>
<path class="g69" d="M542.9,538.6 548.0,537.5 548.4,541.0 543.4,542.1Z"/>
<path class="g94" d="M547.3,530.3 552.6,529.2 552.8,532.8 547.7,533.9Z"/>
<path class="g82" d="M547.7,533.9 552.8,532.8 553.1,536.3 548.0,537.5Z"/>
<path class="g71" d="M548.0,537.5 553.1,536.3 553.3,539.9 548.4,541.0Z"/>
<path class="w" d="M536.7,532.7 552.6,529.2 553.3,539.9 538.5,543.2Z"/>
<path class="g89" d="M532.2,522.6 538.4,521.3 539.6,524.7 533.7,526.0Z"/>
<path class="g91" d="M533.7,526.0 539.6,524.7 540.8,528.1 535.2,529.3Z"/>
<path class="g89" d="M535.2,529.3 540.8,528.1 542.0,531.5 536.7,532.7Z"/>
<path class="g92" d="M538.4,521.3 544.7,519.9 545.5,523.4 539.6,524.7Z"/>
<path class="g97" d="M539.6,524.7 545.5,523.4 546.4,526.9 540.8,528.1Z"/>
<path class="g96" d="M540.8,528.1 546.4,526.9 547.3,530.3 542.0,531.5Z"/>
<path class="g95" d="M544.7,519.9 550.9,518.6 551.4,522.1 545.5,523.4Z"/>
<path class="g106" d="M545.5,523.4 551.4,522.1 552.0,525.6 546.4,526.9Z"/>
<path class="g108" d="M546.4,526.9 552.0,525.6 552.6,529.2 547.3,530.3Z"/>
<path class="w" d="M532.2,522.6 550.9,518.6 552.6,529.2 536.7,532.7Z"/>
<path class="g50" d="M584.5,542.5 588.4,544.4 589.0,547.1 584.9,545.2Z"/>
<path class="g40" d="M584.9,545.2 589.0,547.1 589.6,549.9 585.4,547.9Z"/>
<path class="g30" d="M585.4,547.9 589.6,549.9 590.1,552.6 585.9,550.6Z"/>
<path class="g45" d="M588.4,544.4 592.4,546.2 593.1,549.0 589.0,547.1Z"/>
<path class="g36" d="M589.0,547.1 593.1,549.0 593.7,551.8 589.6,549.9Z"/>
<path class="g26" d="M589.6,549.9 593.7,551.8 594.4,554.6 590.1,552.6Z"/>
<path class="g41" d="M592.4,546.2 596.4,548.1 597.1,550.9 593.1,549.0Z"/>
<path class="g32" d="M593.1,549.0 597.1,550.9 597.9,553.8 593.7,551.8Z"/>
<path class="g22" d="M593.7,551.8 597.9,553.8 598.6,556.6 594.4,554.6Z"/>
<path class="w" d="M584.5,542.5 596.4,548.1 598.6,556.6 585.9,550.6Z"/>
<path class="g47" d="M527.1,549.1 530.9,547.1 530.2,549.9 526.3,552.0Z"/>
<path class="g37" d="M526.3,552.0 530.2,549.9 529.5,552.8 525.6,554.8Z"/>
<path class="g27" d="M525.6,554.8 529.5,552.8 528.9,555.5 524.8,557.7Z"/>
<path class="g51" d="M530.9,547.1 534.7,545.2 534.1,547.9 530.2,549.9Z"/>
<path class="g41" d="M530.2,549.9 534.1,547.9 533.5,550.7 529.5,552.8Z"/>
<path class="g31" d="M529.5,552.8 533.5,550.7 532.9,553.4 528.9,555.5Z"/>
<path class="g54" d="M534.7,545.2 538.5,543.2 538.0,545.9 534.1,547.9Z"/>
<path class="g45" d="M534.1,547.9 538.0,545.9 537.5,548.6 533.5,550.7Z"/>
<path class="g34" d="M533.5,550.7 537.5,548.6 537.0,551.3 532.9,553.4Z"/>
<path class="w" d="M527.1,549.1 538.5,543.2 537.0,551.3 524.8,557.7Z"/>
<path class="g70" d="M595.8,514.9 601.9,517.6 599.7,519.7 594.0,517.2Z"/>
<path class="g76" d="M594.0,517.2 599.7,519.7 597.4,521.9 592.1,519.5Z"/>
<path class="g80" d="M592.1,519.5 597.4,521.9 595.2,524.1 590.2,521.8Z"/>
<path class="g70" d="M601.9,517.6 607.9,520.3 605.4,522.3 599.7,519.7Z"/>
<path class="g74" d="M599.7,519.7 605.4,522.3 602.8,524.3 597.4,521.9Z"/>
<path class="g77" d="M597.4,521.9 602.8,524.3 600.3,526.3 595.2,524.1Z"/>
<path class="g70" d="M607.9,520.3 614.1,523.0 611.2,524.9 605.4,522.3Z"/>
<path class="g73" d="M605.4,522.3 611.2,524.9 608.2,526.8 602.8,524.3Z"/>
<path class="g75" d="M602.8,524.3 608.2,526.8 605.3,528.6 600.3,526.3Z"/>
<path class="w" d="M595.8,514.9 614.1,523.0 605.3,528.6 590.2,521.8Z"/>
<path class="g70" d="M508.6,524.5 514.5,521.6 517.2,523.5 511.6,526.3Z"/>
<path class="g74" d="M511.6,526.3 517.2,523.5 519.9,525.5 514.7,528.1Z"/>
<path class="g77" d="M514.7,528.1 519.9,525.5 522.5,527.4 517.7,529.9Z"/>
<path class="g71" d="M514.5,521.6 520.3,518.7 522.7,520.8 517.2,523.5Z"/>
<path class="g76" d="M517.2,523.5 522.7,520.8 525.0,522.9 519.9,525.5Z"/>
<path class="g80" d="M519.9,525.5 525.0,522.9 527.4,525.0 522.5,527.4Z"/>
<path class="g71" d="M520.3,518.7 526.1,515.8 528.1,518.1 522.7,520.8Z"/>
<path class="g77" d="M522.7,520.8 528.1,518.1 530.1,520.3 525.0,522.9Z"/>
<path class="g82" d="M525.0,522.9 530.1,520.3 532.2,522.6 527.4,525.0Z"/>
<path class="w" d="M508.6,524.5 526.1,515.8 532.2,522.6 517.7,529.9Z"/>
<path class="g74" d="M586.0,532.0 590.3,533.9 589.7,537.4 585.5,535.5Z"/>
<path class="g66" d="M585.5,535.5 589.7,537.4 589.0,540.9 585.0,539.0Z"/>
<path class="g58" d="M585.0,539.0 589.0,540.9 588.4,544.4 584.5,542.5Z"/>
<path class="g68" d="M590.3,533.9 594.5,535.9 593.8,539.3 589.7,537.4Z"/>
<path class="g62" d="M589.7,537.4 593.8,539.3 593.1,542.8 589.0,540.9Z"/>
<path class="g54" d="M589.0,540.9 593.1,542.8 592.4,546.2 588.4,544.4Z"/>
<path class="g63" d="M594.5,535.9 598.8,537.8 598.0,541.3 593.8,539.3Z"/>
<path class="g57" d="M593.8,539.3 598.0,541.3 597.2,544.7 593.1,542.8Z"/>
<path class="g49" d="M593.1,542.8 597.2,544.7 596.4,548.1 592.4,546.2Z"/>
<path class="w" d="M586.0,532.0 598.8,537.8 596.4,548.1 584.5,542.5Z"/>
<path class="g69" d="M524.5,538.9 528.6,536.8 529.3,540.3 525.3,542.3Z"/>
<path class="g62" d="M525.3,542.3 529.3,540.3 530.1,543.7 526.2,545.7Z"/>
<path class="g55" d="M526.2,545.7 530.1,543.7 530.9,547.1 527.1,549.1Z"/>
<path class="g74" d="M528.6,536.8 532.6,534.7 533.3,538.2 529.3,540.3Z"/>
<path class="g67" d="M529.3,540.3 533.3,538.2 534.0,541.7 530.1,543.7Z"/>
<path class="g59" d="M530.1,543.7 534.0,541.7 534.7,545.2 530.9,547.1Z"/>
<path class="g78" d="M532.6,534.7 536.7,532.7 537.3,536.2 533.3,538.2Z"/>
<path class="g71" d="M533.3,538.2 537.3,536.2 537.9,539.7 534.0,541.7Z"/>
<path class="g63" d="M534.0,541.7 537.9,539.7 538.5,543.2 534.7,545.2Z"/>
<path class="w" d="M524.5,538.9 536.7,532.7 538.5,543.2 527.1,549.1Z"/>
<path class="g82" d="M590.2,521.8 595.2,524.1 593.6,527.3 588.8,525.2Z"/>
<path class="g82" d="M588.8,525.2 593.6,527.3 591.9,530.6 587.4,528.6Z"/>
<path class="g79" d="M587.4,528.6 591.9,530.6 590.3,533.9 586.0,532.0Z"/>
<path class="g78" d="M595.2,524.1 600.3,526.3 598.4,529.5 593.6,527.3Z"/>
<path class="g77" d="M593.6,527.3 598.4,529.5 596.5,532.7 591.9,530.6Z"/>
<path class="g74" d="M591.9,530.6 596.5,532.7 594.5,535.9 590.3,533.9Z"/>
<path class="g75" d="M600.3,526.3 605.3,528.6 603.2,531.7 598.4,529.5Z"/>
<path class="g73" d="M598.4,529.5 603.2,531.7 601.0,534.8 596.5,532.7Z"/>
<path class="g69" d="M596.5,532.7 601.0,534.8 598.8,537.8 594.5,535.9Z"/>
<path class="w" d="M590.2,521.8 605.3,528.6 598.8,537.8 586.0,532.0Z"/>
<path class="g78" d="M517.7,529.9 522.5,527.4 524.6,530.6 519.9,532.9Z"/>
<path class="g77" d="M519.9,532.9 524.6,530.6 526.6,533.7 522.2,535.9Z"/>
<path class="g74" d="M522.2,535.9 526.6,533.7 528.6,536.8 524.5,538.9Z"/>
<path class="g82" d="M522.5,527.4 527.4,525.0 529.1,528.2 524.6,530.6Z"/>
<path class="g82" d="M524.6,530.6 529.1,528.2 530.9,531.5 526.6,533.7Z"/>
<path class="g79" d="M526.6,533.7 530.9,531.5 532.6,534.7 528.6,536.8Z"/>
<path class="g85" d="M527.4,525.0 532.2,522.6 533.7,526.0 529.1,528.2Z"/>
<path class="g86" d="M529.1,528.2 533.7,526.0 535.2,529.3 530.9,531.5Z"/>
<path class="g84" d="M530.9,531.5 535.2,529.3 536.7,532.7 532.6,534.7Z"/>
<path class="w" d="M517.7,529.9 532.2,522.6 536.7,532.7 524.5,538.9Z"/>
<path class="g31" d="M628.8,527.2 633.5,531.9 631.3,530.2 626.7,525.6Z"/>
<path class="g40" d="M626.7,525.6 631.3,530.2 629.1,528.5 624.7,524.1Z"/>
<path class="g48" d="M624.7,524.1 629.1,528.5 626.9,526.8 622.7,522.5Z"/>
<path class="g36" d="M633.5,531.9 638.2,536.7 635.9,534.9 631.3,530.2Z"/>
<path class="g44" d="M631.3,530.2 635.9,534.9 633.5,533.0 629.1,528.5Z"/>
<path class="g51" d="M629.1,528.5 633.5,533.0 631.2,531.1 626.9,526.8Z"/>
<path class="g41" d="M638.2,536.7 643.0,541.6 640.5,539.5 635.9,534.9Z"/>
<path class="g48" d="M635.9,534.9 640.5,539.5 638.0,537.5 633.5,533.0Z"/>
<path class="g54" d="M633.5,533.0 638.0,537.5 635.5,535.5 631.2,531.1Z"/>
<path class="w" d="M628.8,527.2 643.0,541.6 635.5,535.5 622.7,522.5Z"/>
<path class="g35" d="M480.5,543.9 484.9,538.9 487.2,537.0 483.0,541.8Z"/>
<path class="g43" d="M483.0,541.8 487.2,537.0 489.6,535.0 485.6,539.7Z"/>
<path class="g50" d="M485.6,539.7 489.6,535.0 492.0,533.1 488.1,537.6Z"/>
<path class="g30" d="M484.9,538.9 489.2,534.0 491.4,532.2 487.2,537.0Z"/>
<path class="g39" d="M487.2,537.0 491.4,532.2 493.6,530.4 489.6,535.0Z"/>
<path class="g47" d="M489.6,535.0 493.6,530.4 495.9,528.6 492.0,533.1Z"/>
<path class="g26" d="M489.2,534.0 493.4,529.1 495.5,527.5 491.4,532.2Z"/>
<path class="g35" d="M491.4,532.2 495.5,527.5 497.6,525.9 493.6,530.4Z"/>
<path class="g44" d="M493.6,530.4 497.6,525.9 499.7,524.2 495.9,528.6Z"/>
<path class="w" d="M480.5,543.9 493.4,529.1 499.7,524.2 488.1,537.6Z"/>
<path class="g36" d="M596.4,548.1 598.7,550.6 599.5,553.5 597.1,550.9Z"/>
<path class="g27" d="M597.1,550.9 599.5,553.5 600.3,556.4 597.9,553.8Z"/>
<path class="g20" d="M597.9,553.8 600.3,556.4 601.1,559.3 598.6,556.6Z"/>
<path class="g30" d="M598.7,550.6 601.0,553.1 601.9,556.1 599.5,553.5Z"/>
<path class="g21" d="M599.5,553.5 601.9,556.1 602.7,559.0 600.3,556.4Z"/>
<path class="g20" d="M600.3,556.4 602.7,559.0 603.6,562.0 601.1,559.3Z"/>
<path class="g24" d="M601.0,553.1 603.3,555.6 604.2,558.6 601.9,556.1Z"/>
<path class="g20" d="M601.9,556.1 604.2,558.6 605.1,561.7 602.7,559.0Z"/>
<path class="g20" d="M602.7,559.0 605.1,561.7 606.0,564.7 603.6,562.0Z"/>
<path class="w" d="M596.4,548.1 603.3,555.6 606.0,564.7 598.6,556.6Z"/>
<path class="g31" d="M520.8,556.8 522.9,554.2 522.1,557.2 519.9,559.9Z"/>
<path class="g22" d="M519.9,559.9 522.1,557.2 521.2,560.2 519.0,562.9Z"/>
<path class="g20" d="M519.0,562.9 521.2,560.2 520.4,563.2 518.1,566.0Z"/>
<path class="g37" d="M522.9,554.2 525.0,551.7 524.2,554.6 522.1,557.2Z"/>
<path class="g28" d="M522.1,557.2 524.2,554.6 523.4,557.5 521.2,560.2Z"/>
<path class="g20" d="M521.2,560.2 523.4,557.5 522.6,560.4 520.4,563.2Z"/>
<path class="g42" d="M525.0,551.7 527.1,549.1 526.3,552.0 524.2,554.6Z"/>
<path class="g33" d="M524.2,554.6 526.3,552.0 525.6,554.8 523.4,557.5Z"/>
<path class="g23" d="M523.4,557.5 525.6,554.8 524.8,557.7 522.6,560.4Z"/>
<path class="w" d="M520.8,556.8 527.1,549.1 524.8,557.7 518.1,566.0Z"/>
<path class="g55" d="M622.7,522.5 626.9,526.8 623.8,526.8 619.8,522.7Z"/>
<path class="g61" d="M619.8,522.7 623.8,526.8 620.7,526.7 616.9,522.9Z"/>
<path class="g66" d="M616.9,522.9 620.7,526.7 617.7,526.7 614.1,523.0Z"/>
<path class="g57" d="M626.9,526.8 631.2,531.1 627.9,530.9 623.8,526.8Z"/>
<path class="g62" d="M623.8,526.8 627.9,530.9 624.6,530.6 620.7,526.7Z"/>
<path class="g66" d="M620.7,526.7 624.6,530.6 621.3,530.4 617.7,526.7Z"/>
<path class="g60" d="M631.2,531.1 635.5,535.5 632.0,535.0 627.9,530.9Z"/>
<path class="g64" d="M627.9,530.9 632.0,535.0 628.5,534.6 624.6,530.6Z"/>
<path class="g67" d="M624.6,530.6 628.5,534.6 624.9,534.1 621.3,530.4Z"/>
<path class="w" d="M622.7,522.5 635.5,535.5 624.9,534.1 614.1,523.0Z"/>
<path class="g58" d="M598.8,537.8 601.3,540.5 600.4,543.8 598.0,541.3Z"/>
<path class="g51" d="M598.0,541.3 600.4,543.8 599.6,547.2 597.2,544.7Z"/>
<path class="g44" d="M597.2,544.7 599.6,547.2 598.7,550.6 596.4,548.1Z"/>
<path class="g53" d="M601.3,540.5 603.8,543.1 602.9,546.5 600.4,543.8Z"/>
<path class="g46" d="M600.4,543.8 602.9,546.5 601.9,549.8 599.6,547.2Z"/>
<path class="g38" d="M599.6,547.2 601.9,549.8 601.0,553.1 598.7,550.6Z"/>
<path class="g48" d="M603.8,543.1 606.3,545.8 605.3,549.1 602.9,546.5Z"/>
<path class="g40" d="M602.9,546.5 605.3,549.1 604.3,552.3 601.9,549.8Z"/>
<path class="g32" d="M601.9,549.8 604.3,552.3 603.3,555.6 601.0,553.1Z"/>
<path class="w" d="M598.8,537.8 606.3,545.8 603.3,555.6 596.4,548.1Z"/>
<path class="g57" d="M488.1,537.6 492.0,533.1 495.4,532.8 491.7,537.1Z"/>
<path class="g62" d="M491.7,537.1 495.4,532.8 498.7,532.4 495.2,536.5Z"/>
<path class="g66" d="M495.2,536.5 498.7,532.4 502.1,532.1 498.8,535.9Z"/>
<path class="g54" d="M492.0,533.1 495.9,528.6 499.0,528.5 495.4,532.8Z"/>
<path class="g61" d="M495.4,532.8 499.0,528.5 502.2,528.4 498.7,532.4Z"/>
<path class="g66" d="M498.7,532.4 502.2,528.4 505.4,528.3 502.1,532.1Z"/>
<path class="g52" d="M495.9,528.6 499.7,524.2 502.7,524.3 499.0,528.5Z"/>
<path class="g59" d="M499.0,528.5 502.7,524.3 505.6,524.4 502.2,528.4Z"/>
<path class="g65" d="M502.2,528.4 505.6,524.4 508.6,524.5 505.4,528.3Z"/>
<path class="w" d="M488.1,537.6 499.7,524.2 508.6,524.5 498.8,535.9Z"/>
<path class="g54" d="M517.7,547.1 520.0,544.3 521.0,547.6 518.8,550.3Z"/>
<path class="g47" d="M518.8,550.3 521.0,547.6 521.9,550.9 519.8,553.6Z"/>
<path class="g39" d="M519.8,553.6 521.9,550.9 522.9,554.2 520.8,556.8Z"/>
<path class="g59" d="M520.0,544.3 522.2,541.6 523.2,545.0 521.0,547.6Z"/>
<path class="g53" d="M521.0,547.6 523.2,545.0 524.1,548.3 521.9,550.9Z"/>
<path class="g45" d="M521.9,550.9 524.1,548.3 525.0,551.7 522.9,554.2Z"/>
<path class="g64" d="M522.2,541.6 524.5,538.9 525.3,542.3 523.2,545.0Z"/>
<path class="g58" d="M523.2,545.0 525.3,542.3 526.2,545.7 524.1,548.3Z"/>
<path class="g50" d="M524.1,548.3 526.2,545.7 527.1,549.1 525.0,551.7Z"/>
<path class="w" d="M517.7,547.1 524.5,538.9 527.1,549.1 520.8,556.8Z"/>
<path class="g69" d="M614.1,523.0 617.7,526.7 614.5,528.4 611.2,524.9Z"/>
<path class="g71" d="M611.2,524.9 614.5,528.4 611.4,530.0 608.2,526.8Z"/>
<path class="g72" d="M608.2,526.8 611.4,530.0 608.3,531.7 605.3,528.6Z"/>
<path class="g69" d="M617.7,526.7 621.3,530.4 617.9,531.9 614.5,528.4Z"/>
<path class="g70" d="M614.5,528.4 617.9,531.9 614.6,533.3 611.4,530.0Z"/>
<path class="g69" d="M611.4,530.0 614.6,533.3 611.2,534.8 608.3,531.7Z"/>
<path class="g68" d="M621.3,530.4 624.9,534.1 621.4,535.4 617.9,531.9Z"/>
<path class="g68" d="M617.9,531.9 621.4,535.4 617.8,536.7 614.6,533.3Z"/>
<path class="g67" d="M614.6,533.3 617.8,536.7 614.2,537.9 611.2,534.8Z"/>
<path class="w" d="M614.1,523.0 624.9,534.1 614.2,537.9 605.3,528.6Z"/>
<path class="g71" d="M605.3,528.6 608.3,531.7 606.0,534.6 603.2,531.7Z"/>
<path class="g68" d="M603.2,531.7 606.0,534.6 603.6,537.6 601.0,534.8Z"/>
<path class="g64" d="M601.0,534.8 603.6,537.6 601.3,540.5 598.8,537.8Z"/>
<path class="g68" d="M608.3,531.7 611.2,534.8 608.8,537.6 606.0,534.6Z"/>
<path class="g64" d="M606.0,534.6 608.8,537.6 606.3,540.4 603.6,537.6Z"/>
<path class="g59" d="M603.6,537.6 606.3,540.4 603.8,543.1 601.3,540.5Z"/>
<path class="g64" d="M611.2,534.8 614.2,537.9 611.6,540.6 608.8,537.6Z"/>
<path class="g60" d="M608.8,537.6 611.6,540.6 609.0,543.2 606.3,540.4Z"/>
<path class="g54" d="M606.3,540.4 609.0,543.2 606.3,545.8 603.8,543.1Z"/>
<path class="w" d="M605.3,528.6 614.2,537.9 606.3,545.8 598.8,537.8Z"/>
<path class="g69" d="M498.8,535.9 502.1,532.1 505.5,533.5 502.4,537.1Z"/>
<path class="g70" d="M502.4,537.1 505.5,533.5 508.9,534.8 506.0,538.3Z"/>
<path class="g70" d="M506.0,538.3 508.9,534.8 512.4,536.2 509.7,539.4Z"/>
<path class="g69" d="M502.1,532.1 505.4,528.3 508.6,529.9 505.5,533.5Z"/>
<path class="g72" d="M505.5,533.5 508.6,529.9 511.8,531.5 508.9,534.8Z"/>
<path class="g72" d="M508.9,534.8 511.8,531.5 515.0,533.0 512.4,536.2Z"/>
<path class="g70" d="M505.4,528.3 508.6,524.5 511.6,526.3 508.6,529.9Z"/>
<path class="g73" d="M508.6,529.9 511.6,526.3 514.7,528.1 511.8,531.5Z"/>
<path class="g75" d="M511.8,531.5 514.7,528.1 517.7,529.9 515.0,533.0Z"/>
<path class="w" d="M498.8,535.9 508.6,524.5 517.7,529.9 509.7,539.4Z"/>
<path class="g68" d="M509.7,539.4 512.4,536.2 514.9,538.9 512.4,542.0Z"/>
<path class="g65" d="M512.4,542.0 514.9,538.9 517.4,541.6 515.0,544.5Z"/>
<path class="g60" d="M515.0,544.5 517.4,541.6 520.0,544.3 517.7,547.1Z"/>
<path class="g71" d="M512.4,536.2 515.0,533.0 517.4,535.9 514.9,538.9Z"/>
<path class="g69" d="M514.9,538.9 517.4,535.9 519.8,538.8 517.4,541.6Z"/>
<path class="g65" d="M517.4,541.6 519.8,538.8 522.2,541.6 520.0,544.3Z"/>
<path class="g75" d="M515.0,533.0 517.7,529.9 519.9,532.9 517.4,535.9Z"/>
<path class="g73" d="M517.4,535.9 519.9,532.9 522.2,535.9 519.8,538.8Z"/>
<path class="g69" d="M519.8,538.8 522.2,535.9 524.5,538.9 522.2,541.6Z"/>
<path class="w" d="M509.7,539.4 517.7,529.9 524.5,538.9 517.7,547.1Z"/>
<path class="g22" d="M645.6,550.7 646.4,556.3 645.5,553.2 644.7,547.7Z"/>
<path class="g30" d="M644.7,547.7 645.5,553.2 644.7,550.1 643.9,544.6Z"/>
<path class="g38" d="M643.9,544.6 644.7,550.1 643.8,547.0 643.0,541.6Z"/>
<path class="g28" d="M646.4,556.3 647.3,562.0 646.4,558.8 645.5,553.2Z"/>
<path class="g36" d="M645.5,553.2 646.4,558.8 645.5,555.6 644.7,550.1Z"/>
<path class="g44" d="M644.7,550.1 645.5,555.6 644.6,552.4 643.8,547.0Z"/>
<path class="g34" d="M647.3,562.0 648.1,567.8 647.2,564.5 646.4,558.8Z"/>
<path class="g42" d="M646.4,558.8 647.2,564.5 646.3,561.2 645.5,555.6Z"/>
<path class="g49" d="M645.5,555.6 646.3,561.2 645.5,557.9 644.6,552.4Z"/>
<path class="w" d="M645.6,550.7 648.1,567.8 645.5,557.9 643.0,541.6Z"/>
<path class="g42" d="M606.3,545.8 606.6,548.7 605.6,552.0 605.3,549.1Z"/>
<path class="g35" d="M605.3,549.1 605.6,552.0 604.6,555.2 604.3,552.3Z"/>
<path class="g26" d="M604.3,552.3 604.6,555.2 603.6,558.4 603.3,555.6Z"/>
<path class="g37" d="M606.6,548.7 606.9,551.7 605.9,554.9 605.6,552.0Z"/>
<path class="g29" d="M605.6,552.0 605.9,554.9 604.9,558.0 604.6,555.2Z"/>
<path class="g20" d="M604.6,555.2 604.9,558.0 603.9,561.2 603.6,558.4Z"/>
<path class="g32" d="M606.9,551.7 607.2,554.7 606.2,557.8 605.9,554.9Z"/>
<path class="g23" d="M605.9,554.9 606.2,557.8 605.2,560.9 604.9,558.0Z"/>
<path class="g20" d="M604.9,558.0 605.2,560.9 604.2,564.0 603.9,561.2Z"/>
<path class="w" d="M606.3,545.8 607.2,554.7 604.2,564.0 603.3,555.6Z"/>
<path class="g26" d="M477.1,570.3 477.4,564.5 478.2,561.3 477.9,567.0Z"/>
<path class="g35" d="M477.9,567.0 478.2,561.3 479.1,558.1 478.8,563.7Z"/>
<path class="g42" d="M478.8,563.7 479.1,558.1 479.9,554.8 479.7,560.4Z"/>
<path class="g20" d="M477.4,564.5 477.7,558.8 478.5,555.6 478.2,561.3Z"/>
<path class="g29" d="M478.2,561.3 478.5,555.6 479.4,552.5 479.1,558.1Z"/>
<path class="g37" d="M479.1,558.1 479.4,552.5 480.2,549.3 479.9,554.8Z"/>
<path class="g20" d="M477.7,558.8 478.0,553.1 478.8,550.1 478.5,555.6Z"/>
<path class="g23" d="M478.5,555.6 478.8,550.1 479.7,547.0 479.4,552.5Z"/>
<path class="g32" d="M479.4,552.5 479.7,547.0 480.5,543.9 480.2,549.3Z"/>
<path class="w" d="M477.1,570.3 478.0,553.1 480.5,543.9 479.7,560.4Z"/>
<path class="g38" d="M517.7,556.0 517.7,553.0 518.7,556.1 518.7,559.1Z"/>
<path class="g30" d="M518.7,559.1 518.7,556.1 519.8,559.3 519.8,562.2Z"/>
<path class="g22" d="M519.8,562.2 519.8,559.3 520.8,562.4 520.8,565.2Z"/>
<path class="g44" d="M517.7,553.0 517.7,550.0 518.7,553.2 518.7,556.1Z"/>
<path class="g36" d="M518.7,556.1 518.7,553.2 519.8,556.4 519.8,559.3Z"/>
<path class="g28" d="M519.8,559.3 519.8,556.4 520.8,559.6 520.8,562.4Z"/>
<path class="g49" d="M517.7,550.0 517.7,547.1 518.8,550.3 518.7,553.2Z"/>
<path class="g42" d="M518.7,553.2 518.8,550.3 519.8,553.6 519.8,556.4Z"/>
<path class="g34" d="M519.8,556.4 519.8,553.6 520.8,556.8 520.8,559.6Z"/>
<path class="w" d="M517.7,556.0 517.7,547.1 520.8,556.8 520.8,565.2Z"/>
<path class="g45" d="M643.0,541.6 643.8,547.0 641.3,544.8 640.5,539.5Z"/>
<path class="g52" d="M640.5,539.5 641.3,544.8 638.7,542.6 638.0,537.5Z"/>
<path class="g58" d="M638.0,537.5 638.7,542.6 636.2,540.3 635.5,535.5Z"/>
<path class="g51" d="M643.8,547.0 644.6,552.4 642.0,550.0 641.3,544.8Z"/>
<path class="g57" d="M641.3,544.8 642.0,550.0 639.5,547.6 638.7,542.6Z"/>
<path class="g61" d="M638.7,542.6 639.5,547.6 636.9,545.2 636.2,540.3Z"/>
<path class="g55" d="M644.6,552.4 645.5,557.9 642.8,555.4 642.0,550.0Z"/>
<path class="g61" d="M642.0,550.0 642.8,555.4 640.2,552.8 639.5,547.6Z"/>
<path class="g65" d="M639.5,547.6 640.2,552.8 637.5,550.2 636.9,545.2Z"/>
<path class="w" d="M643.0,541.6 645.5,557.9 637.5,550.2 635.5,535.5Z"/>
<path class="g60" d="M614.2,537.9 614.6,541.4 612.0,543.8 611.6,540.6Z"/>
<path class="g55" d="M611.6,540.6 612.0,543.8 609.3,546.3 609.0,543.2Z"/>
<path class="g49" d="M609.0,543.2 609.3,546.3 606.6,548.7 606.3,545.8Z"/>
<path class="g57" d="M614.6,541.4 615.0,544.8 612.3,547.1 612.0,543.8Z"/>
<path class="g51" d="M612.0,543.8 612.3,547.1 609.6,549.4 609.3,546.3Z"/>
<path class="g44" d="M609.3,546.3 609.6,549.4 606.9,551.7 606.6,548.7Z"/>
<path class="g54" d="M615.0,544.8 615.4,548.3 612.7,550.5 612.3,547.1Z"/>
<path class="g47" d="M612.3,547.1 612.7,550.5 610.0,552.6 609.6,549.4Z"/>
<path class="g39" d="M609.6,549.4 610.0,552.6 607.2,554.7 606.9,551.7Z"/>
<path class="w" d="M614.2,537.9 615.4,548.3 607.2,554.7 606.3,545.8Z"/>
<path class="g49" d="M479.7,560.4 479.9,554.8 482.5,552.4 482.3,557.7Z"/>
<path class="g55" d="M482.3,557.7 482.5,552.4 485.1,549.9 484.9,555.1Z"/>
<path class="g60" d="M484.9,555.1 485.1,549.9 487.7,547.4 487.5,552.4Z"/>
<path class="g44" d="M479.9,554.8 480.2,549.3 482.8,547.1 482.5,552.4Z"/>
<path class="g51" d="M482.5,552.4 482.8,547.1 485.3,544.8 485.1,549.9Z"/>
<path class="g57" d="M485.1,549.9 485.3,544.8 487.9,542.5 487.7,547.4Z"/>
<path class="g39" d="M480.2,549.3 480.5,543.9 483.0,541.8 482.8,547.1Z"/>
<path class="g47" d="M482.8,547.1 483.0,541.8 485.6,539.7 485.3,544.8Z"/>
<path class="g54" d="M485.3,544.8 485.6,539.7 488.1,537.6 487.9,542.5Z"/>
<path class="w" d="M479.7,560.4 480.5,543.9 488.1,537.6 487.5,552.4Z"/>
<path class="g62" d="M635.5,535.5 636.2,540.3 632.6,539.7 632.0,535.0Z"/>
<path class="g65" d="M632.0,535.0 632.6,539.7 629.0,539.0 628.5,534.6Z"/>
<path class="g67" d="M628.5,534.6 629.0,539.0 625.5,538.3 624.9,534.1Z"/>
<path class="g65" d="M636.2,540.3 636.9,545.2 633.2,544.3 632.6,539.7Z"/>
<path class="g67" d="M632.6,539.7 633.2,544.3 629.6,543.4 629.0,539.0Z"/>
<path class="g68" d="M629.0,539.0 629.6,543.4 626.0,542.5 625.5,538.3Z"/>
<path class="g67" d="M636.9,545.2 637.5,550.2 633.9,549.0 633.2,544.3Z"/>
<path class="g69" d="M633.2,544.3 633.9,549.0 630.2,547.9 629.6,543.4Z"/>
<path class="g68" d="M629.6,543.4 630.2,547.9 626.5,546.7 626.0,542.5Z"/>
<path class="w" d="M635.5,535.5 637.5,550.2 626.5,546.7 624.9,534.1Z"/>
<path class="g58" d="M509.5,549.9 509.6,546.4 512.3,548.6 512.2,551.9Z"/>
<path class="g52" d="M512.2,551.9 512.3,548.6 515.0,550.8 515.0,554.0Z"/>
<path class="g45" d="M515.0,554.0 515.0,550.8 517.7,553.0 517.7,556.0Z"/>
<path class="g61" d="M509.6,546.4 509.6,542.9 512.3,545.3 512.3,548.6Z"/>
<path class="g57" d="M512.3,548.6 512.3,545.3 515.0,547.7 515.0,550.8Z"/>
<path class="g51" d="M515.0,550.8 515.0,547.7 517.7,550.0 517.7,553.0Z"/>
<path class="g65" d="M509.6,542.9 509.7,539.4 512.4,542.0 512.3,545.3Z"/>
<path class="g61" d="M512.3,545.3 512.4,542.0 515.0,544.5 515.0,547.7Z"/>
<path class="g55" d="M515.0,547.7 515.0,544.5 517.7,547.1 517.7,550.0Z"/>
<path class="w" d="M509.5,549.9 509.7,539.4 517.7,547.1 517.7,556.0Z"/>
<path class="g68" d="M624.9,534.1 625.5,538.3 621.9,539.3 621.4,535.4Z"/>
<path class="g67" d="M621.4,535.4 621.9,539.3 618.2,540.3 617.8,536.7Z"/>
<path class="g64" d="M617.8,536.7 618.2,540.3 614.6,541.4 614.2,537.9Z"/>
<path class="g67" d="M625.5,538.3 626.0,542.5 622.3,543.3 621.9,539.3Z"/>
<path class="g65" d="M621.9,539.3 622.3,543.3 618.7,544.1 618.2,540.3Z"/>
<path class="g62" d="M618.2,540.3 618.7,544.1 615.0,544.8 614.6,541.4Z"/>
<path class="g67" d="M626.0,542.5 626.5,546.7 622.8,547.2 622.3,543.3Z"/>
<path class="g63" d="M622.3,543.3 622.8,547.2 619.1,547.8 618.7,544.1Z"/>
<path class="g59" d="M618.7,544.1 619.1,547.8 615.4,548.3 615.0,544.8Z"/>
<path class="w" d="M624.9,534.1 626.5,546.7 615.4,548.3 614.2,537.9Z"/>
<path class="g64" d="M487.5,552.4 487.7,547.4 491.3,546.4 491.1,551.1Z"/>
<path class="g67" d="M491.1,551.1 491.3,546.4 494.9,545.3 494.8,549.8Z"/>
<path class="g68" d="M494.8,549.8 494.9,545.3 498.6,544.3 498.4,548.5Z"/>
<path class="g62" d="M487.7,547.4 487.9,542.5 491.5,541.7 491.3,546.4Z"/>
<path class="g65" d="M491.3,546.4 491.5,541.7 495.1,540.9 494.9,545.3Z"/>
<path class="g67" d="M494.9,545.3 495.1,540.9 498.7,540.1 498.6,544.3Z"/>
<path class="g59" d="M487.9,542.5 488.1,537.6 491.7,537.1 491.5,541.7Z"/>
<path class="g63" d="M491.5,541.7 491.7,537.1 495.2,536.5 495.1,540.9Z"/>
<path class="g67" d="M495.1,540.9 495.2,536.5 498.8,535.9 498.7,540.1Z"/>
<path class="w" d="M487.5,552.4 488.1,537.6 498.8,535.9 498.4,548.5Z"/>
<path class="g67" d="M498.4,548.5 498.6,544.3 502.2,545.0 502.1,549.0Z"/>
<path class="g65" d="M502.1,549.0 502.2,545.0 505.9,545.7 505.8,549.4Z"/>
<path class="g62" d="M505.8,549.4 505.9,545.7 509.6,546.4 509.5,549.9Z"/>
<path class="g68" d="M498.6,544.3 498.7,540.1 502.3,541.0 502.2,545.0Z"/>
<path class="g67" d="M502.2,545.0 502.3,541.0 506.0,542.0 505.9,545.7Z"/>
<path class="g65" d="M505.9,545.7 506.0,542.0 509.6,542.9 509.6,546.4Z"/>
<path class="g68" d="M498.7,540.1 498.8,535.9 502.4,537.1 502.3,541.0Z"/>
<path class="g69" d="M502.3,541.0 502.4,537.1 506.0,538.3 506.0,542.0Z"/>
<path class="g67" d="M506.0,542.0 506.0,538.3 509.7,539.4 509.6,542.9Z"/>
<path class="w" d="M498.4,548.5 498.8,535.9 509.7,539.4 509.5,549.9Z"/>
<path class="g20" d="M644.9,577.0 641.4,582.3 642.5,579.3 645.9,573.9Z"/>
<path class="g22" d="M645.9,573.9 642.5,579.3 643.5,576.3 647.0,570.9Z"/>
<path class="g31" d="M647.0,570.9 643.5,576.3 644.6,573.2 648.1,567.8Z"/>
<path class="g20" d="M641.4,582.3 637.9,587.7 639.0,584.7 642.5,579.3Z"/>
<path class="g28" d="M642.5,579.3 639.0,584.7 640.0,581.8 643.5,576.3Z"/>
<path class="g37" d="M643.5,576.3 640.0,581.8 641.0,578.8 644.6,573.2Z"/>
<path class="g23" d="M637.9,587.7 634.4,593.2 635.4,590.2 639.0,584.7Z"/>
<path class="g33" d="M639.0,584.7 635.4,590.2 636.4,587.3 640.0,581.8Z"/>
<path class="g42" d="M640.0,581.8 636.4,587.3 637.3,584.4 641.0,578.8Z"/>
<path class="w" d="M644.9,577.0 634.4,593.2 637.3,584.4 648.1,567.8Z"/>
<path class="g50" d="M615.4,548.3 613.1,551.6 610.5,553.6 612.7,550.5Z"/>
<path class="g43" d="M612.7,550.5 610.5,553.6 607.9,555.6 610.0,552.6Z"/>
<path class="g35" d="M610.0,552.6 607.9,555.6 605.2,557.5 607.2,554.7Z"/>
<path class="g47" d="M613.1,551.6 610.7,555.0 608.2,556.8 610.5,553.6Z"/>
<path class="g39" d="M610.5,553.6 608.2,556.8 605.7,558.6 607.9,555.6Z"/>
<path class="g30" d="M607.9,555.6 605.7,558.6 603.2,560.3 605.2,557.5Z"/>
<path class="g44" d="M610.7,555.0 608.4,558.3 606.0,560.0 608.2,556.8Z"/>
<path class="g35" d="M608.2,556.8 606.0,560.0 603.6,561.6 605.7,558.6Z"/>
<path class="g26" d="M605.7,558.6 603.6,561.6 601.2,563.2 603.2,560.3Z"/>
<path class="w" d="M615.4,548.3 608.4,558.3 601.2,563.2 607.2,554.7Z"/>
<path class="g48" d="M517.5,559.7 514.8,556.4 517.3,558.1 519.9,561.2Z"/>
<path class="g40" d="M519.9,561.2 517.3,558.1 519.8,559.8 522.2,562.8Z"/>
<path class="g31" d="M522.2,562.8 519.8,559.8 522.2,561.5 524.5,564.3Z"/>
<path class="g51" d="M514.8,556.4 512.2,553.1 514.8,555.0 517.3,558.1Z"/>
<path class="g44" d="M517.3,558.1 514.8,555.0 517.4,556.9 519.8,559.8Z"/>
<path class="g36" d="M519.8,559.8 517.4,556.9 519.9,558.8 522.2,561.5Z"/>
<path class="g54" d="M512.2,553.1 509.5,549.9 512.2,551.9 514.8,555.0Z"/>
<path class="g48" d="M514.8,555.0 512.2,551.9 515.0,554.0 517.4,556.9Z"/>
<path class="g41" d="M517.4,556.9 515.0,554.0 517.7,556.0 519.9,558.8Z"/>
<path class="w" d="M517.5,559.7 509.5,549.9 517.7,556.0 524.5,564.3Z"/>
<path class="g20" d="M492.4,595.3 488.3,590.0 487.3,587.0 491.4,592.4Z"/>
<path class="g27" d="M491.4,592.4 487.3,587.0 486.3,584.1 490.5,589.5Z"/>
<path class="g36" d="M490.5,589.5 486.3,584.1 485.3,581.1 489.5,586.6Z"/>
<path class="g20" d="M488.3,590.0 484.3,584.7 483.3,581.7 487.3,587.0Z"/>
<path class="g21" d="M487.3,587.0 483.3,581.7 482.2,578.7 486.3,584.1Z"/>
<path class="g30" d="M486.3,584.1 482.2,578.7 481.2,575.7 485.3,581.1Z"/>
<path class="g20" d="M484.3,584.7 480.4,579.5 479.3,576.4 483.3,581.7Z"/>
<path class="g20" d="M483.3,581.7 479.3,576.4 478.2,573.4 482.2,578.7Z"/>
<path class="g24" d="M482.2,578.7 478.2,573.4 477.1,570.3 481.2,575.7Z"/>
<path class="w" d="M492.4,595.3 480.4,579.5 477.1,570.3 489.5,586.6Z"/>
<path class="g39" d="M648.1,567.8 644.6,573.2 643.7,569.9 647.2,564.5Z"/>
<path class="g47" d="M647.2,564.5 643.7,569.9 642.9,566.5 646.3,561.2Z"/>
<path class="g54" d="M646.3,561.2 642.9,566.5 642.0,563.2 645.5,557.9Z"/>
<path class="g45" d="M644.6,573.2 641.0,578.8 640.1,575.4 643.7,569.9Z"/>
<path class="g53" d="M643.7,569.9 640.1,575.4 639.3,571.9 642.9,566.5Z"/>
<path class="g59" d="M642.9,566.5 639.3,571.9 638.5,568.5 642.0,563.2Z"/>
<path class="g50" d="M641.0,578.8 637.3,584.4 636.5,580.9 640.1,575.4Z"/>
<path class="g58" d="M640.1,575.4 636.5,580.9 635.7,577.4 639.3,571.9Z"/>
<path class="g64" d="M639.3,571.9 635.7,577.4 634.9,573.9 638.5,568.5Z"/>
<path class="w" d="M648.1,567.8 637.3,584.4 634.9,573.9 645.5,557.9Z"/>
<path class="g66" d="M626.5,546.7 623.8,550.7 620.2,551.0 622.8,547.2Z"/>
<path class="g62" d="M622.8,547.2 620.2,551.0 616.6,551.3 619.1,547.8Z"/>
<path class="g57" d="M619.1,547.8 616.6,551.3 613.1,551.6 615.4,548.3Z"/>
<path class="g66" d="M623.8,550.7 621.0,554.7 617.6,554.8 620.2,551.0Z"/>
<path class="g61" d="M620.2,551.0 617.6,554.8 614.2,554.9 616.6,551.3Z"/>
<path class="g54" d="M616.6,551.3 614.2,554.9 610.7,555.0 613.1,551.6Z"/>
<path class="g65" d="M621.0,554.7 618.2,558.8 614.9,558.6 617.6,554.8Z"/>
<path class="g59" d="M617.6,554.8 614.9,558.6 611.6,558.5 614.2,554.9Z"/>
<path class="g52" d="M614.2,554.9 611.6,558.5 608.4,558.3 610.7,555.0Z"/>
<path class="w" d="M626.5,546.7 618.2,558.8 608.4,558.3 615.4,548.3Z"/>
<path class="g66" d="M508.0,560.4 504.8,556.4 508.1,556.4 511.2,560.2Z"/>
<path class="g61" d="M511.2,560.2 508.1,556.4 511.5,556.4 514.4,559.9Z"/>
<path class="g55" d="M514.4,559.9 511.5,556.4 514.8,556.4 517.5,559.7Z"/>
<path class="g66" d="M504.8,556.4 501.6,552.5 505.1,552.7 508.1,556.4Z"/>
<path class="g62" d="M508.1,556.4 505.1,552.7 508.6,552.9 511.5,556.4Z"/>
<path class="g57" d="M511.5,556.4 508.6,552.9 512.2,553.1 514.8,556.4Z"/>
<path class="g67" d="M501.6,552.5 498.4,548.5 502.1,549.0 505.1,552.7Z"/>
<path class="g64" d="M505.1,552.7 502.1,549.0 505.8,549.4 508.6,552.9Z"/>
<path class="g60" d="M508.6,552.9 505.8,549.4 509.5,549.9 512.2,553.1Z"/>
<path class="w" d="M508.0,560.4 498.4,548.5 509.5,549.9 517.5,559.7Z"/>
<path class="g44" d="M489.5,586.6 485.3,581.1 486.1,577.7 490.2,583.1Z"/>
<path class="g51" d="M490.2,583.1 486.1,577.7 486.9,574.2 491.0,579.6Z"/>
<path class="g58" d="M491.0,579.6 486.9,574.2 487.7,570.7 491.7,576.0Z"/>
<path class="g38" d="M485.3,581.1 481.2,575.7 482.0,572.3 486.1,577.7Z"/>
<path class="g46" d="M486.1,577.7 482.0,572.3 482.8,568.9 486.9,574.2Z"/>
<path class="g53" d="M486.9,574.2 482.8,568.9 483.6,565.5 487.7,570.7Z"/>
<path class="g32" d="M481.2,575.7 477.1,570.3 477.9,567.0 482.0,572.3Z"/>
<path class="g40" d="M482.0,572.3 477.9,567.0 478.8,563.7 482.8,568.9Z"/>
<path class="g48" d="M482.8,568.9 478.8,563.7 479.7,560.4 483.6,565.5Z"/>
<path class="w" d="M489.5,586.6 477.1,570.3 479.7,560.4 491.7,576.0Z"/>
<path class="g60" d="M645.5,557.9 642.0,563.2 639.5,560.4 642.8,555.4Z"/>
<path class="g65" d="M642.8,555.4 639.5,560.4 636.9,557.7 640.2,552.8Z"/>
<path class="g68" d="M640.2,552.8 636.9,557.7 634.4,554.9 637.5,550.2Z"/>
<path class="g65" d="M642.0,563.2 638.5,568.5 636.0,565.6 639.5,560.4Z"/>
<path class="g69" d="M639.5,560.4 636.0,565.6 633.6,562.6 636.9,557.7Z"/>
<path class="g71" d="M636.9,557.7 633.6,562.6 631.2,559.7 634.4,554.9Z"/>
<path class="g69" d="M638.5,568.5 634.9,573.9 632.6,570.7 636.0,565.6Z"/>
<path class="g73" d="M636.0,565.6 632.6,570.7 630.3,567.6 633.6,562.6Z"/>
<path class="g75" d="M633.6,562.6 630.3,567.6 627.9,564.5 631.2,559.7Z"/>
<path class="w" d="M645.5,557.9 634.9,573.9 627.9,564.5 637.5,550.2Z"/>
<path class="g70" d="M637.5,550.2 634.4,554.9 630.8,553.5 633.9,549.0Z"/>
<path class="g70" d="M633.9,549.0 630.8,553.5 627.3,552.1 630.2,547.9Z"/>
<path class="g69" d="M630.2,547.9 627.3,552.1 623.8,550.7 626.5,546.7Z"/>
<path class="g72" d="M634.4,554.9 631.2,559.7 627.8,558.0 630.8,553.5Z"/>
<path class="g72" d="M630.8,553.5 627.8,558.0 624.4,556.4 627.3,552.1Z"/>
<path class="g69" d="M627.3,552.1 624.4,556.4 621.0,554.7 623.8,550.7Z"/>
<path class="g75" d="M631.2,559.7 627.9,564.5 624.7,562.6 627.8,558.0Z"/>
<path class="g73" d="M627.8,558.0 624.7,562.6 621.4,560.7 624.4,556.4Z"/>
<path class="g70" d="M624.4,556.4 621.4,560.7 618.2,558.8 621.0,554.7Z"/>
<path class="w" d="M637.5,550.2 627.9,564.5 618.2,558.8 626.5,546.7Z"/>
<path class="g72" d="M498.5,566.4 494.8,561.7 498.1,559.9 501.7,564.4Z"/>
<path class="g71" d="M501.7,564.4 498.1,559.9 501.5,558.2 504.9,562.4Z"/>
<path class="g69" d="M504.9,562.4 501.5,558.2 504.8,556.4 508.0,560.4Z"/>
<path class="g69" d="M494.8,561.7 491.1,557.0 494.6,555.5 498.1,559.9Z"/>
<path class="g70" d="M498.1,559.9 494.6,555.5 498.1,554.0 501.5,558.2Z"/>
<path class="g69" d="M501.5,558.2 498.1,554.0 501.6,552.5 504.8,556.4Z"/>
<path class="g67" d="M491.1,557.0 487.5,552.4 491.1,551.1 494.6,555.5Z"/>
<path class="g68" d="M494.6,555.5 491.1,551.1 494.8,549.8 498.1,554.0Z"/>
<path class="g68" d="M498.1,554.0 494.8,549.8 498.4,548.5 501.6,552.5Z"/>
<path class="w" d="M498.5,566.4 487.5,552.4 498.4,548.5 508.0,560.4Z"/>
<path class="g64" d="M491.7,576.0 487.7,570.7 490.0,567.7 494.0,572.8Z"/>
<path class="g68" d="M494.0,572.8 490.0,567.7 492.4,564.7 496.3,569.6Z"/>
<path class="g71" d="M496.3,569.6 492.4,564.7 494.8,561.7 498.5,566.4Z"/>
<path class="g59" d="M487.7,570.7 483.6,565.5 486.1,562.7 490.0,567.7Z"/>
<path class="g64" d="M490.0,567.7 486.1,562.7 488.6,559.9 492.4,564.7Z"/>
<path class="g67" d="M492.4,564.7 488.6,559.9 491.1,557.0 494.8,561.7Z"/>
<path class="g54" d="M483.6,565.5 479.7,560.4 482.3,557.7 486.1,562.7Z"/>
<path class="g60" d="M486.1,562.7 482.3,557.7 484.9,555.1 488.6,559.9Z"/>
<path class="g64" d="M488.6,559.9 484.9,555.1 487.5,552.4 491.1,557.0Z"/>
<path class="w" d="M491.7,576.0 479.7,560.4 487.5,552.4 498.5,566.4Z"/>
<path class="g20" d="M627.1,597.8 620.5,601.7 622.7,600.3 629.5,596.3Z"/>
<path class="g20" d="M629.5,596.3 622.7,600.3 624.9,598.9 632.0,594.7Z"/>
<path class="g20" d="M632.0,594.7 624.9,598.9 627.1,597.5 634.4,593.2Z"/>
<path class="g20" d="M620.5,601.7 613.8,605.6 615.8,604.3 622.7,600.3Z"/>
<path class="g20" d="M622.7,600.3 615.8,604.3 617.7,603.1 624.9,598.9Z"/>
<path class="g21" d="M624.9,598.9 617.7,603.1 619.7,601.8 627.1,597.5Z"/>
<path class="g20" d="M613.8,605.6 607.1,609.5 608.8,608.4 615.8,604.3Z"/>
<path class="g20" d="M615.8,604.3 608.8,608.4 610.5,607.3 617.7,603.1Z"/>
<path class="g24" d="M617.7,603.1 610.5,607.3 612.2,606.2 619.7,601.8Z"/>
<path class="w" d="M627.1,597.8 607.1,609.5 612.2,606.2 634.4,593.2Z"/>
<path class="g20" d="M520.7,610.9 513.6,607.2 511.7,605.9 519.1,609.8Z"/>
<path class="g20" d="M519.1,609.8 511.7,605.9 509.9,604.7 517.5,608.7Z"/>
<path class="g20" d="M517.5,608.7 509.9,604.7 508.0,603.5 515.9,607.7Z"/>
<path class="g20" d="M513.6,607.2 506.5,603.5 504.4,602.1 511.7,605.9Z"/>
<path class="g20" d="M511.7,605.9 504.4,602.1 502.3,600.8 509.9,604.7Z"/>
<path class="g20" d="M509.9,604.7 502.3,600.8 500.1,599.4 508.0,603.5Z"/>
<path class="g20" d="M506.5,603.5 499.5,599.8 497.1,598.3 504.4,602.1Z"/>
<path class="g20" d="M504.4,602.1 497.1,598.3 494.8,596.8 502.3,600.8Z"/>
<path class="g20" d="M502.3,600.8 494.8,596.8 492.4,595.3 500.1,599.4Z"/>
<path class="w" d="M520.7,610.9 499.5,599.8 492.4,595.3 515.9,607.7Z"/>
<path class="g65" d="M618.2,558.8 612.4,562.0 609.5,561.6 614.9,558.6Z"/>
<path class="g58" d="M614.9,558.6 609.5,561.6 606.5,561.3 611.6,558.5Z"/>
<path class="g50" d="M611.6,558.5 606.5,561.3 603.6,561.0 608.4,558.3Z"/>
<path class="g64" d="M612.4,562.0 606.6,565.2 604.0,564.7 609.5,561.6Z"/>
<path class="g57" d="M609.5,561.6 604.0,564.7 601.4,564.1 606.5,561.3Z"/>
<path class="g49" d="M606.5,561.3 601.4,564.1 598.8,563.6 603.6,561.0Z"/>
<path class="g64" d="M606.6,565.2 600.8,568.4 598.5,567.7 604.0,564.7Z"/>
<path class="g56" d="M604.0,564.7 598.5,567.7 596.2,567.0 601.4,564.1Z"/>
<path class="g47" d="M601.4,564.1 596.2,567.0 594.0,566.3 598.8,563.6Z"/>
<path class="w" d="M618.2,558.8 600.8,568.4 594.0,566.3 608.4,558.3Z"/>
<path class="g27" d="M634.4,593.2 627.1,597.5 628.0,594.6 635.4,590.2Z"/>
<path class="g37" d="M635.4,590.2 628.0,594.6 628.8,591.7 636.4,587.3Z"/>
<path class="g47" d="M636.4,587.3 628.8,591.7 629.7,588.8 637.3,584.4Z"/>
<path class="g31" d="M627.1,597.5 619.7,601.8 620.4,599.0 628.0,594.6Z"/>
<path class="g41" d="M628.0,594.6 620.4,599.0 621.2,596.1 628.8,591.7Z"/>
<path class="g51" d="M628.8,591.7 621.2,596.1 622.0,593.3 629.7,588.8Z"/>
<path class="g34" d="M619.7,601.8 612.2,606.2 612.9,603.4 620.4,599.0Z"/>
<path class="g45" d="M620.4,599.0 612.9,603.4 613.5,600.6 621.2,596.1Z"/>
<path class="g54" d="M621.2,596.1 613.5,600.6 614.2,597.8 622.0,593.3Z"/>
<path class="w" d="M634.4,593.2 612.2,606.2 614.2,597.8 637.3,584.4Z"/>
<path class="g65" d="M526.4,569.5 520.2,566.5 522.7,565.9 528.5,568.8Z"/>
<path class="g57" d="M528.5,568.8 522.7,565.9 525.2,565.3 530.6,568.0Z"/>
<path class="g49" d="M530.6,568.0 525.2,565.3 527.6,564.7 532.7,567.2Z"/>
<path class="g65" d="M520.2,566.5 514.1,563.4 516.9,563.0 522.7,565.9Z"/>
<path class="g58" d="M522.7,565.9 516.9,563.0 519.7,562.6 525.2,565.3Z"/>
<path class="g51" d="M525.2,565.3 519.7,562.6 522.6,562.2 527.6,564.7Z"/>
<path class="g65" d="M514.1,563.4 508.0,560.4 511.2,560.2 516.9,563.0Z"/>
<path class="g60" d="M516.9,563.0 511.2,560.2 514.4,559.9 519.7,562.6Z"/>
<path class="g53" d="M519.7,562.6 514.4,559.9 517.5,559.7 522.6,562.2Z"/>
<path class="w" d="M526.4,569.5 508.0,560.4 517.5,559.7 532.7,567.2Z"/>
<path class="g30" d="M515.9,607.7 508.0,603.5 507.2,600.7 515.2,604.9Z"/>
<path class="g40" d="M515.2,604.9 507.2,600.7 506.5,597.9 514.6,602.1Z"/>
<path class="g50" d="M514.6,602.1 506.5,597.9 505.7,595.1 513.9,599.3Z"/>
<path class="g26" d="M508.0,603.5 500.1,599.4 499.3,596.6 507.2,600.7Z"/>
<path class="g36" d="M507.2,600.7 499.3,596.6 498.4,593.7 506.5,597.9Z"/>
<path class="g45" d="M506.5,597.9 498.4,593.7 497.6,590.8 505.7,595.1Z"/>
<path class="g22" d="M500.1,599.4 492.4,595.3 491.4,592.4 499.3,596.6Z"/>
<path class="g32" d="M499.3,596.6 491.4,592.4 490.5,589.5 498.4,593.7Z"/>
<path class="g41" d="M498.4,593.7 490.5,589.5 489.5,586.6 497.6,590.8Z"/>
<path class="w" d="M515.9,607.7 492.4,595.3 489.5,586.6 513.9,599.3Z"/>
<path class="g77" d="M627.9,564.5 621.2,568.2 618.3,566.1 624.7,562.6Z"/>
<path class="g74" d="M624.7,562.6 618.3,566.1 615.3,564.1 621.4,560.7Z"/>
<path class="g70" d="M621.4,560.7 615.3,564.1 612.4,562.0 618.2,558.8Z"/>
<path class="g80" d="M621.2,568.2 614.4,572.1 611.8,569.8 618.3,566.1Z"/>
<path class="g76" d="M618.3,566.1 611.8,569.8 609.2,567.5 615.3,564.1Z"/>
<path class="g71" d="M615.3,564.1 609.2,567.5 606.6,565.2 612.4,562.0Z"/>
<path class="g82" d="M614.4,572.1 607.6,575.9 605.3,573.4 611.8,569.8Z"/>
<path class="g77" d="M611.8,569.8 605.3,573.4 603.1,570.9 609.2,567.5Z"/>
<path class="g71" d="M609.2,567.5 603.1,570.9 600.8,568.4 606.6,565.2Z"/>
<path class="w" d="M627.9,564.5 607.6,575.9 600.8,568.4 618.2,558.8Z"/>
<path class="g55" d="M637.3,584.4 629.7,588.8 629.0,585.3 636.5,580.9Z"/>
<path class="g62" d="M636.5,580.9 629.0,585.3 628.3,581.7 635.7,577.4Z"/>
<path class="g69" d="M635.7,577.4 628.3,581.7 627.6,578.1 634.9,573.9Z"/>
<path class="g59" d="M629.7,588.8 622.0,593.3 621.4,589.7 629.0,585.3Z"/>
<path class="g67" d="M629.0,585.3 621.4,589.7 620.7,586.0 628.3,581.7Z"/>
<path class="g73" d="M628.3,581.7 620.7,586.0 620.1,582.4 627.6,578.1Z"/>
<path class="g63" d="M622.0,593.3 614.2,597.8 613.7,594.1 621.4,589.7Z"/>
<path class="g71" d="M621.4,589.7 613.7,594.1 613.1,590.4 620.7,586.0Z"/>
<path class="g78" d="M620.7,586.0 613.1,590.4 612.5,586.7 620.1,582.4Z"/>
<path class="w" d="M637.3,584.4 614.2,597.8 612.5,586.7 634.9,573.9Z"/>
<path class="g80" d="M520.0,577.2 512.8,573.6 515.3,571.2 522.1,574.6Z"/>
<path class="g76" d="M522.1,574.6 515.3,571.2 517.7,568.8 524.2,572.1Z"/>
<path class="g71" d="M524.2,572.1 517.7,568.8 520.2,566.5 526.4,569.5Z"/>
<path class="g77" d="M512.8,573.6 505.6,570.0 508.5,567.8 515.3,571.2Z"/>
<path class="g74" d="M515.3,571.2 508.5,567.8 511.3,565.6 517.7,568.8Z"/>
<path class="g70" d="M517.7,568.8 511.3,565.6 514.1,563.4 520.2,566.5Z"/>
<path class="g75" d="M505.6,570.0 498.5,566.4 501.7,564.4 508.5,567.8Z"/>
<path class="g73" d="M508.5,567.8 501.7,564.4 504.9,562.4 511.3,565.6Z"/>
<path class="g70" d="M511.3,565.6 504.9,562.4 508.0,560.4 514.1,563.4Z"/>
<path class="w" d="M520.0,577.2 498.5,566.4 508.0,560.4 526.4,569.5Z"/>
<path class="g20" d="M607.1,609.5 597.9,611.8 599.3,610.7 608.8,608.4Z"/>
<path class="g20" d="M608.8,608.4 599.3,610.7 600.6,609.7 610.5,607.3Z"/>
<path class="g26" d="M610.5,607.3 600.6,609.7 602.0,608.6 612.2,606.2Z"/>
<path class="g20" d="M597.9,611.8 588.7,614.0 589.7,613.1 599.3,610.7Z"/>
<path class="g20" d="M599.3,610.7 589.7,613.1 590.7,612.1 600.6,609.7Z"/>
<path class="g28" d="M600.6,609.7 590.7,612.1 591.8,611.1 602.0,608.6Z"/>
<path class="g20" d="M588.7,614.0 579.5,616.3 580.1,615.4 589.7,613.1Z"/>
<path class="g20" d="M589.7,613.1 580.1,615.4 580.8,614.5 590.7,612.1Z"/>
<path class="g30" d="M590.7,612.1 580.8,614.5 581.5,613.6 591.8,611.1Z"/>
<path class="w" d="M607.1,609.5 579.5,616.3 581.5,613.6 612.2,606.2Z"/>
<path class="g73" d="M634.9,573.9 627.6,578.1 625.4,574.8 632.6,570.7Z"/>
<path class="g77" d="M632.6,570.7 625.4,574.8 623.3,571.5 630.3,567.6Z"/>
<path class="g78" d="M630.3,567.6 623.3,571.5 621.2,568.2 627.9,564.5Z"/>
<path class="g78" d="M627.6,578.1 620.1,582.4 618.2,578.9 625.4,574.8Z"/>
<path class="g81" d="M625.4,574.8 618.2,578.9 616.3,575.5 623.3,571.5Z"/>
<path class="g82" d="M623.3,571.5 616.3,575.5 614.4,572.1 621.2,568.2Z"/>
<path class="g83" d="M620.1,582.4 612.5,586.7 610.9,583.1 618.2,578.9Z"/>
<path class="g86" d="M618.2,578.9 610.9,583.1 609.2,579.5 616.3,575.5Z"/>
<path class="g85" d="M616.3,575.5 609.2,579.5 607.6,575.9 614.4,572.1Z"/>
<path class="w" d="M634.9,573.9 612.5,586.7 607.6,575.9 627.9,564.5Z"/>
<path class="g58" d="M513.9,599.3 505.7,595.1 506.3,591.4 514.5,595.6Z"/>
<path class="g66" d="M514.5,595.6 506.3,591.4 506.9,587.7 515.0,591.9Z"/>
<path class="g73" d="M515.0,591.9 506.9,587.7 507.5,584.1 515.5,588.2Z"/>
<path class="g54" d="M505.7,595.1 497.6,590.8 498.2,587.2 506.3,591.4Z"/>
<path class="g61" d="M506.3,591.4 498.2,587.2 498.9,583.6 506.9,587.7Z"/>
<path class="g68" d="M506.9,587.7 498.9,583.6 499.6,580.0 507.5,584.1Z"/>
<path class="g49" d="M497.6,590.8 489.5,586.6 490.2,583.1 498.2,587.2Z"/>
<path class="g56" d="M498.2,587.2 490.2,583.1 491.0,579.6 498.9,583.6Z"/>
<path class="g63" d="M498.9,583.6 491.0,579.6 491.7,576.0 499.6,580.0Z"/>
<path class="w" d="M513.9,599.3 489.5,586.6 491.7,576.0 515.5,588.2Z"/>
<path class="g20" d="M548.9,616.8 539.5,614.8 538.6,613.9 548.4,615.9Z"/>
<path class="g20" d="M548.4,615.9 538.6,613.9 537.7,612.9 547.9,615.0Z"/>
<path class="g28" d="M547.9,615.0 537.7,612.9 536.8,612.0 547.4,614.2Z"/>
<path class="g20" d="M539.5,614.8 530.1,612.8 528.8,611.8 538.6,613.9Z"/>
<path class="g20" d="M538.6,613.9 528.8,611.8 527.6,610.8 537.7,612.9Z"/>
<path class="g26" d="M537.7,612.9 527.6,610.8 526.3,609.8 536.8,612.0Z"/>
<path class="g20" d="M530.1,612.8 520.7,610.9 519.1,609.8 528.8,611.8Z"/>
<path class="g20" d="M528.8,611.8 519.1,609.8 517.5,608.7 527.6,610.8Z"/>
<path class="g23" d="M527.6,610.8 517.5,608.7 515.9,607.7 526.3,609.8Z"/>
<path class="w" d="M548.9,616.8 520.7,610.9 515.9,607.7 547.4,614.2Z"/>
<path class="g79" d="M515.5,588.2 507.5,584.1 509.3,580.6 517.0,584.5Z"/>
<path class="g82" d="M517.0,584.5 509.3,580.6 511.0,577.1 518.5,580.9Z"/>
<path class="g82" d="M518.5,580.9 511.0,577.1 512.8,573.6 520.0,577.2Z"/>
<path class="g73" d="M507.5,584.1 499.6,580.0 501.6,576.7 509.3,580.6Z"/>
<path class="g77" d="M509.3,580.6 501.6,576.7 503.6,573.3 511.0,577.1Z"/>
<path class="g78" d="M511.0,577.1 503.6,573.3 505.6,570.0 512.8,573.6Z"/>
<path class="g68" d="M499.6,580.0 491.7,576.0 494.0,572.8 501.6,576.7Z"/>
<path class="g72" d="M501.6,576.7 494.0,572.8 496.3,569.6 503.6,573.3Z"/>
<path class="g74" d="M503.6,573.3 496.3,569.6 498.5,566.4 505.6,570.0Z"/>
<path class="w" d="M515.5,588.2 491.7,576.0 498.5,566.4 520.0,577.2Z"/>
<path class="g64" d="M600.8,568.4 592.9,570.3 591.1,569.4 598.5,567.7Z"/>
<path class="g55" d="M598.5,567.7 591.1,569.4 589.3,568.6 596.2,567.0Z"/>
<path class="g46" d="M596.2,567.0 589.3,568.6 587.5,567.8 594.0,566.3Z"/>
<path class="g64" d="M592.9,570.3 585.0,572.1 583.6,571.2 591.1,569.4Z"/>
<path class="g55" d="M591.1,569.4 583.6,571.2 582.3,570.2 589.3,568.6Z"/>
<path class="g45" d="M589.3,568.6 582.3,570.2 580.9,569.3 587.5,567.8Z"/>
<path class="g64" d="M585.0,572.1 577.0,574.0 576.1,572.9 583.6,571.2Z"/>
<path class="g54" d="M583.6,571.2 576.1,572.9 575.2,571.9 582.3,570.2Z"/>
<path class="g44" d="M582.3,570.2 575.2,571.9 574.4,570.8 580.9,569.3Z"/>
<path class="w" d="M600.8,568.4 577.0,574.0 574.4,570.8 594.0,566.3Z"/>
<path class="g64" d="M550.7,574.4 542.6,572.7 543.7,571.8 551.4,573.3Z"/>
<path class="g55" d="M551.4,573.3 543.7,571.8 544.9,570.8 552.1,572.2Z"/>
<path class="g45" d="M552.1,572.2 544.9,570.8 546.1,569.8 552.8,571.1Z"/>
<path class="g64" d="M542.6,572.7 534.4,571.1 536.1,570.3 543.7,571.8Z"/>
<path class="g56" d="M543.7,571.8 536.1,570.3 537.7,569.4 544.9,570.8Z"/>
<path class="g46" d="M544.9,570.8 537.7,569.4 539.4,568.5 546.1,569.8Z"/>
<path class="g64" d="M534.4,571.1 526.4,569.5 528.5,568.8 536.1,570.3Z"/>
<path class="g56" d="M536.1,570.3 528.5,568.8 530.6,568.0 537.7,569.4Z"/>
<path class="g47" d="M537.7,569.4 530.6,568.0 532.7,567.2 539.4,568.5Z"/>
<path class="w" d="M550.7,574.4 526.4,569.5 532.7,567.2 552.8,571.1Z"/>
<path class="g20" d="M579.5,616.3 569.3,616.4 569.6,615.6 580.1,615.4Z"/>
<path class="g20" d="M580.1,615.4 569.6,615.6 569.8,614.7 580.8,614.5Z"/>
<path class="g30" d="M580.8,614.5 569.8,614.7 570.1,613.8 581.5,613.6Z"/>
<path class="g20" d="M569.3,616.4 559.1,616.6 559.0,615.7 569.6,615.6Z"/>
<path class="g20" d="M569.6,615.6 559.0,615.7 558.9,614.9 569.8,614.7Z"/>
<path class="g30" d="M569.8,614.7 558.9,614.9 558.7,614.0 570.1,613.8Z"/>
<path class="g20" d="M559.1,616.6 548.9,616.8 548.4,615.9 559.0,615.7Z"/>
<path class="g20" d="M559.0,615.7 548.4,615.9 547.9,615.0 558.9,614.9Z"/>
<path class="g29" d="M558.9,614.9 547.9,615.0 547.4,614.2 558.7,614.0Z"/>
<path class="w" d="M579.5,616.3 548.9,616.8 547.4,614.2 581.5,613.6Z"/>
<path class="g64" d="M577.0,574.0 568.2,574.1 567.9,573.0 576.1,572.9Z"/>
<path class="g54" d="M576.1,572.9 567.9,573.0 567.5,572.0 575.2,571.9Z"/>
<path class="g44" d="M575.2,571.9 567.5,572.0 567.2,570.9 574.4,570.8Z"/>
<path class="g64" d="M568.2,574.1 559.5,574.2 559.6,573.2 567.9,573.0Z"/>
<path class="g54" d="M567.9,573.0 559.6,573.2 559.8,572.1 567.5,572.0Z"/>
<path class="g44" d="M567.5,572.0 559.8,572.1 560.0,571.0 567.2,570.9Z"/>
<path class="g64" d="M559.5,574.2 550.7,574.4 551.4,573.3 559.6,573.2Z"/>
<path class="g54" d="M559.6,573.2 551.4,573.3 552.1,572.2 559.8,572.1Z"/>
<path class="g44" d="M559.8,572.1 552.1,572.2 552.8,571.1 560.0,571.0Z"/>
<path class="w" d="M577.0,574.0 550.7,574.4 552.8,571.1 574.4,570.8Z"/>
<path class="g37" d="M612.2,606.2 602.0,608.6 602.5,605.9 612.9,603.4Z"/>
<path class="g48" d="M612.9,603.4 602.5,605.9 603.1,603.1 613.5,600.6Z"/>
<path class="g57" d="M613.5,600.6 603.1,603.1 603.6,600.4 614.2,597.8Z"/>
<path class="g39" d="M602.0,608.6 591.8,611.1 592.2,608.4 602.5,605.9Z"/>
<path class="g50" d="M602.5,605.9 592.2,608.4 592.5,605.7 603.1,603.1Z"/>
<path class="g60" d="M603.1,603.1 592.5,605.7 592.9,602.9 603.6,600.4Z"/>
<path class="g40" d="M591.8,611.1 581.5,613.6 581.7,610.9 592.2,608.4Z"/>
<path class="g51" d="M592.2,608.4 581.7,610.9 582.0,608.2 592.5,605.7Z"/>
<path class="g61" d="M592.5,605.7 582.0,608.2 582.2,605.5 592.9,602.9Z"/>
<path class="w" d="M612.2,606.2 581.5,613.6 582.2,605.5 614.2,597.8Z"/>
<path class="g39" d="M547.4,614.2 536.8,612.0 536.5,609.3 547.2,611.5Z"/>
<path class="g49" d="M547.2,611.5 536.5,609.3 536.1,606.6 546.9,608.8Z"/>
<path class="g59" d="M546.9,608.8 536.1,606.6 535.7,603.8 546.7,606.1Z"/>
<path class="g36" d="M536.8,612.0 526.3,609.8 525.8,607.1 536.5,609.3Z"/>
<path class="g47" d="M536.5,609.3 525.8,607.1 525.3,604.3 536.1,606.6Z"/>
<path class="g57" d="M536.1,606.6 525.3,604.3 524.8,601.6 535.7,603.8Z"/>
<path class="g34" d="M526.3,609.8 515.9,607.7 515.2,604.9 525.8,607.1Z"/>
<path class="g44" d="M525.8,607.1 515.2,604.9 514.6,602.1 525.3,604.3Z"/>
<path class="g54" d="M525.3,604.3 514.6,602.1 513.9,599.3 524.8,601.6Z"/>
<path class="w" d="M547.4,614.2 515.9,607.7 513.9,599.3 546.7,606.1Z"/>
<path class="g84" d="M607.6,575.9 598.3,578.1 596.5,575.5 605.3,573.4Z"/>
<path class="g78" d="M605.3,573.4 596.5,575.5 594.7,572.9 603.1,570.9Z"/>
<path class="g71" d="M603.1,570.9 594.7,572.9 592.9,570.3 600.8,568.4Z"/>
<path class="g86" d="M598.3,578.1 589.0,580.3 587.6,577.5 596.5,575.5Z"/>
<path class="g79" d="M596.5,575.5 587.6,577.5 586.3,574.8 594.7,572.9Z"/>
<path class="g71" d="M594.7,572.9 586.3,574.8 585.0,572.1 592.9,570.3Z"/>
<path class="g87" d="M589.0,580.3 579.6,582.5 578.7,579.6 587.6,577.5Z"/>
<path class="g79" d="M587.6,577.5 578.7,579.6 577.9,576.8 586.3,574.8Z"/>
<path class="g72" d="M586.3,574.8 577.9,576.8 577.0,574.0 585.0,572.1Z"/>
<path class="w" d="M607.6,575.9 579.6,582.5 577.0,574.0 600.8,568.4Z"/>
<path class="g86" d="M548.6,582.9 539.1,581.0 540.2,578.3 549.3,580.1Z"/>
<path class="g79" d="M549.3,580.1 540.2,578.3 541.4,575.5 550.0,577.2Z"/>
<path class="g71" d="M550.0,577.2 541.4,575.5 542.6,572.7 550.7,574.4Z"/>
<path class="g84" d="M539.1,581.0 529.5,579.1 531.2,576.4 540.2,578.3Z"/>
<path class="g78" d="M540.2,578.3 531.2,576.4 532.8,573.8 541.4,575.5Z"/>
<path class="g71" d="M541.4,575.5 532.8,573.8 534.4,571.1 542.6,572.7Z"/>
<path class="g82" d="M529.5,579.1 520.0,577.2 522.1,574.6 531.2,576.4Z"/>
<path class="g77" d="M531.2,576.4 522.1,574.6 524.2,572.1 532.8,573.8Z"/>
<path class="g71" d="M532.8,573.8 524.2,572.1 526.4,569.5 534.4,571.1Z"/>
<path class="w" d="M548.6,582.9 520.0,577.2 526.4,569.5 550.7,574.4Z"/>
<path class="g66" d="M614.2,597.8 603.6,600.4 603.2,596.6 613.7,594.1Z"/>
<path class="g75" d="M613.7,594.1 603.2,596.6 602.7,592.9 613.1,590.4Z"/>
<path class="g83" d="M613.1,590.4 602.7,592.9 602.3,589.1 612.5,586.7Z"/>
<path class="g69" d="M603.6,600.4 592.9,602.9 592.6,599.2 603.2,596.6Z"/>
<path class="g79" d="M603.2,596.6 592.6,599.2 592.3,595.4 602.7,592.9Z"/>
<path class="g88" d="M602.7,592.9 592.3,595.4 591.9,591.6 602.3,589.1Z"/>
<path class="g71" d="M592.9,602.9 582.2,605.5 582.0,601.7 592.6,599.2Z"/>
<path class="g82" d="M592.6,599.2 582.0,601.7 581.8,597.9 592.3,595.4Z"/>
<path class="g93" d="M592.3,595.4 581.8,597.9 581.5,594.1 591.9,591.6Z"/>
<path class="w" d="M614.2,597.8 582.2,605.5 581.5,594.1 612.5,586.7Z"/>
<path class="g41" d="M581.5,613.6 570.1,613.8 570.2,611.1 581.7,610.9Z"/>
<path class="g52" d="M581.7,610.9 570.2,611.1 570.3,608.4 582.0,608.2Z"/>
<path class="g62" d="M582.0,608.2 570.3,608.4 570.4,605.7 582.2,605.5Z"/>
<path class="g41" d="M570.1,613.8 558.7,614.0 558.7,611.3 570.2,611.1Z"/>
<path class="g52" d="M570.2,611.1 558.7,611.3 558.6,608.6 570.3,608.4Z"/>
<path class="g62" d="M570.3,608.4 558.6,608.6 558.6,605.9 570.4,605.7Z"/>
<path class="g40" d="M558.7,614.0 547.4,614.2 547.2,611.5 558.7,611.3Z"/>
<path class="g51" d="M558.7,611.3 547.2,611.5 546.9,608.8 558.6,608.6Z"/>
<path class="g61" d="M558.6,608.6 546.9,608.8 546.7,606.1 558.6,605.9Z"/>
<path class="w" d="M581.5,613.6 547.4,614.2 546.7,606.1 582.2,605.5Z"/>
<path class="g89" d="M612.5,586.7 602.3,589.1 601.0,585.4 610.9,583.1Z"/>
<path class="g91" d="M610.9,583.1 601.0,585.4 599.6,581.8 609.2,579.5Z"/>
<path class="g89" d="M609.2,579.5 599.6,581.8 598.3,578.1 607.6,575.9Z"/>
<path class="g95" d="M602.3,589.1 591.9,591.6 591.0,587.8 601.0,585.4Z"/>
<path class="g97" d="M601.0,585.4 591.0,587.8 590.0,584.0 599.6,581.8Z"/>
<path class="g92" d="M599.6,581.8 590.0,584.0 589.0,580.3 598.3,578.1Z"/>
<path class="g106" d="M591.9,591.6 581.5,594.1 580.9,590.2 591.0,587.8Z"/>
<path class="g106" d="M591.0,587.8 580.9,590.2 580.3,586.3 590.0,584.0Z"/>
<path class="g96" d="M590.0,584.0 580.3,586.3 579.6,582.5 589.0,580.3Z"/>
<path class="w" d="M612.5,586.7 581.5,594.1 579.6,582.5 607.6,575.9Z"/>
<path class="g69" d="M546.7,606.1 535.7,603.8 536.0,600.0 546.9,602.3Z"/>
<path class="g79" d="M546.9,602.3 536.0,600.0 536.3,596.2 547.0,598.4Z"/>
<path class="g90" d="M547.0,598.4 536.3,596.2 536.6,592.4 547.2,594.6Z"/>
<path class="g66" d="M535.7,603.8 524.8,601.6 525.2,597.8 536.0,600.0Z"/>
<path class="g75" d="M536.0,600.0 525.2,597.8 525.6,594.1 536.3,596.2Z"/>
<path class="g84" d="M536.3,596.2 525.6,594.1 526.0,590.3 536.6,592.4Z"/>
<path class="g62" d="M524.8,601.6 513.9,599.3 514.5,595.6 525.2,597.8Z"/>
<path class="g71" d="M525.2,597.8 514.5,595.6 515.0,591.9 525.6,594.1Z"/>
<path class="g78" d="M525.6,594.1 515.0,591.9 515.5,588.2 526.0,590.3Z"/>
<path class="w" d="M546.7,606.1 513.9,599.3 515.5,588.2 547.2,594.6Z"/>
<path class="g88" d="M579.6,582.5 569.3,582.6 568.9,579.8 578.7,579.6Z"/>
<path class="g80" d="M578.7,579.6 568.9,579.8 568.6,576.9 577.9,576.8Z"/>
<path class="g72" d="M577.9,576.8 568.6,576.9 568.2,574.1 577.0,574.0Z"/>
<path class="g88" d="M569.3,582.6 559.0,582.8 559.1,579.9 568.9,579.8Z"/>
<path class="g80" d="M568.9,579.8 559.1,579.9 559.3,577.1 568.6,576.9Z"/>
<path class="g72" d="M568.6,576.9 559.3,577.1 559.5,574.2 568.2,574.1Z"/>
<path class="g88" d="M559.0,582.8 548.6,582.9 549.3,580.1 559.1,579.9Z"/>
<path class="g79" d="M559.1,579.9 549.3,580.1 550.0,577.2 559.3,577.1Z"/>
<path class="g72" d="M559.3,577.1 550.0,577.2 550.7,574.4 559.5,574.2Z"/>
<path class="w" d="M579.6,582.5 548.6,582.9 550.7,574.4 577.0,574.0Z"/>
<path class="g100" d="M547.2,594.6 536.6,592.4 537.4,588.6 547.7,590.7Z"/>
<path class="g101" d="M547.7,590.7 537.4,588.6 538.2,584.8 548.2,586.8Z"/>
<path class="g94" d="M548.2,586.8 538.2,584.8 539.1,581.0 548.6,582.9Z"/>
<path class="g91" d="M536.6,592.4 526.0,590.3 527.2,586.6 537.4,588.6Z"/>
<path class="g93" d="M537.4,588.6 527.2,586.6 528.3,582.8 538.2,584.8Z"/>
<path class="g90" d="M538.2,584.8 528.3,582.8 529.5,579.1 539.1,581.0Z"/>
<path class="g84" d="M526.0,590.3 515.5,588.2 517.0,584.5 527.2,586.6Z"/>
<path class="g87" d="M527.2,586.6 517.0,584.5 518.5,580.9 528.3,582.8Z"/>
<path class="g86" d="M528.3,582.8 518.5,580.9 520.0,577.2 529.5,579.1Z"/>
<path class="w" d="M547.2,594.6 515.5,588.2 520.0,577.2 548.6,582.9Z"/>
<path class="g72" d="M582.2,605.5 570.4,605.7 570.3,601.9 582.0,601.7Z"/>
<path class="g84" d="M582.0,601.7 570.3,601.9 570.2,598.1 581.8,597.9Z"/>
<path class="g98" d="M581.8,597.9 570.2,598.1 570.1,594.2 581.5,594.1Z"/>
<path class="g72" d="M570.4,605.7 558.6,605.9 558.6,602.1 570.3,601.9Z"/>
<path class="g84" d="M570.3,601.9 558.6,602.1 558.6,598.2 570.2,598.1Z"/>
<path class="g100" d="M570.2,598.1 558.6,598.2 558.6,594.4 570.1,594.2Z"/>
<path class="g71" d="M558.6,605.9 546.7,606.1 546.9,602.3 558.6,602.1Z"/>
<path class="g82" d="M558.6,602.1 546.9,602.3 547.0,598.4 558.6,598.2Z"/>
<path class="g95" d="M558.6,598.2 547.0,598.4 547.2,594.6 558.6,594.4Z"/>
<path class="w" d="M582.2,605.5 546.7,606.1 547.2,594.6 581.5,594.1Z"/>
<path class="g122" d="M581.5,594.1 570.1,594.2 569.8,590.4 580.9,590.2Z"/>
<path class="g118" d="M580.9,590.2 569.8,590.4 569.6,586.5 580.3,586.3Z"/>
<path class="g98" d="M580.3,586.3 569.6,586.5 569.3,582.6 579.6,582.5Z"/>
<path class="g130" d="M570.1,594.2 558.6,594.4 558.8,590.5 569.8,590.4Z"/>
<path class="g122" d="M569.8,590.4 558.8,590.5 558.9,586.7 569.6,586.5Z"/>
<path class="g98" d="M569.6,586.5 558.9,586.7 559.0,582.8 569.3,582.6Z"/>
<path class="g116" d="M558.6,594.4 547.2,594.6 547.7,590.7 558.8,590.5Z"/>
<path class="g114" d="M558.8,590.5 547.7,590.7 548.2,586.8 558.9,586.7Z"/>
<path class="g97" d="M558.9,586.7 548.2,586.8 548.6,582.9 559.0,582.8Z"/>
<path class="w" d="M581.5,594.1 547.2,594.6 548.6,582.9 579.6,582.5Z"/>
</g>
<g shape-rendering="crispEdges" stroke-width=".7">
<path class="g44" d="M308.0,583.7 309.0,579.5 296.8,605.6 295.5,610.9Z"/>
<path class="g38" d="M309.0,579.5 310.0,575.5 298.2,600.4 296.8,605.6Z"/>
<path class="g33" d="M310.0,575.5 311.0,571.4 299.5,595.3 298.2,600.4Z"/>
<path class="w" d="M308.0,583.7 311.0,571.4 299.5,595.3 295.5,610.9Z"/>
<path class="g40" d="M428.8,569.7 428.4,573.7 444.5,598.2 445.0,593.1Z"/>
<path class="g45" d="M428.4,573.7 427.9,577.8 444.1,603.3 444.5,598.2Z"/>
<path class="g50" d="M427.9,577.8 427.5,581.9 443.6,608.6 444.1,603.3Z"/>
<path class="w" d="M428.8,569.7 427.5,581.9 443.6,608.6 445.0,593.1Z"/>
<path class="g44" d="M320.6,556.0 321.4,553.0 309.0,579.5 308.0,583.7Z"/>
<path class="g38" d="M321.4,553.0 322.1,550.0 310.0,575.5 309.0,579.5Z"/>
<path class="g33" d="M322.1,550.0 322.8,547.0 311.0,571.4 310.0,575.5Z"/>
<path class="w" d="M320.6,556.0 322.8,547.0 311.0,571.4 308.0,583.7Z"/>
<path class="g59" d="M314.3,595.1 312.2,591.3 300.6,620.6 303.2,625.6Z"/>
<path class="g54" d="M312.2,591.3 310.0,587.4 298.0,615.7 300.6,620.6Z"/>
<path class="g49" d="M310.0,587.4 308.0,583.7 295.5,610.9 298.0,615.7Z"/>
<path class="w" d="M314.3,595.1 308.0,583.7 295.5,610.9 303.2,625.6Z"/>
<path class="g40" d="M412.3,545.7 411.9,548.7 428.4,573.7 428.8,569.7Z"/>
<path class="g45" d="M411.9,548.7 411.5,551.7 427.9,577.8 428.4,573.7Z"/>
<path class="g50" d="M411.5,551.7 411.1,554.7 427.5,581.9 427.9,577.8Z"/>
<path class="w" d="M412.3,545.7 411.1,554.7 427.5,581.9 428.8,569.7Z"/>
<path class="g44" d="M333.5,527.8 334.0,525.9 321.4,553.0 320.6,556.0Z"/>
<path class="g38" d="M334.0,525.9 334.5,523.9 322.1,550.0 321.4,553.0Z"/>
<path class="g33" d="M334.5,523.9 334.9,522.0 322.8,547.0 322.1,550.0Z"/>
<path class="w" d="M333.5,527.8 334.9,522.0 322.8,547.0 320.6,556.0Z"/>
<path class="g59" d="M325.5,564.4 323.9,561.5 312.2,591.3 314.3,595.1Z"/>
<path class="g54" d="M323.9,561.5 322.3,558.8 310.0,587.4 312.2,591.3Z"/>
<path class="g49" d="M322.3,558.8 320.6,556.0 308.0,583.7 310.0,587.4Z"/>
<path class="w" d="M325.5,564.4 320.6,556.0 308.0,583.7 314.3,595.1Z"/>
<path class="g55" d="M427.5,581.9 424.0,585.7 439.4,613.5 443.6,608.6Z"/>
<path class="g60" d="M424.0,585.7 420.5,589.6 435.1,618.5 439.4,613.5Z"/>
<path class="g65" d="M420.5,589.6 417.0,593.6 430.8,623.6 435.1,618.5Z"/>
<path class="w" d="M427.5,581.9 417.0,593.6 430.8,623.6 443.6,608.6Z"/>
<path class="g73" d="M329.4,604.0 324.3,601.0 315.6,633.2 321.8,637.0Z"/>
<path class="g69" d="M324.3,601.0 319.3,598.1 309.3,629.4 315.6,633.2Z"/>
<path class="g64" d="M319.3,598.1 314.3,595.1 303.2,625.6 309.3,629.4Z"/>
<path class="w" d="M329.4,604.0 314.3,595.1 303.2,625.6 321.8,637.0Z"/>
<path class="g40" d="M395.3,521.1 395.0,523.1 411.9,548.7 412.3,545.7Z"/>
<path class="g45" d="M395.0,523.1 394.7,525.0 411.5,551.7 411.9,548.7Z"/>
<path class="g50" d="M394.7,525.0 394.4,527.0 411.1,554.7 411.5,551.7Z"/>
<path class="w" d="M395.3,521.1 394.4,527.0 411.1,554.7 412.3,545.7Z"/>
<path class="g55" d="M411.1,554.7 408.4,557.5 424.0,585.7 427.5,581.9Z"/>
<path class="g60" d="M408.4,557.5 405.7,560.3 420.5,589.6 424.0,585.7Z"/>
<path class="g65" d="M405.7,560.3 403.0,563.2 417.0,593.6 420.5,589.6Z"/>
<path class="w" d="M411.1,554.7 403.0,563.2 417.0,593.6 427.5,581.9Z"/>
<path class="g59" d="M336.9,533.2 335.8,531.4 323.9,561.5 325.5,564.4Z"/>
<path class="g54" d="M335.8,531.4 334.7,529.6 322.3,558.8 323.9,561.5Z"/>
<path class="g49" d="M334.7,529.6 333.5,527.8 320.6,556.0 322.3,558.8Z"/>
<path class="w" d="M336.9,533.2 333.5,527.8 320.6,556.0 325.5,564.4Z"/>
<path class="g73" d="M337.0,570.8 333.1,568.6 324.3,601.0 329.4,604.0Z"/>
<path class="g69" d="M333.1,568.6 329.3,566.5 319.3,598.1 324.3,601.0Z"/>
<path class="g64" d="M329.3,566.5 325.5,564.4 314.3,595.1 319.3,598.1Z"/>
<path class="w" d="M337.0,570.8 325.5,564.4 314.3,595.1 329.4,604.0Z"/>
<path class="g44" d="M346.7,499.2 346.9,498.2 334.0,525.9 333.5,527.8Z"/>
<path class="g38" d="M346.9,498.2 347.1,497.3 334.5,523.9 334.0,525.9Z"/>
<path class="g33" d="M347.1,497.3 347.3,496.3 334.9,522.0 334.5,523.9Z"/>
<path class="w" d="M346.7,499.2 347.3,496.3 334.9,522.0 333.5,527.8Z"/>
<path class="g70" d="M417.0,593.6 411.0,596.7 423.4,627.5 430.8,623.6Z"/>
<path class="g75" d="M411.0,596.7 404.9,599.8 415.8,631.6 423.4,627.5Z"/>
<path class="g80" d="M404.9,599.8 398.7,602.9 408.2,635.6 415.8,631.6Z"/>
<path class="w" d="M417.0,593.6 398.7,602.9 408.2,635.6 430.8,623.6Z"/>
<path class="g55" d="M394.4,527.0 392.6,528.8 408.4,557.5 411.1,554.7Z"/>
<path class="g60" d="M392.6,528.8 390.7,530.6 405.7,560.3 408.4,557.5Z"/>
<path class="g65" d="M390.7,530.6 388.9,532.5 403.0,563.2 405.7,560.3Z"/>
<path class="w" d="M394.4,527.0 388.9,532.5 403.0,563.2 411.1,554.7Z"/>
<path class="g40" d="M377.9,495.9 377.7,496.8 395.0,523.1 395.3,521.1Z"/>
<path class="g45" d="M377.7,496.8 377.5,497.8 394.7,525.0 395.0,523.1Z"/>
<path class="g50" d="M377.5,497.8 377.4,498.7 394.4,527.0 394.7,525.0Z"/>
<path class="w" d="M377.9,495.9 377.4,498.7 394.4,527.0 395.3,521.1Z"/>
<path class="g89" d="M350.9,608.6 343.7,607.1 339.7,641.0 348.7,643.0Z"/>
<path class="g83" d="M343.7,607.1 336.5,605.5 330.7,639.0 339.7,641.0Z"/>
<path class="g78" d="M336.5,605.5 329.4,604.0 321.8,637.0 330.7,639.0Z"/>
<path class="w" d="M350.9,608.6 329.4,604.0 321.8,637.0 348.7,643.0Z"/>
<path class="g73" d="M344.6,537.4 342.0,536.0 333.1,568.6 337.0,570.8Z"/>
<path class="g69" d="M342.0,536.0 339.5,534.6 329.3,566.5 333.1,568.6Z"/>
<path class="g64" d="M339.5,534.6 336.9,533.2 325.5,564.4 329.3,566.5Z"/>
<path class="w" d="M344.6,537.4 336.9,533.2 325.5,564.4 337.0,570.8Z"/>
<path class="g59" d="M348.4,501.8 347.8,500.9 335.8,531.4 336.9,533.2Z"/>
<path class="g54" d="M347.8,500.9 347.2,500.0 334.7,529.6 335.8,531.4Z"/>
<path class="g49" d="M347.2,500.0 346.7,499.2 333.5,527.8 334.7,529.6Z"/>
<path class="w" d="M348.4,501.8 346.7,499.2 333.5,527.8 336.9,533.2Z"/>
<path class="g70" d="M403.0,563.2 398.4,565.5 411.0,596.7 417.0,593.6Z"/>
<path class="g75" d="M398.4,565.5 393.8,567.7 404.9,599.8 411.0,596.7Z"/>
<path class="g81" d="M393.8,567.7 389.1,570.0 398.7,602.9 404.9,599.8Z"/>
<path class="w" d="M403.0,563.2 389.1,570.0 398.7,602.9 417.0,593.6Z"/>
<path class="g89" d="M353.2,574.1 347.8,573.0 343.7,607.1 350.9,608.6Z"/>
<path class="g84" d="M347.8,573.0 342.4,571.9 336.5,605.5 343.7,607.1Z"/>
<path class="g78" d="M342.4,571.9 337.0,570.8 329.4,604.0 336.5,605.5Z"/>
<path class="w" d="M353.2,574.1 337.0,570.8 329.4,604.0 350.9,608.6Z"/>
<path class="g55" d="M377.4,498.7 376.4,499.6 392.6,528.8 394.4,527.0Z"/>
<path class="g60" d="M376.4,499.6 375.5,500.5 390.7,530.6 392.6,528.8Z"/>
<path class="g65" d="M375.5,500.5 374.5,501.4 388.9,532.5 390.7,530.6Z"/>
<path class="w" d="M377.4,498.7 374.5,501.4 388.9,532.5 394.4,527.0Z"/>
<path class="g86" d="M398.7,602.9 391.0,604.7 398.6,637.9 408.2,635.6Z"/>
<path class="g92" d="M391.0,604.7 383.2,606.5 388.9,640.2 398.6,637.9Z"/>
<path class="g98" d="M383.2,606.5 375.4,608.2 379.2,642.5 388.9,640.2Z"/>
<path class="w" d="M398.7,602.9 375.4,608.2 379.2,642.5 408.2,635.6Z"/>
<path class="g41" d="M360.0,470.0 346.9,498.2 346.7,499.2Z"/>
<path class="g38" d="M360.0,470.0 347.1,497.3 346.9,498.2Z"/>
<path class="g36" d="M360.0,470.0 347.3,496.3 347.1,497.3Z"/>
<path class="w" d="M360.0,470.0 347.3,496.3 346.7,499.2Z"/>
<path class="g70" d="M388.9,532.5 385.7,534.0 398.4,565.5 403.0,563.2Z"/>
<path class="g75" d="M385.7,534.0 382.6,535.4 393.8,567.7 398.4,565.5Z"/>
<path class="g81" d="M382.6,535.4 379.5,536.9 389.1,570.0 393.8,567.7Z"/>
<path class="w" d="M388.9,532.5 379.5,536.9 389.1,570.0 403.0,563.2Z"/>
<path class="g103" d="M375.4,608.2 367.3,608.4 369.0,642.7 379.2,642.5Z"/>
<path class="g101" d="M367.3,608.4 359.1,608.5 358.9,642.8 369.0,642.7Z"/>
<path class="g94" d="M359.1,608.5 350.9,608.6 348.7,643.0 358.9,642.8Z"/>
<path class="w" d="M375.4,608.2 350.9,608.6 348.7,643.0 379.2,642.5Z"/>
<path class="g73" d="M352.3,503.8 351.0,503.1 342.0,536.0 344.6,537.4Z"/>
<path class="g69" d="M351.0,503.1 349.7,502.5 339.5,534.6 342.0,536.0Z"/>
<path class="g64" d="M349.7,502.5 348.4,501.8 336.9,533.2 339.5,534.6Z"/>
<path class="w" d="M352.3,503.8 348.4,501.8 336.9,533.2 344.6,537.4Z"/>
<path class="g42" d="M360.0,470.0 377.7,496.8 377.9,495.9Z"/>
<path class="g45" d="M360.0,470.0 377.5,497.8 377.7,496.8Z"/>
<path class="g48" d="M360.0,470.0 377.4,498.7 377.5,497.8Z"/>
<path class="w" d="M360.0,470.0 377.4,498.7 377.9,495.9Z"/>
<path class="g89" d="M355.5,539.5 351.8,538.8 347.8,573.0 353.2,574.1Z"/>
<path class="g84" d="M351.8,538.8 348.2,538.1 342.4,571.9 347.8,573.0Z"/>
<path class="g78" d="M348.2,538.1 344.6,537.4 337.0,570.8 342.4,571.9Z"/>
<path class="w" d="M355.5,539.5 344.6,537.4 337.0,570.8 353.2,574.1Z"/>
<path class="g86" d="M389.1,570.0 383.3,571.3 391.0,604.7 398.7,602.9Z"/>
<path class="g92" d="M383.3,571.3 377.5,572.6 383.2,606.5 391.0,604.7Z"/>
<path class="g99" d="M377.5,572.6 371.6,573.9 375.4,608.2 383.2,606.5Z"/>
<path class="w" d="M389.1,570.0 371.6,573.9 375.4,608.2 398.7,602.9Z"/>
<path class="g57" d="M360.0,470.0 347.8,500.9 348.4,501.8Z"/>
<path class="g54" d="M360.0,470.0 347.2,500.0 347.8,500.9Z"/>
<path class="g52" d="M360.0,470.0 346.7,499.2 347.2,500.0Z"/>
<path class="w" d="M360.0,470.0 346.7,499.2 348.4,501.8Z"/>
<path class="g104" d="M371.6,573.9 365.5,573.9 367.3,608.4 375.4,608.2Z"/>
<path class="g102" d="M365.5,573.9 359.3,574.0 359.1,608.5 367.3,608.4Z"/>
<path class="g95" d="M359.3,574.0 353.2,574.1 350.9,608.6 359.1,608.5Z"/>
<path class="w" d="M371.6,573.9 353.2,574.1 350.9,608.6 375.4,608.2Z"/>
<path class="g70" d="M374.5,501.4 373.0,502.1 385.7,534.0 388.9,532.5Z"/>
<path class="g75" d="M373.0,502.1 371.4,502.8 382.6,535.4 385.7,534.0Z"/>
<path class="g81" d="M371.4,502.8 369.8,503.5 379.5,536.9 382.6,535.4Z"/>
<path class="w" d="M374.5,501.4 369.8,503.5 379.5,536.9 388.9,532.5Z"/>
<path class="g58" d="M360.0,470.0 376.4,499.6 377.4,498.7Z"/>
<path class="g60" d="M360.0,470.0 375.5,500.5 376.4,499.6Z"/>
<path class="g63" d="M360.0,470.0 374.5,501.4 375.5,500.5Z"/>
<path class="w" d="M360.0,470.0 374.5,501.4 377.4,498.7Z"/>
<path class="g86" d="M379.5,536.9 375.6,537.7 383.3,571.3 389.1,570.0Z"/>
<path class="g93" d="M375.6,537.7 371.7,538.5 377.5,572.6 383.3,571.3Z"/>
<path class="g100" d="M371.7,538.5 367.7,539.4 371.6,573.9 377.5,572.6Z"/>
<path class="w" d="M379.5,536.9 367.7,539.4 371.6,573.9 389.1,570.0Z"/>
<path class="g89" d="M357.7,504.8 355.9,504.5 351.8,538.8 355.5,539.5Z"/>
<path class="g84" d="M355.9,504.5 354.1,504.1 348.2,538.1 351.8,538.8Z"/>
<path class="g78" d="M354.1,504.1 352.3,503.8 344.6,537.4 348.2,538.1Z"/>
<path class="w" d="M357.7,504.8 352.3,503.8 344.6,537.4 355.5,539.5Z"/>
<path class="g71" d="M360.0,470.0 351.0,503.1 352.3,503.8Z"/>
<path class="g69" d="M360.0,470.0 349.7,502.5 351.0,503.1Z"/>
<path class="g66" d="M360.0,470.0 348.4,501.8 349.7,502.5Z"/>
<path class="w" d="M360.0,470.0 348.4,501.8 352.3,503.8Z"/>
<path class="g106" d="M367.7,539.4 363.7,539.4 365.5,573.9 371.6,573.9Z"/>
<path class="g103" d="M363.7,539.4 359.6,539.5 359.3,574.0 365.5,573.9Z"/>
<path class="g95" d="M359.6,539.5 355.5,539.5 353.2,574.1 359.3,574.0Z"/>
<path class="w" d="M367.7,539.4 355.5,539.5 353.2,574.1 371.6,573.9Z"/>
<path class="g73" d="M360.0,470.0 373.0,502.1 374.5,501.4Z"/>
<path class="g76" d="M360.0,470.0 371.4,502.8 373.0,502.1Z"/>
<path class="g78" d="M360.0,470.0 369.8,503.5 371.4,502.8Z"/>
<path class="w" d="M360.0,470.0 369.8,503.5 374.5,501.4Z"/>
<path class="g87" d="M369.8,503.5 367.8,503.9 375.6,537.7 379.5,536.9Z"/>
<path class="g93" d="M367.8,503.9 365.9,504.3 371.7,538.5 375.6,537.7Z"/>
<path class="g102" d="M365.9,504.3 363.9,504.7 367.7,539.4 371.7,538.5Z"/>
<path class="w" d="M369.8,503.5 363.9,504.7 367.7,539.4 379.5,536.9Z"/>
<path class="g87" d="M360.0,470.0 355.9,504.5 357.7,504.8Z"/>
<path class="g84" d="M360.0,470.0 354.1,504.1 355.9,504.5Z"/>
<path class="g81" d="M360.0,470.0 352.3,503.8 354.1,504.1Z"/>
<path class="w" d="M360.0,470.0 352.3,503.8 357.7,504.8Z"/>
<path class="g108" d="M363.9,504.7 361.8,504.8 363.7,539.4 367.7,539.4Z"/>
<path class="g105" d="M361.8,504.8 359.8,504.8 359.6,539.5 363.7,539.4Z"/>
<path class="g96" d="M359.8,504.8 357.7,504.8 355.5,539.5 359.6,539.5Z"/>
<path class="w" d="M363.9,504.7 357.7,504.8 355.5,539.5 367.7,539.4Z"/>
<path class="g90" d="M360.0,470.0 367.8,503.9 369.8,503.5Z"/>
<path class="g94" d="M360.0,470.0 365.9,504.3 367.8,503.9Z"/>
<path class="g98" d="M360.0,470.0 363.9,504.7 365.9,504.3Z"/>
<path class="w" d="M360.0,470.0 363.9,504.7 369.8,503.5Z"/>
<path class="g110" d="M360.0,470.0 361.8,504.8 363.9,504.7Z"/>
<path class="g106" d="M360.0,470.0 359.8,504.8 361.8,504.8Z"/>
<path class="g101" d="M360.0,470.0 357.7,504.8 359.8,504.8Z"/>
<path class="w" d="M360.0,470.0 357.7,504.8 363.9,504.7Z"/>
</g>
</svg>

<div id="oh" class="abs">
 <div class="title abs"></div>
 <div class="close abs"></div>
 <svg class="abs" style="left:126px;top:14px" width="13" height="13" viewBox="0 0 13 13"><path d="M3 3 L10 10 M10 3 L3 10" stroke="#f6f6f6" stroke-width="1.3" fill="none"/></svg>
 <div class="btn" style="left:2px;top:56px;width:98px;height:19px"></div>
 <div class="btn" style="left:101px;top:56px;width:43px;height:19px"></div>
 <div class="cb" style="top:78px"></div>
 <div class="cb" style="top:99px"></div>
 <div class="cb" style="top:120px"></div>
 <div class="cb" style="top:141px"></div>
 <div class="cb" style="top:162px"></div>
 <div class="cb" style="top:183px"></div>
 <div class="cb" style="top:204px"></div>
 <svg class="abs" style="left:2px;top:183px" width="17" height="17" viewBox="0 0 17 17"><path d="M2.8 8 L4.7 8.2 L6.2 10.8 L13.8 2.8 L14.1 6.1 L5.9 14.1 L3.1 10 Z" fill="#dedede"/></svg>
 <svg class="abs" style="left:2px;top:204px" width="17" height="17" viewBox="0 0 17 17"><path d="M2.8 8 L4.7 8.2 L6.2 10.8 L13.8 2.8 L14.1 6.1 L5.9 14.1 L3.1 10 Z" fill="#dedede"/></svg>
 <div class="fld" style="left:3px;top:225px;width:113px;height:24px"></div>
 <div class="btn" style="left:118px;top:224px;width:26px;height:26px;background:#868686"></div>
 <div class="btn" style="left:2px;top:252px;width:110px;height:29px;background:#7489c8"></div>
 <div class="btn" style="left:113px;top:252px;width:31px;height:29px;background:#7489c8"></div>
 <div class="fld" style="left:3px;top:284px;width:113px;height:24px"></div>
 <div class="btn" style="left:118px;top:283px;width:26px;height:26px;background:#868686"></div>
 <div class="btn" style="left:2px;top:311px;width:81px;height:29px;background:#58967a"></div>
 <div class="btn" style="left:84px;top:311px;width:28px;height:29px;background:#58967a"></div>
 <div class="btn" style="left:113px;top:311px;width:31px;height:29px;background:#58967a"></div>
</div>

<div id="ol" class="abs">
 <div class="title abs"></div>
  <svg class="abs" style="left:6px;top:6px" width="24" height="24" viewBox="6 397 24 24">
  <path d="M9.2 413 H26.1 V418.7 H10.2 Q9.2 418.7 9.2 417.7 Z" fill="#33628a"/>
  <path d="M24.8 402 H26.1 V414 H24.8 Z" fill="#33628a"/>
  <path d="M7.9 400.6 L10.4 399.6 V413 L7.9 413.9 Z" fill="#74bdea"/>
  <path d="M10.3 399.6 Q10.3 399 11 399 H24.2 Q24.9 399 24.9 399.7 V413 H10.3 Z" fill="#2fa2c8"/>
 </svg>
 <span class="t" style="left:13.6px;top:10.3px;font-size:10.8px;font-weight:bold;color:#fff;transform:scaleX(.9)">M</span>
 <span class="t" style="left:14.2px;top:22.2px;font-size:3.3px;color:#cfdbe6;letter-spacing:.1px">MAYA</span>

 <svg class="abs" style="left:100px;top:5px" width="150" height="28" viewBox="0 0 150 28"><path d="M9 12.5 H21 M67.5 7.5 H78.5 V18.5 H67.5 Z M126.5 7 L137.5 18 M137.5 7 L126.5 18" stroke="#8d8d8d" stroke-width="1" fill="none"/></svg>
 <div class="fld" style="left:35px;top:67px;width:222px;height:22px"></div>
 <svg class="abs" style="left:240px;top:75px" width="14" height="8" viewBox="0 0 14 8"><path d="M1 1 H13 L7 7 Z" fill="#c8c8c8"/></svg>
  <svg class="abs" style="left:6px;top:67px" width="24" height="26" viewBox="6 458 24 26">
  <rect x="13.1" y="462.5" width="7.6" height="17.2" fill="#3d3d3d"/>
  <g fill="#5f5f5f"><path d="M7.9 460.8 V467.4 L13.9 464.1 Z"/><path d="M21 460.8 V467.4 L26.8 464.1 Z"/><path d="M7.9 474.5 V481.3 L13.9 477.9 Z"/><path d="M21 474.5 V481.3 L26.8 477.9 Z"/></g>
  <path d="M12.4 461.5 H20 M12.4 480.8 H20 M10.6 468.2 V473.8 M24.4 468.2 V473.8" stroke="#5a5a5a" stroke-width="1.2" fill="none"/>
 </svg>

 <div class="list abs"></div>
 <div class="sb abs"></div>
 <svg class="abs" style="left:244px;top:99px" width="14" height="8" viewBox="0 0 14 8"><path d="M0.8 7 H12.2 L6.5 1 Z" fill="#b8b8b8"/></svg>
 <svg class="abs" style="left:0;top:0" width="262" height="409" viewBox="0 391 262 409">
<g fill="#bdbdbd"><rect x="47" y="494.0" width="11.6" height="9"/><path d="M60 498.5 L64.9 492.5 V504.1 Z"/></g>
<g fill="#bdbdbd"><rect x="47" y="520.0" width="11.6" height="9"/><path d="M60 524.5 L64.9 518.5 V530.1 Z"/></g>
<g fill="#bdbdbd"><rect x="47" y="546.0" width="11.6" height="9"/><path d="M60 550.5 L64.9 544.5 V556.1 Z"/></g>
<g fill="#bdbdbd"><rect x="47" y="572.0" width="11.6" height="9"/><path d="M60 576.5 L64.9 570.5 V582.1 Z"/></g>
<path fill="#c6c6c6" d="M51.3 598.4 L55.9 595.0 L60.5 598.4 L55.9 601.8Z M45.1 602.9 L49.7 599.5 L54.3 602.9 L49.7 606.3Z M57.5 602.9 L62.1 599.5 L66.7 602.9 L62.1 606.3Z M51.3 607.5 L55.9 604.1 L60.5 607.5 L55.9 610.9Z"/>
<path fill="#c6c6c6" d="M51.3 624.4 L55.9 621.0 L60.5 624.4 L55.9 627.8Z M45.1 628.9 L49.7 625.5 L54.3 628.9 L49.7 632.3Z M57.5 628.9 L62.1 625.5 L66.7 628.9 L62.1 632.3Z M51.3 633.5 L55.9 630.1 L60.5 633.5 L55.9 636.9Z"/>
<path fill="#c6c6c6" d="M51.3 650.4 L55.9 647.0 L60.5 650.4 L55.9 653.8Z M45.1 654.9 L49.7 651.5 L54.3 654.9 L49.7 658.3Z M57.5 654.9 L62.1 651.5 L66.7 654.9 L62.1 658.3Z M51.3 659.5 L55.9 656.1 L60.5 659.5 L55.9 662.9Z"/>
<path fill="#c6c6c6" d="M51.3 676.4 L55.9 673.0 L60.5 676.4 L55.9 679.8Z M45.1 680.9 L49.7 677.5 L54.3 680.9 L49.7 684.3Z M57.5 680.9 L62.1 677.5 L66.7 680.9 L62.1 684.3Z M51.3 685.5 L55.9 682.1 L60.5 685.5 L55.9 688.9Z"/>
<path fill="#c6c6c6" d="M51.3 702.4 L55.9 699.0 L60.5 702.4 L55.9 705.8Z M45.1 706.9 L49.7 703.5 L54.3 706.9 L49.7 710.3Z M57.5 706.9 L62.1 703.5 L66.7 706.9 L62.1 710.3Z M51.3 711.5 L55.9 708.1 L60.5 711.5 L55.9 714.9Z"/>
<circle cx="55.9" cy="732.8" r="9.9" fill="none" stroke="#b0b0b0" stroke-width="1.3"/>
<rect x="55" y="727.8" width="5.9" height="10.3" fill="#3ba9c9"/>
<circle cx="53.4" cy="735.6" r="3.5" fill="#c8c8c8"/>
<circle cx="55.9" cy="758.8" r="9.9" fill="none" stroke="#b0b0b0" stroke-width="1.3"/>
<rect x="55" y="753.8" width="5.9" height="10.3" fill="#3ba9c9"/>
<circle cx="53.4" cy="761.6" r="3.5" fill="#c8c8c8"/>
</svg>
</div>

<div id="ex" class="abs">
  <div class="file abs"></div>
 <div class="rline abs"></div>
 <svg class="abs" style="left:0;top:0" width="794" height="340" viewBox="389 18 794 340">
  <!-- title folder icon -->
  <path d="M401 28 H411 V37.6 L412 38.2 V43 H403.6 V31 Z" fill="#f3d271"/>
  <path d="M400.2 29 L403.8 31 V43.2 L402.6 45 L400.2 43.6 Z" fill="#fbe6a4"/>
  <path d="M423.5 29 V45 M457.5 29 V45" stroke="#8c8c8c" stroke-width="1" fill="none"/>
  <path d="M437 35 H444 V36.2 H437 Z M437.6 38.6 H443.4 L440.5 41.4 Z" fill="#000"/>
  <!-- window controls -->
  <path d="M1030.5 35.5 H1041.5 M1088.5 30.5 H1099.5 V41.5 H1088.5 Z M1147 30 L1158.5 41.5 M1158.5 30 L1147 41.5" stroke="#7a7a7a" stroke-width="1" fill="none"/>
  <!-- ribbon chevron + help -->
  <path d="M1138 66.5 L1144 72 L1150 66.5" stroke="#8a8a8a" stroke-width="1.1" fill="none"/>
  <circle cx="1170" cy="69" r="9.6" fill="#0b63b5" stroke="#0a4f93" stroke-width="0.8"/>
  <!-- nav arrows -->
  <path d="M405.6 106 H419.6 M411 100.6 L405.6 106 L411 111.4" stroke="#727272" stroke-width="1.5" fill="none"/>
  <path d="M444.4 106 H458.4 M453 100.6 L458.4 106 L453 111.4" stroke="#d4d4d4" stroke-width="1.5" fill="none"/>
  <path d="M477.4 103.8 L481.5 107.8 L485.6 103.8" stroke="#727272" stroke-width="1.4" fill="none"/>
  <path d="M507 113.4 V99.8 M501.9 105 L507 99.8 L512.1 105" stroke="#727272" stroke-width="1.5" fill="none"/>
  <!-- address box -->
  <rect x="523.5" y="91.5" width="285" height="27" fill="#fff" stroke="#d9d9d9"/>
  <path d="M784.5 92 V118" stroke="#d9d9d9" fill="none"/>
  <path d="M530 95.6 H539.8 V105 L540.8 105.6 V110.4 H532.6 V98.6 Z" fill="#f3d271"/>
  <path d="M529.2 96.6 L532.8 98.6 V110.8 L531.6 112.6 L529.2 111.2 Z" fill="#fbe6a4"/>
  <path d="M632.4 100.6 L636.8 105 L632.4 109.4" stroke="#6a6a6a" stroke-width="1.2" fill="none"/>
  <path d="M767.4 103.9 L772.9 109.2 L778.3 103.8" stroke="#666" stroke-width="1.5" fill="none"/>
  <path d="M801.05 101.2 A6.3 6.3 0 1 1 795.4 99.9" stroke="#6e6e6e" stroke-width="1.4" fill="none"/>
  <path d="M791.3 99.4 H795.8 V103.6" stroke="#6e6e6e" stroke-width="1.4" fill="none"/>
  <!-- search box -->
  <rect x="821.5" y="91.5" width="359" height="27" fill="#fff" stroke="#d9d9d9"/>
  <circle cx="1165.2" cy="103.6" r="3.6" stroke="#555" stroke-width="1.5" fill="none"/>
  <path d="M1162.6 106.4 L1156.2 111.6" stroke="#555" stroke-width="1.8" fill="none"/>
  <!-- column header -->
  <path d="M560.4 132.6 L565 128.4 L569.6 132.6" stroke="#7a7a7a" stroke-width="1" fill="none"/>
  <path d="M728.5 128 V160 M908.5 128 V160 M1058.5 128 V160 M1158.5 128 V160" stroke="#e5e5e5" fill="none"/>
  <path d="M462.5 335 V351" stroke="#f0f0f0" fill="none"/>
  <!-- view icons -->
  <rect x="1122.5" y="329.5" width="27" height="28" fill="#cce8ff" stroke="#26a0da"/>
  <g fill="#fff" stroke="#8a8a8a" stroke-width=".8"><rect x="1128.4" y="336.4" width="5" height="4.4"/><rect x="1128.4" y="341.6" width="5" height="4.4"/><rect x="1128.4" y="346.8" width="5" height="4.4"/></g>
  <rect x="1130" y="338" width="2" height="1.6" fill="#3a78c2"/><rect x="1130" y="343.2" width="2" height="1.6" fill="#d08a2c"/><rect x="1130" y="348.4" width="2" height="1.6" fill="#b5482a"/>
  <path d="M1135 338.6 H1140 M1141.6 338.6 H1146 M1135 343.6 H1140 M1141.6 343.6 H1146 M1135 348.6 H1140 M1141.6 348.6 H1146" stroke="#7a7a7a" stroke-width="1" fill="none"/>
  <rect x="1155.5" y="336.5" width="17" height="13" fill="#fff" stroke="#a6a6a6"/>
  <rect x="1157.2" y="338.2" width="13.6" height="9.6" fill="#5a9be0"/>
  <path d="M1157.2 344 L1160.5 341.6 L1164 344.4 L1170.8 343 V347.8 H1157.2 Z" fill="#3d6d8f"/>
  <path d="M1157.2 346.4 H1170.8 V347.8 H1157.2 Z" fill="#dfe8f0"/>
 </svg>

</div>
<div id="texts">
<span class="t" id="t0" style="left:50.30px;top:45.00px;font-size:14.5px;color:#98a3b3;transform:scaleX(1.0276);">objHandler v1.9</span>
<span class="t" id="t1" style="left:69.00px;top:73.50px;font-size:13.5px;color:#cccccc;transform:scaleX(0.9692);">by Malcolm341</span>
<span class="t" id="t2" style="left:55.50px;top:92.30px;font-size:13.5px;color:#000;transform:scaleX(0.9756);">click for help</span>
<span class="t" id="t3" style="left:149.40px;top:92.30px;font-size:13.5px;color:#000;transform:scaleX(0.9451);">reset</span>
<span class="t" id="t4" style="left:66.00px;top:113.60px;font-size:13.5px;color:#cccccc;transform:scaleX(0.9760);">file for each mesh</span>
<span class="t" id="t5" style="left:66.00px;top:134.60px;font-size:13.5px;color:#cccccc;transform:scaleX(0.9834);">triangulate</span>
<span class="t" id="t6" style="left:66.00px;top:155.60px;font-size:13.5px;color:#cccccc;transform:scaleX(0.9555);">combine meshes</span>
<span class="t" id="t7" style="left:66.00px;top:176.60px;font-size:13.5px;color:#cccccc;transform:scaleX(0.9588);">materials</span>
<span class="t" id="t8" style="left:66.00px;top:197.60px;font-size:13.5px;color:#cccccc;transform:scaleX(0.9652);">fix materials</span>
<span class="t" id="t9" style="left:66.00px;top:218.60px;font-size:13.5px;color:#cccccc;transform:scaleX(0.9995);">smooth groups</span>
<span class="t" id="t10" style="left:66.00px;top:239.60px;font-size:13.5px;color:#cccccc;transform:scaleX(0.9634);">normals</span>
<span class="t" id="t11" style="left:49.25px;top:264.40px;font-size:13.5px;color:#cccccc;transform:scaleX(0.9546);">C:/obj_temp</span>
<span class="t" id="t12" style="left:166.08px;top:263.50px;font-size:13.5px;color:#000;transform:scaleX(0.9209);">...</span>
<span class="t" id="t13" style="left:67.50px;top:293.20px;font-size:13.5px;color:#000;transform:scaleX(1.0247);">export obj</span>
<span class="t" id="t14" style="left:158.00px;top:293.20px;font-size:13.5px;color:#000;transform:scaleX(1.0114);">find</span>
<span class="t" id="t15" style="left:49.25px;top:323.50px;font-size:13.5px;color:#7c7c7c;transform:scaleX(1.0111);">import location</span>
<span class="t" id="t16" style="left:166.08px;top:322.50px;font-size:13.5px;color:#000;transform:scaleX(0.9209);">...</span>
<span class="t" id="t17" style="left:52.00px;top:352.75px;font-size:13.5px;color:#000;transform:scaleX(1.0418);">import obj</span>
<span class="t" id="t18" style="left:132.00px;top:352.75px;font-size:13.5px;color:#000;transform:scaleX(0.9254);">all</span>
<span class="t" id="t19" style="left:158.00px;top:352.75px;font-size:13.5px;color:#000;transform:scaleX(1.0114);">find</span>
<span class="t" id="t20" style="left:32.60px;top:402.25px;font-size:14.5px;color:#98a3b3;transform:scaleX(0.9748);">Outlin...</span>
<span class="t" id="t21" style="left:8.04px;top:435.90px;font-size:13.5px;color:#cccccc;transform:scaleX(0.9560);">Display</span>
<span class="t" id="t22" style="left:66.00px;top:435.90px;font-size:13.5px;color:#cccccc;transform:scaleX(0.9053);">Show</span>
<span class="t" id="t23" style="left:111.51px;top:435.90px;font-size:13.5px;color:#cccccc;transform:scaleX(0.9864);">Help</span>
<span class="t" id="t24" style="left:38.00px;top:463.60px;font-size:13.5px;color:#a0a0a0;transform:scaleX(0.8916);">Search...</span>
<span class="t" id="t25" style="left:70.50px;top:492.80px;font-size:13.5px;color:#7e7e7e;transform:scaleX(0.9846);">persp</span>
<span class="t" id="t26" style="left:70.50px;top:518.80px;font-size:13.5px;color:#7e7e7e;transform:scaleX(1.0269);">top</span>
<span class="t" id="t27" style="left:70.50px;top:544.80px;font-size:13.5px;color:#7e7e7e;transform:scaleX(1.0087);">front</span>
<span class="t" id="t28" style="left:70.50px;top:570.80px;font-size:13.5px;color:#7e7e7e;transform:scaleX(0.9585);">side</span>
<span class="t" id="t29" style="left:70.50px;top:596.80px;font-size:13.5px;color:#cccccc;transform:scaleX(0.8774);">cube_01</span>
<span class="t" id="t30" style="left:70.50px;top:622.80px;font-size:13.5px;color:#cccccc;transform:scaleX(0.9069);">sphere_01</span>
<span class="t" id="t31" style="left:70.50px;top:648.80px;font-size:13.5px;color:#cccccc;transform:scaleX(0.9066);">pipe_01</span>
<span class="t" id="t32" style="left:70.50px;top:674.80px;font-size:13.5px;color:#cccccc;transform:scaleX(0.9072);">torus_01</span>
<span class="t" id="t33" style="left:70.50px;top:700.80px;font-size:13.5px;color:#cccccc;transform:scaleX(0.8774);">cone_01</span>
<span class="t" id="t34" style="left:70.50px;top:726.80px;font-size:13.5px;color:#cccccc;transform:scaleX(0.9466);">defaultLightSet</span>
<span class="t" id="t35" style="left:70.50px;top:752.80px;font-size:13.5px;color:#cccccc;transform:scaleX(0.9524);">defaultObjectSet</span>
<span class="t" id="t36" style="left:465.40px;top:29.00px;font-size:15.0px;color:#9b9b9b;transform:scaleX(1.0120);">obj_temp</span>
<span class="t" id="t37" style="left:413.48px;top:64.00px;font-size:12.5px;color:#fff;transform:scaleX(0.9172);">File</span>
<span class="t" id="t38" style="left:475.46px;top:64.00px;font-size:12.5px;color:#1e1e1e;transform:scaleX(1.0404);">Home</span>
<span class="t" id="t39" style="left:546.25px;top:64.00px;font-size:12.5px;color:#1e1e1e;transform:scaleX(0.9595);">Share</span>
<span class="t" id="t40" style="left:614.00px;top:64.00px;font-size:12.5px;color:#1e1e1e;transform:scaleX(0.9626);">View</span>
<span class="t" id="t41" style="left:553.25px;top:97.60px;font-size:11.0px;color:#3c3c3c;transform:scaleX(1.2500);">«</span>
<span class="t" id="t42" style="left:571.25px;top:96.80px;font-size:15.0px;color:#111;transform:scaleX(0.8410);">SSD_2...</span>
<span class="t" id="t43" style="left:648.20px;top:96.80px;font-size:15.0px;color:#111;transform:scaleX(1.0071);">obj_temp</span>
<span class="t" id="t44" style="left:831.50px;top:96.80px;font-size:15.0px;color:#6d6d6d;transform:scaleX(0.9747);">Search obj_temp</span>
<span class="t" id="t45" style="left:409.80px;top:136.80px;font-size:15.0px;color:#4c607a;transform:scaleX(0.9956);">Name</span>
<span class="t" id="t46" style="left:735.55px;top:136.80px;font-size:15.0px;color:#4c607a;transform:scaleX(1.0460);">Date modified</span>
<span class="t" id="t47" style="left:916.50px;top:136.80px;font-size:15.0px;color:#4c607a;transform:scaleX(0.9354);">Type</span>
<span class="t" id="t48" style="left:1066.00px;top:136.80px;font-size:15.0px;color:#4c607a;transform:scaleX(0.9224);">Size</span>
<span class="t" id="t49" style="left:719.30px;top:182.00px;font-size:15.0px;color:#6d6d6d;transform:scaleX(1.0005);">This folder is empty.</span>
<span class="t" id="t50" style="left:405.80px;top:335.80px;font-size:15.0px;color:#1e395b;transform:scaleX(0.9969);">0 items</span>
<span class="t" id="t51" style="left:1167.30px;top:62.90px;font-size:14.5px;color:#fff;transform:scaleX(0.7000);font-weight:bold;">?</span>
</div>
</body></html>
